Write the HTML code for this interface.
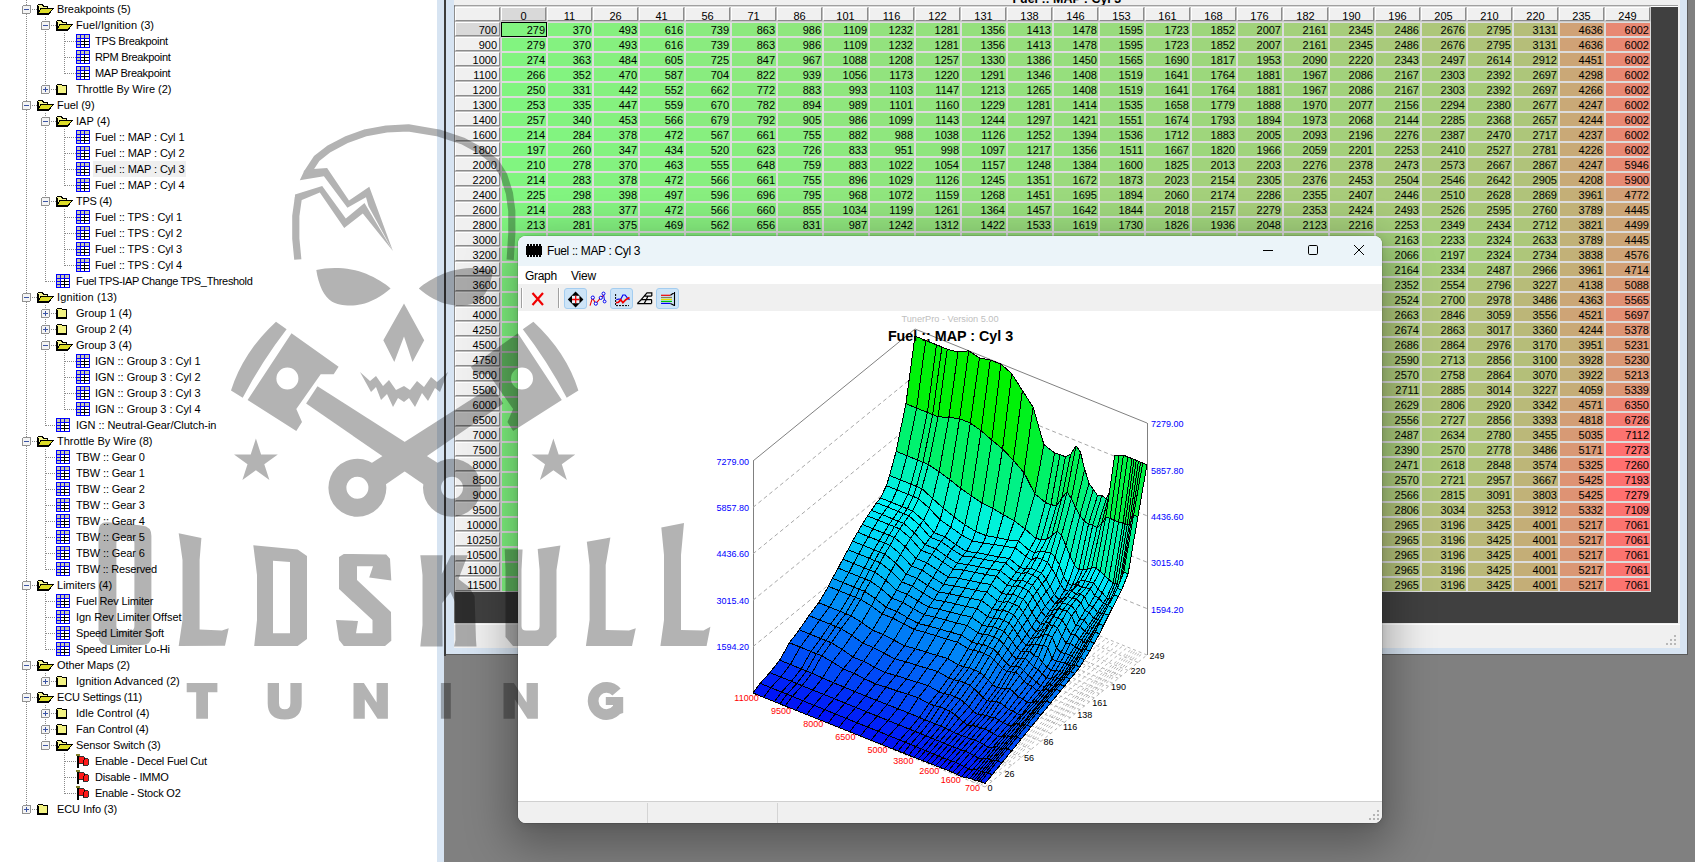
<!DOCTYPE html><html><head><meta charset="utf-8"><title>TunerPro</title><style>
*{box-sizing:border-box;margin:0;padding:0}
html,body{width:1695px;height:862px;overflow:hidden;background:#fff;font-family:"Liberation Sans",sans-serif;}
.abs{position:absolute}
#tree{position:absolute;left:0;top:0;width:437px;height:862px;background:#fff;font-size:11px;color:#000;overflow:hidden}
.ti{position:absolute;height:16px;line-height:16px;white-space:nowrap;letter-spacing:-0.1px}
.sel{background:#efefef}
#split{position:absolute;left:437px;top:0;width:9px;height:862px;background:linear-gradient(90deg,#d7e4f2 7px,#808080 7px)}
#mdi{position:absolute;left:446px;top:0;width:1249px;height:862px;background:#808080;overflow:hidden}
#tw{position:absolute;left:0;top:-30px;width:1242px;height:685px;background:#d7e4f2;border-right:1px solid #5a5a5a;border-bottom:1px solid #5a5a5a}
#twin{position:absolute;left:8px;top:30px;width:1226px;height:648px;background:#f0f0f0;overflow:hidden}
#gridbg{position:absolute;left:0;top:5px;width:1224px;height:618px;background:#404040;border-top:1px solid #a0a0a0;border-left:1px solid #696969;box-shadow:inset 0 1px 0 #fff}
#gridcells{position:absolute;left:1px;top:7px;width:1196px;height:585px;background:#dcdcdc}
.hc{position:absolute;height:14px;background:#f0f0f0;border:1px solid;border-color:#fff #8c8c8c #8c8c8c #fff;outline:0;font-size:11px;line-height:15px;overflow:hidden;box-shadow:0 0 0 0.5px #b4b4b4}
.hcs{background:#d9d9d9}
.dc{position:absolute;width:44px;height:13px;font-size:11px;line-height:14px;text-align:right;padding-right:1px;color:#000}
#status{position:absolute;left:0;top:624px;width:1226px;height:24px;background:#f0f0f0;border-top:1px solid #fff}

#gw{position:absolute;left:518px;top:236px;width:864px;height:587px;border-radius:8px;background:#fff;overflow:hidden;box-shadow:0 0 0 1px rgba(0,0,0,.10)}
#gsh{position:absolute;left:518px;top:236px;width:864px;height:587px;border-radius:8px;box-shadow:0 14px 44px 10px rgba(0,0,0,.30),0 2px 8px 0 rgba(0,0,0,.10)}
#gtitle{position:absolute;left:0;top:0;width:864px;height:30px;background:#ebf4f9}
#gmenu{position:absolute;left:0;top:30px;width:864px;height:18px;background:#fff;font-size:12px}
#gtool{position:absolute;left:0;top:48px;width:864px;height:27px;background:#f0f0f0}
#gstat{position:absolute;left:0;top:565px;width:864px;height:22px;background:#f0f0f0;border-top:1px solid #d0d0d0}
.tb{position:absolute;top:52px;width:23px;height:21px;border-radius:3px}
.tbs{background:#cde4f7;border:1px solid #a4cdf0}
</style></head><body><div id="tree"><svg class="abs" style="left:0;top:0" width="437" height="862" fill="none" stroke="#8a8a8a" stroke-width="1" stroke-dasharray="1 1" shape-rendering="crispEdges"><defs>
<g id="tbl" stroke-dasharray="none"><rect x="0.5" y="0.5" width="13" height="13" fill="#fff" stroke="#0000ff"/><rect x="1" y="1" width="12" height="3" fill="#c8c8b0" stroke="none"/><rect x="1" y="1" width="3" height="12" fill="#c8c8b0" stroke="none"/>
<path d="M4.5 0V14M0 4.5H14M0 7.5H4M0 10.5H4M8.5 0V4" stroke="#0000ff" stroke-width="1"/><path d="M8.5 5V13M5 7.5H13M5 10.5H13" stroke="#000" stroke-width="1"/></g>
<g id="flag" stroke-dasharray="none" stroke="none"><rect x="0" y="0" width="4" height="1.5" fill="#80802a"/><rect x="1" y="1.5" width="2" height="12.5" fill="#000"/><path d="M3 2.5H8V4.5H12V11H7V9H3Z" fill="#ff1a1a"/><path d="M3 2.5H8V4.5H12V11H7V9H3" fill="none" stroke="#000" stroke-width="0.8"/><path d="M8 4.5L7 9" stroke="#000" stroke-width="0.8"/></g>
</defs><line x1="31.5" y1="9.5" x2="37" y2="9.5"/><line x1="50.5" y1="25.5" x2="56" y2="25.5"/><line x1="64.5" y1="41.5" x2="76" y2="41.5"/><line x1="64.5" y1="57.5" x2="76" y2="57.5"/><line x1="64.5" y1="73.5" x2="76" y2="73.5"/><line x1="50.5" y1="89.5" x2="56" y2="89.5"/><line x1="31.5" y1="105.5" x2="37" y2="105.5"/><line x1="50.5" y1="121.5" x2="56" y2="121.5"/><line x1="64.5" y1="137.5" x2="76" y2="137.5"/><line x1="64.5" y1="153.5" x2="76" y2="153.5"/><line x1="64.5" y1="169.5" x2="76" y2="169.5"/><line x1="64.5" y1="185.5" x2="76" y2="185.5"/><line x1="50.5" y1="201.5" x2="56" y2="201.5"/><line x1="64.5" y1="217.5" x2="76" y2="217.5"/><line x1="64.5" y1="233.5" x2="76" y2="233.5"/><line x1="64.5" y1="249.5" x2="76" y2="249.5"/><line x1="64.5" y1="265.5" x2="76" y2="265.5"/><line x1="45.5" y1="281.5" x2="56" y2="281.5"/><line x1="31.5" y1="297.5" x2="37" y2="297.5"/><line x1="50.5" y1="313.5" x2="56" y2="313.5"/><line x1="50.5" y1="329.5" x2="56" y2="329.5"/><line x1="50.5" y1="345.5" x2="56" y2="345.5"/><line x1="64.5" y1="361.5" x2="76" y2="361.5"/><line x1="64.5" y1="377.5" x2="76" y2="377.5"/><line x1="64.5" y1="393.5" x2="76" y2="393.5"/><line x1="64.5" y1="409.5" x2="76" y2="409.5"/><line x1="45.5" y1="425.5" x2="56" y2="425.5"/><line x1="31.5" y1="441.5" x2="37" y2="441.5"/><line x1="45.5" y1="457.5" x2="56" y2="457.5"/><line x1="45.5" y1="473.5" x2="56" y2="473.5"/><line x1="45.5" y1="489.5" x2="56" y2="489.5"/><line x1="45.5" y1="505.5" x2="56" y2="505.5"/><line x1="45.5" y1="521.5" x2="56" y2="521.5"/><line x1="45.5" y1="537.5" x2="56" y2="537.5"/><line x1="45.5" y1="553.5" x2="56" y2="553.5"/><line x1="45.5" y1="569.5" x2="56" y2="569.5"/><line x1="31.5" y1="585.5" x2="37" y2="585.5"/><line x1="45.5" y1="601.5" x2="56" y2="601.5"/><line x1="45.5" y1="617.5" x2="56" y2="617.5"/><line x1="45.5" y1="633.5" x2="56" y2="633.5"/><line x1="45.5" y1="649.5" x2="56" y2="649.5"/><line x1="31.5" y1="665.5" x2="37" y2="665.5"/><line x1="50.5" y1="681.5" x2="56" y2="681.5"/><line x1="31.5" y1="697.5" x2="37" y2="697.5"/><line x1="50.5" y1="713.5" x2="56" y2="713.5"/><line x1="50.5" y1="729.5" x2="56" y2="729.5"/><line x1="50.5" y1="745.5" x2="56" y2="745.5"/><line x1="64.5" y1="761.5" x2="76" y2="761.5"/><line x1="64.5" y1="777.5" x2="76" y2="777.5"/><line x1="64.5" y1="793.5" x2="76" y2="793.5"/><line x1="31.5" y1="809.5" x2="37" y2="809.5"/><line x1="26.5" y1="0" x2="26.5" y2="809"/><line x1="45.5" y1="17" x2="45.5" y2="90"/><line x1="64.5" y1="33" x2="64.5" y2="74"/><line x1="45.5" y1="113" x2="45.5" y2="282"/><line x1="64.5" y1="129" x2="64.5" y2="186"/><line x1="64.5" y1="209" x2="64.5" y2="266"/><line x1="45.5" y1="305" x2="45.5" y2="426"/><line x1="64.5" y1="353" x2="64.5" y2="410"/><line x1="45.5" y1="449" x2="45.5" y2="570"/><line x1="45.5" y1="593" x2="45.5" y2="650"/><line x1="45.5" y1="673" x2="45.5" y2="682"/><line x1="45.5" y1="705" x2="45.5" y2="746"/><line x1="64.5" y1="753" x2="64.5" y2="794"/><g transform="translate(22,5)"><rect x="0.5" y="0.5" width="8" height="8" rx="1.5" fill="#f4f4f4" stroke="#919191" stroke-dasharray="none"/><path d="M2 4.5H7" stroke="#3c55a5" stroke-width="1" stroke-dasharray="none"/></g><g transform="translate(37,4)" stroke-dasharray="none" stroke="#000" stroke-width="1"><path d="M0.5 10.5V1.5L2 0.5H5L6.5 2H10.5V4.5" fill="#f6f690"/><path d="M0.5 10.5L4 4.5H16L11.5 10.5Z" fill="#dcdc28"/><path d="M1 2V10M0.5 10H11.5" stroke-width="1.6"/></g><g transform="translate(41,21)"><rect x="0.5" y="0.5" width="8" height="8" rx="1.5" fill="#f4f4f4" stroke="#919191" stroke-dasharray="none"/><path d="M2 4.5H7" stroke="#3c55a5" stroke-width="1" stroke-dasharray="none"/></g><g transform="translate(56,20)" stroke-dasharray="none" stroke="#000" stroke-width="1"><path d="M0.5 10.5V1.5L2 0.5H5L6.5 2H10.5V4.5" fill="#f6f690"/><path d="M0.5 10.5L4 4.5H16L11.5 10.5Z" fill="#dcdc28"/><path d="M1 2V10M0.5 10H11.5" stroke-width="1.6"/></g><use href="#tbl" x="76" y="34"/><use href="#tbl" x="76" y="50"/><use href="#tbl" x="76" y="66"/><g transform="translate(41,85)"><rect x="0.5" y="0.5" width="8" height="8" rx="1.5" fill="#f4f4f4" stroke="#919191" stroke-dasharray="none"/><path d="M2 4.5H7M4.5 2V7" stroke="#3c55a5" stroke-width="1" stroke-dasharray="none"/></g><g transform="translate(56,84)" stroke-dasharray="none" stroke="#000" stroke-width="1"><path d="M0.5 10.5V1.5L2 0.5H5L6.5 1.5H10.5V10.5Z" fill="#f4f484"/><path d="M1 2V10M0.5 10.2H10.5" stroke-width="1.6"/></g><g transform="translate(22,101)"><rect x="0.5" y="0.5" width="8" height="8" rx="1.5" fill="#f4f4f4" stroke="#919191" stroke-dasharray="none"/><path d="M2 4.5H7" stroke="#3c55a5" stroke-width="1" stroke-dasharray="none"/></g><g transform="translate(37,100)" stroke-dasharray="none" stroke="#000" stroke-width="1"><path d="M0.5 10.5V1.5L2 0.5H5L6.5 2H10.5V4.5" fill="#f6f690"/><path d="M0.5 10.5L4 4.5H16L11.5 10.5Z" fill="#dcdc28"/><path d="M1 2V10M0.5 10H11.5" stroke-width="1.6"/></g><g transform="translate(41,117)"><rect x="0.5" y="0.5" width="8" height="8" rx="1.5" fill="#f4f4f4" stroke="#919191" stroke-dasharray="none"/><path d="M2 4.5H7" stroke="#3c55a5" stroke-width="1" stroke-dasharray="none"/></g><g transform="translate(56,116)" stroke-dasharray="none" stroke="#000" stroke-width="1"><path d="M0.5 10.5V1.5L2 0.5H5L6.5 2H10.5V4.5" fill="#f6f690"/><path d="M0.5 10.5L4 4.5H16L11.5 10.5Z" fill="#dcdc28"/><path d="M1 2V10M0.5 10H11.5" stroke-width="1.6"/></g><use href="#tbl" x="76" y="130"/><use href="#tbl" x="76" y="146"/><use href="#tbl" x="76" y="162"/><use href="#tbl" x="76" y="178"/><g transform="translate(41,197)"><rect x="0.5" y="0.5" width="8" height="8" rx="1.5" fill="#f4f4f4" stroke="#919191" stroke-dasharray="none"/><path d="M2 4.5H7" stroke="#3c55a5" stroke-width="1" stroke-dasharray="none"/></g><g transform="translate(56,196)" stroke-dasharray="none" stroke="#000" stroke-width="1"><path d="M0.5 10.5V1.5L2 0.5H5L6.5 2H10.5V4.5" fill="#f6f690"/><path d="M0.5 10.5L4 4.5H16L11.5 10.5Z" fill="#dcdc28"/><path d="M1 2V10M0.5 10H11.5" stroke-width="1.6"/></g><use href="#tbl" x="76" y="210"/><use href="#tbl" x="76" y="226"/><use href="#tbl" x="76" y="242"/><use href="#tbl" x="76" y="258"/><use href="#tbl" x="56" y="274"/><g transform="translate(22,293)"><rect x="0.5" y="0.5" width="8" height="8" rx="1.5" fill="#f4f4f4" stroke="#919191" stroke-dasharray="none"/><path d="M2 4.5H7" stroke="#3c55a5" stroke-width="1" stroke-dasharray="none"/></g><g transform="translate(37,292)" stroke-dasharray="none" stroke="#000" stroke-width="1"><path d="M0.5 10.5V1.5L2 0.5H5L6.5 2H10.5V4.5" fill="#f6f690"/><path d="M0.5 10.5L4 4.5H16L11.5 10.5Z" fill="#dcdc28"/><path d="M1 2V10M0.5 10H11.5" stroke-width="1.6"/></g><g transform="translate(41,309)"><rect x="0.5" y="0.5" width="8" height="8" rx="1.5" fill="#f4f4f4" stroke="#919191" stroke-dasharray="none"/><path d="M2 4.5H7M4.5 2V7" stroke="#3c55a5" stroke-width="1" stroke-dasharray="none"/></g><g transform="translate(56,308)" stroke-dasharray="none" stroke="#000" stroke-width="1"><path d="M0.5 10.5V1.5L2 0.5H5L6.5 1.5H10.5V10.5Z" fill="#f4f484"/><path d="M1 2V10M0.5 10.2H10.5" stroke-width="1.6"/></g><g transform="translate(41,325)"><rect x="0.5" y="0.5" width="8" height="8" rx="1.5" fill="#f4f4f4" stroke="#919191" stroke-dasharray="none"/><path d="M2 4.5H7M4.5 2V7" stroke="#3c55a5" stroke-width="1" stroke-dasharray="none"/></g><g transform="translate(56,324)" stroke-dasharray="none" stroke="#000" stroke-width="1"><path d="M0.5 10.5V1.5L2 0.5H5L6.5 1.5H10.5V10.5Z" fill="#f4f484"/><path d="M1 2V10M0.5 10.2H10.5" stroke-width="1.6"/></g><g transform="translate(41,341)"><rect x="0.5" y="0.5" width="8" height="8" rx="1.5" fill="#f4f4f4" stroke="#919191" stroke-dasharray="none"/><path d="M2 4.5H7" stroke="#3c55a5" stroke-width="1" stroke-dasharray="none"/></g><g transform="translate(56,340)" stroke-dasharray="none" stroke="#000" stroke-width="1"><path d="M0.5 10.5V1.5L2 0.5H5L6.5 2H10.5V4.5" fill="#f6f690"/><path d="M0.5 10.5L4 4.5H16L11.5 10.5Z" fill="#dcdc28"/><path d="M1 2V10M0.5 10H11.5" stroke-width="1.6"/></g><use href="#tbl" x="76" y="354"/><use href="#tbl" x="76" y="370"/><use href="#tbl" x="76" y="386"/><use href="#tbl" x="76" y="402"/><use href="#tbl" x="56" y="418"/><g transform="translate(22,437)"><rect x="0.5" y="0.5" width="8" height="8" rx="1.5" fill="#f4f4f4" stroke="#919191" stroke-dasharray="none"/><path d="M2 4.5H7" stroke="#3c55a5" stroke-width="1" stroke-dasharray="none"/></g><g transform="translate(37,436)" stroke-dasharray="none" stroke="#000" stroke-width="1"><path d="M0.5 10.5V1.5L2 0.5H5L6.5 2H10.5V4.5" fill="#f6f690"/><path d="M0.5 10.5L4 4.5H16L11.5 10.5Z" fill="#dcdc28"/><path d="M1 2V10M0.5 10H11.5" stroke-width="1.6"/></g><use href="#tbl" x="56" y="450"/><use href="#tbl" x="56" y="466"/><use href="#tbl" x="56" y="482"/><use href="#tbl" x="56" y="498"/><use href="#tbl" x="56" y="514"/><use href="#tbl" x="56" y="530"/><use href="#tbl" x="56" y="546"/><use href="#tbl" x="56" y="562"/><g transform="translate(22,581)"><rect x="0.5" y="0.5" width="8" height="8" rx="1.5" fill="#f4f4f4" stroke="#919191" stroke-dasharray="none"/><path d="M2 4.5H7" stroke="#3c55a5" stroke-width="1" stroke-dasharray="none"/></g><g transform="translate(37,580)" stroke-dasharray="none" stroke="#000" stroke-width="1"><path d="M0.5 10.5V1.5L2 0.5H5L6.5 2H10.5V4.5" fill="#f6f690"/><path d="M0.5 10.5L4 4.5H16L11.5 10.5Z" fill="#dcdc28"/><path d="M1 2V10M0.5 10H11.5" stroke-width="1.6"/></g><use href="#tbl" x="56" y="594"/><use href="#tbl" x="56" y="610"/><use href="#tbl" x="56" y="626"/><use href="#tbl" x="56" y="642"/><g transform="translate(22,661)"><rect x="0.5" y="0.5" width="8" height="8" rx="1.5" fill="#f4f4f4" stroke="#919191" stroke-dasharray="none"/><path d="M2 4.5H7" stroke="#3c55a5" stroke-width="1" stroke-dasharray="none"/></g><g transform="translate(37,660)" stroke-dasharray="none" stroke="#000" stroke-width="1"><path d="M0.5 10.5V1.5L2 0.5H5L6.5 2H10.5V4.5" fill="#f6f690"/><path d="M0.5 10.5L4 4.5H16L11.5 10.5Z" fill="#dcdc28"/><path d="M1 2V10M0.5 10H11.5" stroke-width="1.6"/></g><g transform="translate(41,677)"><rect x="0.5" y="0.5" width="8" height="8" rx="1.5" fill="#f4f4f4" stroke="#919191" stroke-dasharray="none"/><path d="M2 4.5H7M4.5 2V7" stroke="#3c55a5" stroke-width="1" stroke-dasharray="none"/></g><g transform="translate(56,676)" stroke-dasharray="none" stroke="#000" stroke-width="1"><path d="M0.5 10.5V1.5L2 0.5H5L6.5 1.5H10.5V10.5Z" fill="#f4f484"/><path d="M1 2V10M0.5 10.2H10.5" stroke-width="1.6"/></g><g transform="translate(22,693)"><rect x="0.5" y="0.5" width="8" height="8" rx="1.5" fill="#f4f4f4" stroke="#919191" stroke-dasharray="none"/><path d="M2 4.5H7" stroke="#3c55a5" stroke-width="1" stroke-dasharray="none"/></g><g transform="translate(37,692)" stroke-dasharray="none" stroke="#000" stroke-width="1"><path d="M0.5 10.5V1.5L2 0.5H5L6.5 2H10.5V4.5" fill="#f6f690"/><path d="M0.5 10.5L4 4.5H16L11.5 10.5Z" fill="#dcdc28"/><path d="M1 2V10M0.5 10H11.5" stroke-width="1.6"/></g><g transform="translate(41,709)"><rect x="0.5" y="0.5" width="8" height="8" rx="1.5" fill="#f4f4f4" stroke="#919191" stroke-dasharray="none"/><path d="M2 4.5H7M4.5 2V7" stroke="#3c55a5" stroke-width="1" stroke-dasharray="none"/></g><g transform="translate(56,708)" stroke-dasharray="none" stroke="#000" stroke-width="1"><path d="M0.5 10.5V1.5L2 0.5H5L6.5 1.5H10.5V10.5Z" fill="#f4f484"/><path d="M1 2V10M0.5 10.2H10.5" stroke-width="1.6"/></g><g transform="translate(41,725)"><rect x="0.5" y="0.5" width="8" height="8" rx="1.5" fill="#f4f4f4" stroke="#919191" stroke-dasharray="none"/><path d="M2 4.5H7M4.5 2V7" stroke="#3c55a5" stroke-width="1" stroke-dasharray="none"/></g><g transform="translate(56,724)" stroke-dasharray="none" stroke="#000" stroke-width="1"><path d="M0.5 10.5V1.5L2 0.5H5L6.5 1.5H10.5V10.5Z" fill="#f4f484"/><path d="M1 2V10M0.5 10.2H10.5" stroke-width="1.6"/></g><g transform="translate(41,741)"><rect x="0.5" y="0.5" width="8" height="8" rx="1.5" fill="#f4f4f4" stroke="#919191" stroke-dasharray="none"/><path d="M2 4.5H7" stroke="#3c55a5" stroke-width="1" stroke-dasharray="none"/></g><g transform="translate(56,740)" stroke-dasharray="none" stroke="#000" stroke-width="1"><path d="M0.5 10.5V1.5L2 0.5H5L6.5 2H10.5V4.5" fill="#f6f690"/><path d="M0.5 10.5L4 4.5H16L11.5 10.5Z" fill="#dcdc28"/><path d="M1 2V10M0.5 10H11.5" stroke-width="1.6"/></g><use href="#flag" x="76" y="754"/><use href="#flag" x="76" y="770"/><use href="#flag" x="76" y="786"/><g transform="translate(22,805)"><rect x="0.5" y="0.5" width="8" height="8" rx="1.5" fill="#f4f4f4" stroke="#919191" stroke-dasharray="none"/><path d="M2 4.5H7M4.5 2V7" stroke="#3c55a5" stroke-width="1" stroke-dasharray="none"/></g><g transform="translate(37,804)" stroke-dasharray="none" stroke="#000" stroke-width="1"><path d="M0.5 10.5V1.5L2 0.5H5L6.5 1.5H10.5V10.5Z" fill="#f4f484"/><path d="M1 2V10M0.5 10.2H10.5" stroke-width="1.6"/></g></svg><div class="ti" style="left:55px;top:1px;padding:0 2px;letter-spacing:-0.07px">Breakpoints (5)</div><div class="ti" style="left:74px;top:17px;padding:0 2px;letter-spacing:0.10px">Fuel/Ignition (3)</div><div class="ti" style="left:93px;top:33px;padding:0 2px;letter-spacing:-0.30px">TPS Breakpoint</div><div class="ti" style="left:93px;top:49px;padding:0 2px;letter-spacing:-0.33px">RPM Breakpoint</div><div class="ti" style="left:93px;top:65px;padding:0 2px;letter-spacing:-0.29px">MAP Breakpoint</div><div class="ti" style="left:74px;top:81px;padding:0 2px;letter-spacing:0.01px">Throttle By Wire (2)</div><div class="ti" style="left:55px;top:97px;padding:0 2px;letter-spacing:-0.05px">Fuel (9)</div><div class="ti" style="left:74px;top:113px;padding:0 2px;letter-spacing:0.01px">IAP (4)</div><div class="ti" style="left:93px;top:129px;padding:0 2px;letter-spacing:-0.11px">Fuel :: MAP : Cyl 1</div><div class="ti" style="left:93px;top:145px;padding:0 2px;letter-spacing:-0.11px">Fuel :: MAP : Cyl 2</div><div class="ti sel" style="left:93px;top:161px;padding:0 2px;letter-spacing:-0.11px">Fuel :: MAP : Cyl 3</div><div class="ti" style="left:93px;top:177px;padding:0 2px;letter-spacing:-0.11px">Fuel :: MAP : Cyl 4</div><div class="ti" style="left:74px;top:193px;padding:0 2px;letter-spacing:-0.28px">TPS (4)</div><div class="ti" style="left:93px;top:209px;padding:0 2px;letter-spacing:-0.11px">Fuel :: TPS : Cyl 1</div><div class="ti" style="left:93px;top:225px;padding:0 2px;letter-spacing:-0.11px">Fuel :: TPS : Cyl 2</div><div class="ti" style="left:93px;top:241px;padding:0 2px;letter-spacing:-0.11px">Fuel :: TPS : Cyl 3</div><div class="ti" style="left:93px;top:257px;padding:0 2px;letter-spacing:-0.11px">Fuel :: TPS : Cyl 4</div><div class="ti" style="left:74px;top:273px;padding:0 2px;letter-spacing:-0.34px">Fuel TPS-IAP Change TPS_Threshold</div><div class="ti" style="left:55px;top:289px;padding:0 2px;letter-spacing:0.15px">Ignition (13)</div><div class="ti" style="left:74px;top:305px;padding:0 2px;letter-spacing:-0.03px">Group 1 (4)</div><div class="ti" style="left:74px;top:321px;padding:0 2px;letter-spacing:-0.03px">Group 2 (4)</div><div class="ti" style="left:74px;top:337px;padding:0 2px;letter-spacing:-0.03px">Group 3 (4)</div><div class="ti" style="left:93px;top:353px;padding:0 2px;letter-spacing:-0.01px">IGN :: Group 3 : Cyl 1</div><div class="ti" style="left:93px;top:369px;padding:0 2px;letter-spacing:-0.01px">IGN :: Group 3 : Cyl 2</div><div class="ti" style="left:93px;top:385px;padding:0 2px;letter-spacing:-0.01px">IGN :: Group 3 : Cyl 3</div><div class="ti" style="left:93px;top:401px;padding:0 2px;letter-spacing:-0.01px">IGN :: Group 3 : Cyl 4</div><div class="ti" style="left:74px;top:417px;padding:0 2px;letter-spacing:-0.05px">IGN :: Neutral-Gear/Clutch-in</div><div class="ti" style="left:55px;top:433px;padding:0 2px;letter-spacing:0.01px">Throttle By Wire (8)</div><div class="ti" style="left:74px;top:449px;padding:0 2px;letter-spacing:-0.12px">TBW :: Gear 0</div><div class="ti" style="left:74px;top:465px;padding:0 2px;letter-spacing:-0.12px">TBW :: Gear 1</div><div class="ti" style="left:74px;top:481px;padding:0 2px;letter-spacing:-0.12px">TBW :: Gear 2</div><div class="ti" style="left:74px;top:497px;padding:0 2px;letter-spacing:-0.12px">TBW :: Gear 3</div><div class="ti" style="left:74px;top:513px;padding:0 2px;letter-spacing:-0.12px">TBW :: Gear 4</div><div class="ti" style="left:74px;top:529px;padding:0 2px;letter-spacing:-0.12px">TBW :: Gear 5</div><div class="ti" style="left:74px;top:545px;padding:0 2px;letter-spacing:-0.12px">TBW :: Gear 6</div><div class="ti" style="left:74px;top:561px;padding:0 2px;letter-spacing:-0.19px">TBW :: Reserved</div><div class="ti" style="left:55px;top:577px;padding:0 2px;letter-spacing:0.01px">Limiters (4)</div><div class="ti" style="left:74px;top:593px;padding:0 2px;letter-spacing:-0.18px">Fuel Rev Limiter</div><div class="ti" style="left:74px;top:609px;padding:0 2px;letter-spacing:-0.03px">Ign Rev Limiter Offset</div><div class="ti" style="left:74px;top:625px;padding:0 2px;letter-spacing:-0.15px">Speed Limiter Soft</div><div class="ti" style="left:74px;top:641px;padding:0 2px;letter-spacing:-0.18px">Speed Limiter Lo-Hi</div><div class="ti" style="left:55px;top:657px;padding:0 2px;letter-spacing:-0.08px">Other Maps (2)</div><div class="ti" style="left:74px;top:673px;padding:0 2px;letter-spacing:0.02px">Ignition Advanced (2)</div><div class="ti" style="left:55px;top:689px;padding:0 2px;letter-spacing:-0.17px">ECU Settings (11)</div><div class="ti" style="left:74px;top:705px;padding:0 2px;letter-spacing:0.05px">Idle Control (4)</div><div class="ti" style="left:74px;top:721px;padding:0 2px;letter-spacing:-0.09px">Fan Control (4)</div><div class="ti" style="left:74px;top:737px;padding:0 2px;letter-spacing:-0.13px">Sensor Switch (3)</div><div class="ti" style="left:93px;top:753px;padding:0 2px;letter-spacing:-0.22px">Enable - Decel Fuel Cut</div><div class="ti" style="left:93px;top:769px;padding:0 2px;letter-spacing:-0.20px">Disable - IMMO</div><div class="ti" style="left:93px;top:785px;padding:0 2px;letter-spacing:-0.22px">Enable - Stock O2</div><div class="ti" style="left:55px;top:801px;padding:0 2px;letter-spacing:-0.09px">ECU Info (3)</div></div><div id="split"><div class="abs" style="left:7px;top:0;width:2px;height:656px;background:#3c3c3c"></div></div><div id="mdi"><div id="tw"><div id="twin"><div class="abs" style="left:558.5px;top:-7.5px;font-weight:bold;font-size:12.4px;white-space:nowrap;line-height:13px;letter-spacing:0">Fuel :: MAP : Cyl 3</div><div id="gridbg"></div><div id="gridcells"><div class="hc" style="left:0px;top:0px;width:45px;text-align:center;"></div><div class="hc hcs" style="line-height:17px;left:46px;top:0px;width:45px;text-align:center;">0</div><div class="hc" style="line-height:17px;left:92px;top:0px;width:45px;text-align:center;">11</div><div class="hc" style="line-height:17px;left:138px;top:0px;width:45px;text-align:center;">26</div><div class="hc" style="line-height:17px;left:184px;top:0px;width:45px;text-align:center;">41</div><div class="hc" style="line-height:17px;left:230px;top:0px;width:45px;text-align:center;">56</div><div class="hc" style="line-height:17px;left:276px;top:0px;width:45px;text-align:center;">71</div><div class="hc" style="line-height:17px;left:322px;top:0px;width:45px;text-align:center;">86</div><div class="hc" style="line-height:17px;left:368px;top:0px;width:45px;text-align:center;">101</div><div class="hc" style="line-height:17px;left:414px;top:0px;width:45px;text-align:center;">116</div><div class="hc" style="line-height:17px;left:460px;top:0px;width:45px;text-align:center;">122</div><div class="hc" style="line-height:17px;left:506px;top:0px;width:45px;text-align:center;">131</div><div class="hc" style="line-height:17px;left:552px;top:0px;width:45px;text-align:center;">138</div><div class="hc" style="line-height:17px;left:598px;top:0px;width:45px;text-align:center;">146</div><div class="hc" style="line-height:17px;left:644px;top:0px;width:45px;text-align:center;">153</div><div class="hc" style="line-height:17px;left:690px;top:0px;width:45px;text-align:center;">161</div><div class="hc" style="line-height:17px;left:736px;top:0px;width:45px;text-align:center;">168</div><div class="hc" style="line-height:17px;left:782px;top:0px;width:45px;text-align:center;">176</div><div class="hc" style="line-height:17px;left:828px;top:0px;width:45px;text-align:center;">182</div><div class="hc" style="line-height:17px;left:874px;top:0px;width:45px;text-align:center;">190</div><div class="hc" style="line-height:17px;left:920px;top:0px;width:45px;text-align:center;">196</div><div class="hc" style="line-height:17px;left:966px;top:0px;width:45px;text-align:center;">205</div><div class="hc" style="line-height:17px;left:1012px;top:0px;width:45px;text-align:center;">210</div><div class="hc" style="line-height:17px;left:1058px;top:0px;width:45px;text-align:center;">220</div><div class="hc" style="line-height:17px;left:1104px;top:0px;width:45px;text-align:center;">235</div><div class="hc" style="line-height:17px;left:1150px;top:0px;width:45px;text-align:center;">249</div><div class="hc hcs" style="left:0px;top:15px;width:45px;text-align:right;padding-right:2px;">700</div><div class="dc" style="left:47px;top:16px;background:#82f480;outline:1px solid #000;">279</div><div class="dc" style="left:93px;top:16px;background:#84f280;">370</div><div class="dc" style="left:139px;top:16px;background:#86f07f;">493</div><div class="dc" style="left:185px;top:16px;background:#88ee7f;">616</div><div class="dc" style="left:231px;top:16px;background:#8aeb7f;">739</div><div class="dc" style="left:277px;top:16px;background:#8ce97e;">863</div><div class="dc" style="left:323px;top:16px;background:#8fe77e;">986</div><div class="dc" style="left:369px;top:16px;background:#91e47e;">1109</div><div class="dc" style="left:415px;top:16px;background:#93e27e;">1232</div><div class="dc" style="left:461px;top:16px;background:#94e17e;">1281</div><div class="dc" style="left:507px;top:16px;background:#95e07d;">1356</div><div class="dc" style="left:553px;top:16px;background:#96df7d;">1413</div><div class="dc" style="left:599px;top:16px;background:#97dd7d;">1478</div><div class="dc" style="left:645px;top:16px;background:#99db7d;">1595</div><div class="dc" style="left:691px;top:16px;background:#9cd97d;">1723</div><div class="dc" style="left:737px;top:16px;background:#9ed67c;">1852</div><div class="dc" style="left:783px;top:16px;background:#a1d37c;">2007</div><div class="dc" style="left:829px;top:16px;background:#a4d17c;">2161</div><div class="dc" style="left:875px;top:16px;background:#a7cd7b;">2345</div><div class="dc" style="left:921px;top:16px;background:#a9ca7b;">2486</div><div class="dc" style="left:967px;top:16px;background:#adc77a;">2676</div><div class="dc" style="left:1013px;top:16px;background:#afc57a;">2795</div><div class="dc" style="left:1059px;top:16px;background:#b5be79;">3131</div><div class="dc" style="left:1105px;top:16px;background:#d0a276;">4636</div><div class="dc" style="left:1151px;top:16px;background:#e88873;">6002</div><div class="hc" style="left:0px;top:30px;width:45px;text-align:right;padding-right:2px;">900</div><div class="dc" style="left:47px;top:31px;background:#82f480;">279</div><div class="dc" style="left:93px;top:31px;background:#84f280;">370</div><div class="dc" style="left:139px;top:31px;background:#86f07f;">493</div><div class="dc" style="left:185px;top:31px;background:#88ee7f;">616</div><div class="dc" style="left:231px;top:31px;background:#8aeb7f;">739</div><div class="dc" style="left:277px;top:31px;background:#8ce97e;">863</div><div class="dc" style="left:323px;top:31px;background:#8fe77e;">986</div><div class="dc" style="left:369px;top:31px;background:#91e47e;">1109</div><div class="dc" style="left:415px;top:31px;background:#93e27e;">1232</div><div class="dc" style="left:461px;top:31px;background:#94e17e;">1281</div><div class="dc" style="left:507px;top:31px;background:#95e07d;">1356</div><div class="dc" style="left:553px;top:31px;background:#96df7d;">1413</div><div class="dc" style="left:599px;top:31px;background:#97dd7d;">1478</div><div class="dc" style="left:645px;top:31px;background:#99db7d;">1595</div><div class="dc" style="left:691px;top:31px;background:#9cd97d;">1723</div><div class="dc" style="left:737px;top:31px;background:#9ed67c;">1852</div><div class="dc" style="left:783px;top:31px;background:#a1d37c;">2007</div><div class="dc" style="left:829px;top:31px;background:#a4d17c;">2161</div><div class="dc" style="left:875px;top:31px;background:#a7cd7b;">2345</div><div class="dc" style="left:921px;top:31px;background:#a9ca7b;">2486</div><div class="dc" style="left:967px;top:31px;background:#adc77a;">2676</div><div class="dc" style="left:1013px;top:31px;background:#afc57a;">2795</div><div class="dc" style="left:1059px;top:31px;background:#b5be79;">3131</div><div class="dc" style="left:1105px;top:31px;background:#d0a276;">4636</div><div class="dc" style="left:1151px;top:31px;background:#e88873;">6002</div><div class="hc" style="left:0px;top:45px;width:45px;text-align:right;padding-right:2px;">1000</div><div class="dc" style="left:47px;top:46px;background:#82f480;">274</div><div class="dc" style="left:93px;top:46px;background:#83f280;">363</div><div class="dc" style="left:139px;top:46px;background:#86f07f;">484</div><div class="dc" style="left:185px;top:46px;background:#88ee7f;">605</div><div class="dc" style="left:231px;top:46px;background:#8aec7f;">725</div><div class="dc" style="left:277px;top:46px;background:#8ce97e;">847</div><div class="dc" style="left:323px;top:46px;background:#8ee77e;">967</div><div class="dc" style="left:369px;top:46px;background:#90e57e;">1088</div><div class="dc" style="left:415px;top:46px;background:#92e27e;">1208</div><div class="dc" style="left:461px;top:46px;background:#93e27e;">1257</div><div class="dc" style="left:507px;top:46px;background:#95e07d;">1330</div><div class="dc" style="left:553px;top:46px;background:#96df7d;">1386</div><div class="dc" style="left:599px;top:46px;background:#97de7d;">1450</div><div class="dc" style="left:645px;top:46px;background:#99dc7d;">1565</div><div class="dc" style="left:691px;top:46px;background:#9bd97d;">1690</div><div class="dc" style="left:737px;top:46px;background:#9dd77c;">1817</div><div class="dc" style="left:783px;top:46px;background:#a0d47c;">1953</div><div class="dc" style="left:829px;top:46px;background:#a2d27c;">2090</div><div class="dc" style="left:875px;top:46px;background:#a5cf7b;">2220</div><div class="dc" style="left:921px;top:46px;background:#a7cd7b;">2343</div><div class="dc" style="left:967px;top:46px;background:#aaca7b;">2497</div><div class="dc" style="left:1013px;top:46px;background:#acc87b;">2614</div><div class="dc" style="left:1059px;top:46px;background:#b1c27a;">2912</div><div class="dc" style="left:1105px;top:46px;background:#cca576;">4451</div><div class="dc" style="left:1151px;top:46px;background:#e88873;">6002</div><div class="hc" style="left:0px;top:60px;width:45px;text-align:right;padding-right:2px;">1100</div><div class="dc" style="left:47px;top:61px;background:#82f480;">266</div><div class="dc" style="left:93px;top:61px;background:#83f380;">352</div><div class="dc" style="left:139px;top:61px;background:#85f07f;">470</div><div class="dc" style="left:185px;top:61px;background:#87ee7f;">587</div><div class="dc" style="left:231px;top:61px;background:#89ec7f;">704</div><div class="dc" style="left:277px;top:61px;background:#8cea7f;">822</div><div class="dc" style="left:323px;top:61px;background:#8ee87e;">939</div><div class="dc" style="left:369px;top:61px;background:#90e57e;">1056</div><div class="dc" style="left:415px;top:61px;background:#92e37e;">1173</div><div class="dc" style="left:461px;top:61px;background:#93e27e;">1220</div><div class="dc" style="left:507px;top:61px;background:#94e17d;">1291</div><div class="dc" style="left:553px;top:61px;background:#95e07d;">1346</div><div class="dc" style="left:599px;top:61px;background:#96df7d;">1408</div><div class="dc" style="left:645px;top:61px;background:#98dd7d;">1519</div><div class="dc" style="left:691px;top:61px;background:#9ada7d;">1641</div><div class="dc" style="left:737px;top:61px;background:#9cd87c;">1764</div><div class="dc" style="left:783px;top:61px;background:#9fd67c;">1881</div><div class="dc" style="left:829px;top:61px;background:#a0d47c;">1967</div><div class="dc" style="left:875px;top:61px;background:#a2d27c;">2086</div><div class="dc" style="left:921px;top:61px;background:#a4d07c;">2167</div><div class="dc" style="left:967px;top:61px;background:#a6ce7b;">2303</div><div class="dc" style="left:1013px;top:61px;background:#a8cc7b;">2392</div><div class="dc" style="left:1059px;top:61px;background:#adc67a;">2697</div><div class="dc" style="left:1105px;top:61px;background:#caa877;">4298</div><div class="dc" style="left:1151px;top:61px;background:#e88873;">6002</div><div class="hc" style="left:0px;top:75px;width:45px;text-align:right;padding-right:2px;">1200</div><div class="dc" style="left:47px;top:76px;background:#81f580;">250</div><div class="dc" style="left:93px;top:76px;background:#83f380;">331</div><div class="dc" style="left:139px;top:76px;background:#85f17f;">442</div><div class="dc" style="left:185px;top:76px;background:#87ef7f;">552</div><div class="dc" style="left:231px;top:76px;background:#89ed7f;">662</div><div class="dc" style="left:277px;top:76px;background:#8beb7f;">772</div><div class="dc" style="left:323px;top:76px;background:#8de97e;">883</div><div class="dc" style="left:369px;top:76px;background:#8fe77e;">993</div><div class="dc" style="left:415px;top:76px;background:#91e47e;">1103</div><div class="dc" style="left:461px;top:76px;background:#91e47e;">1147</div><div class="dc" style="left:507px;top:76px;background:#93e27e;">1213</div><div class="dc" style="left:553px;top:76px;background:#94e17e;">1265</div><div class="dc" style="left:599px;top:76px;background:#96df7d;">1408</div><div class="dc" style="left:645px;top:76px;background:#98dd7d;">1519</div><div class="dc" style="left:691px;top:76px;background:#9ada7d;">1641</div><div class="dc" style="left:737px;top:76px;background:#9cd87c;">1764</div><div class="dc" style="left:783px;top:76px;background:#9fd67c;">1881</div><div class="dc" style="left:829px;top:76px;background:#a0d47c;">1967</div><div class="dc" style="left:875px;top:76px;background:#a2d27c;">2086</div><div class="dc" style="left:921px;top:76px;background:#a4d07c;">2167</div><div class="dc" style="left:967px;top:76px;background:#a6ce7b;">2303</div><div class="dc" style="left:1013px;top:76px;background:#a8cc7b;">2392</div><div class="dc" style="left:1059px;top:76px;background:#adc67a;">2697</div><div class="dc" style="left:1105px;top:76px;background:#c9a977;">4266</div><div class="dc" style="left:1151px;top:76px;background:#e88873;">6002</div><div class="hc" style="left:0px;top:90px;width:45px;text-align:right;padding-right:2px;">1300</div><div class="dc" style="left:47px;top:91px;background:#81f480;">253</div><div class="dc" style="left:93px;top:91px;background:#83f380;">335</div><div class="dc" style="left:139px;top:91px;background:#85f17f;">447</div><div class="dc" style="left:185px;top:91px;background:#87ef7f;">559</div><div class="dc" style="left:231px;top:91px;background:#89ed7f;">670</div><div class="dc" style="left:277px;top:91px;background:#8beb7f;">782</div><div class="dc" style="left:323px;top:91px;background:#8de87e;">894</div><div class="dc" style="left:369px;top:91px;background:#8fe77e;">989</div><div class="dc" style="left:415px;top:91px;background:#91e57e;">1101</div><div class="dc" style="left:461px;top:91px;background:#92e37e;">1160</div><div class="dc" style="left:507px;top:91px;background:#93e27e;">1229</div><div class="dc" style="left:553px;top:91px;background:#94e17e;">1281</div><div class="dc" style="left:599px;top:91px;background:#96df7d;">1414</div><div class="dc" style="left:645px;top:91px;background:#98dc7d;">1535</div><div class="dc" style="left:691px;top:91px;background:#9bda7d;">1658</div><div class="dc" style="left:737px;top:91px;background:#9dd87c;">1779</div><div class="dc" style="left:783px;top:91px;background:#9fd67c;">1888</div><div class="dc" style="left:829px;top:91px;background:#a0d47c;">1970</div><div class="dc" style="left:875px;top:91px;background:#a2d27c;">2077</div><div class="dc" style="left:921px;top:91px;background:#a3d17c;">2156</div><div class="dc" style="left:967px;top:91px;background:#a6ce7b;">2294</div><div class="dc" style="left:1013px;top:91px;background:#a7cc7b;">2380</div><div class="dc" style="left:1059px;top:91px;background:#adc77a;">2677</div><div class="dc" style="left:1105px;top:91px;background:#c9a977;">4247</div><div class="dc" style="left:1151px;top:91px;background:#e88873;">6002</div><div class="hc" style="left:0px;top:105px;width:45px;text-align:right;padding-right:2px;">1400</div><div class="dc" style="left:47px;top:106px;background:#82f480;">257</div><div class="dc" style="left:93px;top:106px;background:#83f380;">340</div><div class="dc" style="left:139px;top:106px;background:#85f17f;">453</div><div class="dc" style="left:185px;top:106px;background:#87ef7f;">566</div><div class="dc" style="left:231px;top:106px;background:#89ec7f;">679</div><div class="dc" style="left:277px;top:106px;background:#8bea7f;">792</div><div class="dc" style="left:323px;top:106px;background:#8de87e;">905</div><div class="dc" style="left:369px;top:106px;background:#8fe77e;">986</div><div class="dc" style="left:415px;top:106px;background:#91e57e;">1099</div><div class="dc" style="left:461px;top:106px;background:#91e47e;">1143</div><div class="dc" style="left:507px;top:106px;background:#93e27e;">1244</div><div class="dc" style="left:553px;top:106px;background:#94e17d;">1297</div><div class="dc" style="left:599px;top:106px;background:#96de7d;">1421</div><div class="dc" style="left:645px;top:106px;background:#99dc7d;">1551</div><div class="dc" style="left:691px;top:106px;background:#9bda7d;">1674</div><div class="dc" style="left:737px;top:106px;background:#9dd77c;">1793</div><div class="dc" style="left:783px;top:106px;background:#9fd67c;">1894</div><div class="dc" style="left:829px;top:106px;background:#a0d47c;">1973</div><div class="dc" style="left:875px;top:106px;background:#a2d27c;">2068</div><div class="dc" style="left:921px;top:106px;background:#a3d17c;">2144</div><div class="dc" style="left:967px;top:106px;background:#a6ce7b;">2285</div><div class="dc" style="left:1013px;top:106px;background:#a7cd7b;">2368</div><div class="dc" style="left:1059px;top:106px;background:#acc77a;">2657</div><div class="dc" style="left:1105px;top:106px;background:#c9a977;">4244</div><div class="dc" style="left:1151px;top:106px;background:#e88873;">6002</div><div class="hc" style="left:0px;top:120px;width:45px;text-align:right;padding-right:2px;">1600</div><div class="dc" style="left:47px;top:121px;background:#81f580;">214</div><div class="dc" style="left:93px;top:121px;background:#82f480;">284</div><div class="dc" style="left:139px;top:121px;background:#84f280;">378</div><div class="dc" style="left:185px;top:121px;background:#85f07f;">472</div><div class="dc" style="left:231px;top:121px;background:#87ef7f;">567</div><div class="dc" style="left:277px;top:121px;background:#89ed7f;">661</div><div class="dc" style="left:323px;top:121px;background:#8aeb7f;">755</div><div class="dc" style="left:369px;top:121px;background:#8de97e;">882</div><div class="dc" style="left:415px;top:121px;background:#8fe77e;">988</div><div class="dc" style="left:461px;top:121px;background:#8fe67e;">1038</div><div class="dc" style="left:507px;top:121px;background:#91e47e;">1126</div><div class="dc" style="left:553px;top:121px;background:#93e27e;">1252</div><div class="dc" style="left:599px;top:121px;background:#96df7d;">1394</div><div class="dc" style="left:645px;top:121px;background:#98dc7d;">1536</div><div class="dc" style="left:691px;top:121px;background:#9cd97d;">1712</div><div class="dc" style="left:737px;top:121px;background:#9fd67c;">1883</div><div class="dc" style="left:783px;top:121px;background:#a1d37c;">2005</div><div class="dc" style="left:829px;top:121px;background:#a2d27c;">2093</div><div class="dc" style="left:875px;top:121px;background:#a4d07b;">2196</div><div class="dc" style="left:921px;top:121px;background:#a6ce7b;">2276</div><div class="dc" style="left:967px;top:121px;background:#a8cc7b;">2387</div><div class="dc" style="left:1013px;top:121px;background:#a9cb7b;">2470</div><div class="dc" style="left:1059px;top:121px;background:#adc67a;">2717</div><div class="dc" style="left:1105px;top:121px;background:#c9a977;">4237</div><div class="dc" style="left:1151px;top:121px;background:#e88873;">6002</div><div class="hc" style="left:0px;top:135px;width:45px;text-align:right;padding-right:2px;">1800</div><div class="dc" style="left:47px;top:136px;background:#80f680;">197</div><div class="dc" style="left:93px;top:136px;background:#82f480;">260</div><div class="dc" style="left:139px;top:136px;background:#83f380;">347</div><div class="dc" style="left:185px;top:136px;background:#85f17f;">434</div><div class="dc" style="left:231px;top:136px;background:#86ef7f;">520</div><div class="dc" style="left:277px;top:136px;background:#88ee7f;">623</div><div class="dc" style="left:323px;top:136px;background:#8aec7f;">726</div><div class="dc" style="left:369px;top:136px;background:#8cea7f;">833</div><div class="dc" style="left:415px;top:136px;background:#8ee77e;">951</div><div class="dc" style="left:461px;top:136px;background:#8fe67e;">998</div><div class="dc" style="left:507px;top:136px;background:#91e57e;">1097</div><div class="dc" style="left:553px;top:136px;background:#93e27e;">1217</div><div class="dc" style="left:599px;top:136px;background:#95e07d;">1356</div><div class="dc" style="left:645px;top:136px;background:#98dd7d;">1511</div><div class="dc" style="left:691px;top:136px;background:#9bda7d;">1667</div><div class="dc" style="left:737px;top:136px;background:#9dd77c;">1820</div><div class="dc" style="left:783px;top:136px;background:#a0d47c;">1966</div><div class="dc" style="left:829px;top:136px;background:#a2d27c;">2059</div><div class="dc" style="left:875px;top:136px;background:#a4d07b;">2201</div><div class="dc" style="left:921px;top:136px;background:#a5cf7b;">2253</div><div class="dc" style="left:967px;top:136px;background:#a8cc7b;">2410</div><div class="dc" style="left:1013px;top:136px;background:#aaca7b;">2527</div><div class="dc" style="left:1059px;top:136px;background:#afc57a;">2781</div><div class="dc" style="left:1105px;top:136px;background:#c8aa77;">4226</div><div class="dc" style="left:1151px;top:136px;background:#e88873;">6002</div><div class="hc" style="left:0px;top:150px;width:45px;text-align:right;padding-right:2px;">2000</div><div class="dc" style="left:47px;top:151px;background:#81f580;">210</div><div class="dc" style="left:93px;top:151px;background:#82f480;">278</div><div class="dc" style="left:139px;top:151px;background:#84f280;">370</div><div class="dc" style="left:185px;top:151px;background:#85f17f;">463</div><div class="dc" style="left:231px;top:151px;background:#87ef7f;">555</div><div class="dc" style="left:277px;top:151px;background:#88ed7f;">648</div><div class="dc" style="left:323px;top:151px;background:#8aeb7f;">759</div><div class="dc" style="left:369px;top:151px;background:#8de97e;">883</div><div class="dc" style="left:415px;top:151px;background:#8fe67e;">1022</div><div class="dc" style="left:461px;top:151px;background:#90e57e;">1054</div><div class="dc" style="left:507px;top:151px;background:#92e37e;">1157</div><div class="dc" style="left:553px;top:151px;background:#93e27e;">1248</div><div class="dc" style="left:599px;top:151px;background:#96df7d;">1384</div><div class="dc" style="left:645px;top:151px;background:#9adb7d;">1600</div><div class="dc" style="left:691px;top:151px;background:#9ed77c;">1825</div><div class="dc" style="left:737px;top:151px;background:#a1d37c;">2013</div><div class="dc" style="left:783px;top:151px;background:#a4d07b;">2203</div><div class="dc" style="left:829px;top:151px;background:#a6ce7b;">2276</div><div class="dc" style="left:875px;top:151px;background:#a7cc7b;">2378</div><div class="dc" style="left:921px;top:151px;background:#a9cb7b;">2473</div><div class="dc" style="left:967px;top:151px;background:#abc97b;">2573</div><div class="dc" style="left:1013px;top:151px;background:#adc77a;">2667</div><div class="dc" style="left:1059px;top:151px;background:#b0c37a;">2867</div><div class="dc" style="left:1105px;top:151px;background:#c9a977;">4247</div><div class="dc" style="left:1151px;top:151px;background:#e78973;">5946</div><div class="hc" style="left:0px;top:165px;width:45px;text-align:right;padding-right:2px;">2200</div><div class="dc" style="left:47px;top:166px;background:#81f580;">214</div><div class="dc" style="left:93px;top:166px;background:#82f480;">283</div><div class="dc" style="left:139px;top:166px;background:#84f280;">378</div><div class="dc" style="left:185px;top:166px;background:#85f07f;">472</div><div class="dc" style="left:231px;top:166px;background:#87ef7f;">566</div><div class="dc" style="left:277px;top:166px;background:#89ed7f;">661</div><div class="dc" style="left:323px;top:166px;background:#8aeb7f;">755</div><div class="dc" style="left:369px;top:166px;background:#8de87e;">896</div><div class="dc" style="left:415px;top:166px;background:#8fe67e;">1029</div><div class="dc" style="left:461px;top:166px;background:#91e47e;">1126</div><div class="dc" style="left:507px;top:166px;background:#93e27e;">1245</div><div class="dc" style="left:553px;top:166px;background:#95e07d;">1351</div><div class="dc" style="left:599px;top:166px;background:#9bda7d;">1672</div><div class="dc" style="left:645px;top:166px;background:#9ed67c;">1873</div><div class="dc" style="left:691px;top:166px;background:#a1d37c;">2023</div><div class="dc" style="left:737px;top:166px;background:#a3d17c;">2154</div><div class="dc" style="left:783px;top:166px;background:#a6ce7b;">2305</div><div class="dc" style="left:829px;top:166px;background:#a7cc7b;">2376</div><div class="dc" style="left:875px;top:166px;background:#a9cb7b;">2453</div><div class="dc" style="left:921px;top:166px;background:#aaca7b;">2504</div><div class="dc" style="left:967px;top:166px;background:#aac97b;">2546</div><div class="dc" style="left:1013px;top:166px;background:#acc77a;">2642</div><div class="dc" style="left:1059px;top:166px;background:#b1c27a;">2905</div><div class="dc" style="left:1105px;top:166px;background:#c8aa77;">4208</div><div class="dc" style="left:1151px;top:166px;background:#e68a73;">5900</div><div class="hc" style="left:0px;top:180px;width:45px;text-align:right;padding-right:2px;">2400</div><div class="dc" style="left:47px;top:181px;background:#81f580;">225</div><div class="dc" style="left:93px;top:181px;background:#82f480;">298</div><div class="dc" style="left:139px;top:181px;background:#84f27f;">398</div><div class="dc" style="left:185px;top:181px;background:#86f07f;">497</div><div class="dc" style="left:231px;top:181px;background:#88ee7f;">596</div><div class="dc" style="left:277px;top:181px;background:#89ec7f;">696</div><div class="dc" style="left:323px;top:181px;background:#8bea7f;">795</div><div class="dc" style="left:369px;top:181px;background:#8ee77e;">968</div><div class="dc" style="left:415px;top:181px;background:#90e57e;">1072</div><div class="dc" style="left:461px;top:181px;background:#92e37e;">1159</div><div class="dc" style="left:507px;top:181px;background:#94e17e;">1268</div><div class="dc" style="left:553px;top:181px;background:#97de7d;">1451</div><div class="dc" style="left:599px;top:181px;background:#9bd97d;">1695</div><div class="dc" style="left:645px;top:181px;background:#9fd67c;">1894</div><div class="dc" style="left:691px;top:181px;background:#a2d27c;">2060</div><div class="dc" style="left:737px;top:181px;background:#a4d07b;">2174</div><div class="dc" style="left:783px;top:181px;background:#a6ce7b;">2286</div><div class="dc" style="left:829px;top:181px;background:#a7cd7b;">2355</div><div class="dc" style="left:875px;top:181px;background:#a8cc7b;">2407</div><div class="dc" style="left:921px;top:181px;background:#a9cb7b;">2446</div><div class="dc" style="left:967px;top:181px;background:#aaca7b;">2510</div><div class="dc" style="left:1013px;top:181px;background:#acc87a;">2628</div><div class="dc" style="left:1059px;top:181px;background:#b0c37a;">2869</div><div class="dc" style="left:1105px;top:181px;background:#c4af77;">3961</div><div class="dc" style="left:1151px;top:181px;background:#d29f76;">4772</div><div class="hc" style="left:0px;top:195px;width:45px;text-align:right;padding-right:2px;">2600</div><div class="dc" style="left:47px;top:196px;background:#81f580;">214</div><div class="dc" style="left:93px;top:196px;background:#82f480;">283</div><div class="dc" style="left:139px;top:196px;background:#84f280;">377</div><div class="dc" style="left:185px;top:196px;background:#85f07f;">472</div><div class="dc" style="left:231px;top:196px;background:#87ef7f;">566</div><div class="dc" style="left:277px;top:196px;background:#89ed7f;">660</div><div class="dc" style="left:323px;top:196px;background:#8ce97e;">855</div><div class="dc" style="left:369px;top:196px;background:#8fe67e;">1034</div><div class="dc" style="left:415px;top:196px;background:#92e37e;">1199</div><div class="dc" style="left:461px;top:196px;background:#93e17e;">1261</div><div class="dc" style="left:507px;top:196px;background:#95e07d;">1364</div><div class="dc" style="left:553px;top:196px;background:#97de7d;">1457</div><div class="dc" style="left:599px;top:196px;background:#9ada7d;">1642</div><div class="dc" style="left:645px;top:196px;background:#9ed67c;">1844</div><div class="dc" style="left:691px;top:196px;background:#a1d37c;">2018</div><div class="dc" style="left:737px;top:196px;background:#a3d17c;">2157</div><div class="dc" style="left:783px;top:196px;background:#a6ce7b;">2279</div><div class="dc" style="left:829px;top:196px;background:#a7cd7b;">2353</div><div class="dc" style="left:875px;top:196px;background:#a8cc7b;">2424</div><div class="dc" style="left:921px;top:196px;background:#a9ca7b;">2493</div><div class="dc" style="left:967px;top:196px;background:#aaca7b;">2526</div><div class="dc" style="left:1013px;top:196px;background:#abc87b;">2595</div><div class="dc" style="left:1059px;top:196px;background:#aec57a;">2760</div><div class="dc" style="left:1105px;top:196px;background:#c1b278;">3789</div><div class="dc" style="left:1151px;top:196px;background:#cca576;">4445</div><div class="hc" style="left:0px;top:210px;width:45px;text-align:right;padding-right:2px;">2800</div><div class="dc" style="left:47px;top:211px;background:#81f580;">213</div><div class="dc" style="left:93px;top:211px;background:#82f480;">281</div><div class="dc" style="left:139px;top:211px;background:#84f280;">375</div><div class="dc" style="left:185px;top:211px;background:#85f07f;">469</div><div class="dc" style="left:231px;top:211px;background:#87ef7f;">562</div><div class="dc" style="left:277px;top:211px;background:#89ed7f;">656</div><div class="dc" style="left:323px;top:211px;background:#8cea7f;">831</div><div class="dc" style="left:369px;top:211px;background:#8fe77e;">987</div><div class="dc" style="left:415px;top:211px;background:#93e27e;">1242</div><div class="dc" style="left:461px;top:211px;background:#94e17d;">1312</div><div class="dc" style="left:507px;top:211px;background:#96de7d;">1422</div><div class="dc" style="left:553px;top:211px;background:#98dc7d;">1533</div><div class="dc" style="left:599px;top:211px;background:#9adb7d;">1619</div><div class="dc" style="left:645px;top:211px;background:#9cd97c;">1730</div><div class="dc" style="left:691px;top:211px;background:#9ed77c;">1826</div><div class="dc" style="left:737px;top:211px;background:#a0d57c;">1936</div><div class="dc" style="left:783px;top:211px;background:#a2d37c;">2048</div><div class="dc" style="left:829px;top:211px;background:#a3d17c;">2123</div><div class="dc" style="left:875px;top:211px;background:#a5cf7b;">2216</div><div class="dc" style="left:921px;top:211px;background:#a5cf7b;">2253</div><div class="dc" style="left:967px;top:211px;background:#a7cd7b;">2349</div><div class="dc" style="left:1013px;top:211px;background:#a8cb7b;">2434</div><div class="dc" style="left:1059px;top:211px;background:#adc67a;">2712</div><div class="dc" style="left:1105px;top:211px;background:#c1b178;">3821</div><div class="dc" style="left:1151px;top:211px;background:#cda476;">4499</div><div class="hc" style="left:0px;top:225px;width:45px;text-align:right;padding-right:2px;">3000</div><div class="dc" style="left:47px;top:226px;background:#81f580;">211</div><div class="dc" style="left:93px;top:226px;background:#82f480;">280</div><div class="dc" style="left:139px;top:226px;background:#84f280;">375</div><div class="dc" style="left:185px;top:226px;background:#85f17f;">463</div><div class="dc" style="left:231px;top:226px;background:#86ef7f;">532</div><div class="dc" style="left:277px;top:226px;background:#88ee7f;">618</div><div class="dc" style="left:323px;top:226px;background:#8bea7f;">791</div><div class="dc" style="left:369px;top:226px;background:#8ee77e;">948</div><div class="dc" style="left:415px;top:226px;background:#92e37e;">1202</div><div class="dc" style="left:461px;top:226px;background:#93e17e;">1262</div><div class="dc" style="left:507px;top:226px;background:#95e07d;">1365</div><div class="dc" style="left:553px;top:226px;background:#97de7d;">1470</div><div class="dc" style="left:599px;top:226px;background:#99dc7d;">1547</div><div class="dc" style="left:645px;top:226px;background:#9ada7d;">1653</div><div class="dc" style="left:691px;top:226px;background:#9cd87c;">1743</div><div class="dc" style="left:737px;top:226px;background:#9ed67c;">1851</div><div class="dc" style="left:783px;top:226px;background:#a0d47c;">1960</div><div class="dc" style="left:829px;top:226px;background:#a1d37c;">2036</div><div class="dc" style="left:875px;top:226px;background:#a3d17c;">2127</div><div class="dc" style="left:921px;top:226px;background:#a4d07c;">2163</div><div class="dc" style="left:967px;top:226px;background:#a5cf7b;">2233</div><div class="dc" style="left:1013px;top:226px;background:#a6cd7b;">2324</div><div class="dc" style="left:1059px;top:226px;background:#acc87a;">2633</div><div class="dc" style="left:1105px;top:226px;background:#c1b278;">3789</div><div class="dc" style="left:1151px;top:226px;background:#cca576;">4445</div><div class="hc" style="left:0px;top:240px;width:45px;text-align:right;padding-right:2px;">3200</div><div class="dc" style="left:47px;top:241px;background:#81f580;">209</div><div class="dc" style="left:93px;top:241px;background:#82f480;">279</div><div class="dc" style="left:139px;top:241px;background:#84f280;">375</div><div class="dc" style="left:185px;top:241px;background:#85f17f;">457</div><div class="dc" style="left:231px;top:241px;background:#86f07f;">499</div><div class="dc" style="left:277px;top:241px;background:#87ee7f;">577</div><div class="dc" style="left:323px;top:241px;background:#8aeb7f;">748</div><div class="dc" style="left:369px;top:241px;background:#8de87e;">905</div><div class="dc" style="left:415px;top:241px;background:#92e37e;">1160</div><div class="dc" style="left:461px;top:241px;background:#93e27e;">1209</div><div class="dc" style="left:507px;top:241px;background:#94e17d;">1304</div><div class="dc" style="left:553px;top:241px;background:#96df7d;">1402</div><div class="dc" style="left:599px;top:241px;background:#97de7d;">1468</div><div class="dc" style="left:645px;top:241px;background:#99dc7d;">1569</div><div class="dc" style="left:691px;top:241px;background:#9ada7d;">1653</div><div class="dc" style="left:737px;top:241px;background:#9cd87c;">1759</div><div class="dc" style="left:783px;top:241px;background:#9ed67c;">1866</div><div class="dc" style="left:829px;top:241px;background:#a0d57c;">1942</div><div class="dc" style="left:875px;top:241px;background:#a1d37c;">2032</div><div class="dc" style="left:921px;top:241px;background:#a2d27c;">2066</div><div class="dc" style="left:967px;top:241px;background:#a4d07b;">2197</div><div class="dc" style="left:1013px;top:241px;background:#a6cd7b;">2324</div><div class="dc" style="left:1059px;top:241px;background:#aec67a;">2734</div><div class="dc" style="left:1105px;top:241px;background:#c2b178;">3838</div><div class="dc" style="left:1151px;top:241px;background:#cfa376;">4576</div><div class="hc" style="left:0px;top:255px;width:45px;text-align:right;padding-right:2px;">3400</div><div class="dc" style="left:47px;top:256px;background:#81f580;">207</div><div class="dc" style="left:93px;top:256px;background:#82f480;">280</div><div class="dc" style="left:139px;top:256px;background:#84f280;">375</div><div class="dc" style="left:185px;top:256px;background:#85f17f;">463</div><div class="dc" style="left:231px;top:256px;background:#86ef7f;">532</div><div class="dc" style="left:277px;top:256px;background:#88ee7f;">618</div><div class="dc" style="left:323px;top:256px;background:#8bea7f;">792</div><div class="dc" style="left:369px;top:256px;background:#8ee77e;">948</div><div class="dc" style="left:415px;top:256px;background:#92e37e;">1203</div><div class="dc" style="left:461px;top:256px;background:#93e17e;">1263</div><div class="dc" style="left:507px;top:256px;background:#95e07d;">1366</div><div class="dc" style="left:553px;top:256px;background:#97de7d;">1471</div><div class="dc" style="left:599px;top:256px;background:#99dc7d;">1547</div><div class="dc" style="left:645px;top:256px;background:#9ada7d;">1653</div><div class="dc" style="left:691px;top:256px;background:#9cd87c;">1744</div><div class="dc" style="left:737px;top:256px;background:#9ed67c;">1852</div><div class="dc" style="left:783px;top:256px;background:#a0d47c;">1961</div><div class="dc" style="left:829px;top:256px;background:#a1d37c;">2037</div><div class="dc" style="left:875px;top:256px;background:#a3d17c;">2128</div><div class="dc" style="left:921px;top:256px;background:#a4d07c;">2164</div><div class="dc" style="left:967px;top:256px;background:#a7cd7b;">2334</div><div class="dc" style="left:1013px;top:256px;background:#a9ca7b;">2487</div><div class="dc" style="left:1059px;top:256px;background:#b2c17a;">2966</div><div class="dc" style="left:1105px;top:256px;background:#c4af77;">3961</div><div class="dc" style="left:1151px;top:256px;background:#d1a076;">4714</div><div class="hc" style="left:0px;top:270px;width:45px;text-align:right;padding-right:2px;">3600</div><div class="dc" style="left:47px;top:271px;background:#81f580;">205</div><div class="dc" style="left:93px;top:271px;background:#82f480;">282</div><div class="dc" style="left:139px;top:271px;background:#84f280;">375</div><div class="dc" style="left:185px;top:271px;background:#85f07f;">475</div><div class="dc" style="left:231px;top:271px;background:#88ee7f;">595</div><div class="dc" style="left:277px;top:271px;background:#89ec7f;">698</div><div class="dc" style="left:323px;top:271px;background:#8de97e;">875</div><div class="dc" style="left:369px;top:271px;background:#8fe67e;">1030</div><div class="dc" style="left:415px;top:271px;background:#94e17d;">1286</div><div class="dc" style="left:461px;top:271px;background:#95df7d;">1367</div><div class="dc" style="left:507px;top:271px;background:#97dd7d;">1484</div><div class="dc" style="left:553px;top:271px;background:#9adb7d;">1602</div><div class="dc" style="left:599px;top:271px;background:#9bd97d;">1699</div><div class="dc" style="left:645px;top:271px;background:#9dd77c;">1815</div><div class="dc" style="left:691px;top:271px;background:#9fd57c;">1917</div><div class="dc" style="left:737px;top:271px;background:#a1d37c;">2030</div><div class="dc" style="left:783px;top:271px;background:#a3d17c;">2144</div><div class="dc" style="left:829px;top:271px;background:#a5cf7b;">2219</div><div class="dc" style="left:875px;top:271px;background:#a6ce7b;">2313</div><div class="dc" style="left:921px;top:271px;background:#a7cd7b;">2352</div><div class="dc" style="left:967px;top:271px;background:#abc97b;">2554</div><div class="dc" style="left:1013px;top:271px;background:#afc57a;">2796</div><div class="dc" style="left:1059px;top:271px;background:#b7bc79;">3227</div><div class="dc" style="left:1105px;top:271px;background:#c7ab77;">4138</div><div class="dc" style="left:1151px;top:271px;background:#d89975;">5088</div><div class="hc" style="left:0px;top:285px;width:45px;text-align:right;padding-right:2px;">3800</div><div class="dc" style="left:47px;top:286px;background:#81f580;">203</div><div class="dc" style="left:93px;top:286px;background:#82f480;">284</div><div class="dc" style="left:139px;top:286px;background:#84f280;">375</div><div class="dc" style="left:185px;top:286px;background:#86f07f;">486</div><div class="dc" style="left:231px;top:286px;background:#89ed7f;">653</div><div class="dc" style="left:277px;top:286px;background:#8beb7f;">770</div><div class="dc" style="left:323px;top:286px;background:#8ee77e;">951</div><div class="dc" style="left:369px;top:286px;background:#91e47e;">1106</div><div class="dc" style="left:415px;top:286px;background:#95e07d;">1362</div><div class="dc" style="left:461px;top:286px;background:#97de7d;">1462</div><div class="dc" style="left:507px;top:286px;background:#99db7d;">1593</div><div class="dc" style="left:553px;top:286px;background:#9cd97d;">1723</div><div class="dc" style="left:599px;top:286px;background:#9ed77c;">1837</div><div class="dc" style="left:645px;top:286px;background:#a0d47c;">1963</div><div class="dc" style="left:691px;top:286px;background:#a2d27c;">2076</div><div class="dc" style="left:737px;top:286px;background:#a4d07b;">2192</div><div class="dc" style="left:783px;top:286px;background:#a6ce7b;">2312</div><div class="dc" style="left:829px;top:286px;background:#a8cc7b;">2386</div><div class="dc" style="left:875px;top:286px;background:#a9ca7b;">2483</div><div class="dc" style="left:921px;top:286px;background:#aaca7b;">2524</div><div class="dc" style="left:967px;top:286px;background:#adc67a;">2700</div><div class="dc" style="left:1013px;top:286px;background:#b2c17a;">2978</div><div class="dc" style="left:1059px;top:286px;background:#bbb879;">3486</div><div class="dc" style="left:1105px;top:286px;background:#cba777;">4363</div><div class="dc" style="left:1151px;top:286px;background:#e09074;">5565</div><div class="hc" style="left:0px;top:300px;width:45px;text-align:right;padding-right:2px;">4000</div><div class="dc" style="left:47px;top:301px;background:#81f580;">201</div><div class="dc" style="left:93px;top:301px;background:#82f480;">286</div><div class="dc" style="left:139px;top:301px;background:#84f280;">375</div><div class="dc" style="left:185px;top:301px;background:#86f07f;">495</div><div class="dc" style="left:231px;top:301px;background:#89ec7f;">700</div><div class="dc" style="left:277px;top:301px;background:#8cea7f;">829</div><div class="dc" style="left:323px;top:301px;background:#8fe67e;">1012</div><div class="dc" style="left:369px;top:301px;background:#92e37e;">1167</div><div class="dc" style="left:415px;top:301px;background:#96de7d;">1423</div><div class="dc" style="left:461px;top:301px;background:#98dc7d;">1539</div><div class="dc" style="left:507px;top:301px;background:#9bda7d;">1681</div><div class="dc" style="left:553px;top:301px;background:#9dd77c;">1820</div><div class="dc" style="left:599px;top:301px;background:#a0d57c;">1949</div><div class="dc" style="left:645px;top:301px;background:#a2d27c;">2083</div><div class="dc" style="left:691px;top:301px;background:#a4d07b;">2205</div><div class="dc" style="left:737px;top:301px;background:#a6cd7b;">2324</div><div class="dc" style="left:783px;top:301px;background:#a9cb7b;">2447</div><div class="dc" style="left:829px;top:301px;background:#aaca7b;">2521</div><div class="dc" style="left:875px;top:301px;background:#acc87a;">2619</div><div class="dc" style="left:921px;top:301px;background:#adc77a;">2663</div><div class="dc" style="left:967px;top:301px;background:#b0c47a;">2846</div><div class="dc" style="left:1013px;top:301px;background:#b4c07a;">3059</div><div class="dc" style="left:1059px;top:301px;background:#bcb678;">3556</div><div class="dc" style="left:1105px;top:301px;background:#cea476;">4521</div><div class="dc" style="left:1151px;top:301px;background:#e38e74;">5697</div><div class="hc" style="left:0px;top:315px;width:45px;text-align:right;padding-right:2px;">4250</div><div class="dc" style="left:47px;top:316px;background:#80f680;">199</div><div class="dc" style="left:93px;top:316px;background:#82f480;">286</div><div class="dc" style="left:139px;top:316px;background:#84f280;">375</div><div class="dc" style="left:185px;top:316px;background:#86f07f;">495</div><div class="dc" style="left:231px;top:316px;background:#89ec7f;">704</div><div class="dc" style="left:277px;top:316px;background:#8cea7f;">834</div><div class="dc" style="left:323px;top:316px;background:#8fe67e;">1017</div><div class="dc" style="left:369px;top:316px;background:#92e37e;">1171</div><div class="dc" style="left:415px;top:316px;background:#96de7d;">1428</div><div class="dc" style="left:461px;top:316px;background:#99dc7d;">1545</div><div class="dc" style="left:507px;top:316px;background:#9bd97d;">1688</div><div class="dc" style="left:553px;top:316px;background:#9ed77c;">1828</div><div class="dc" style="left:599px;top:316px;background:#a0d47c;">1958</div><div class="dc" style="left:645px;top:316px;background:#a2d27c;">2092</div><div class="dc" style="left:691px;top:316px;background:#a4cf7b;">2215</div><div class="dc" style="left:737px;top:316px;background:#a7cd7b;">2334</div><div class="dc" style="left:783px;top:316px;background:#a9cb7b;">2457</div><div class="dc" style="left:829px;top:316px;background:#aaca7b;">2532</div><div class="dc" style="left:875px;top:316px;background:#acc87a;">2630</div><div class="dc" style="left:921px;top:316px;background:#adc77a;">2674</div><div class="dc" style="left:967px;top:316px;background:#b0c37a;">2863</div><div class="dc" style="left:1013px;top:316px;background:#b3c07a;">3017</div><div class="dc" style="left:1059px;top:316px;background:#b9ba79;">3360</div><div class="dc" style="left:1105px;top:316px;background:#c9a977;">4244</div><div class="dc" style="left:1151px;top:316px;background:#dd9474;">5378</div><div class="hc" style="left:0px;top:330px;width:45px;text-align:right;padding-right:2px;">4500</div><div class="dc" style="left:47px;top:331px;background:#80f680;">197</div><div class="dc" style="left:93px;top:331px;background:#82f480;">286</div><div class="dc" style="left:139px;top:331px;background:#84f280;">375</div><div class="dc" style="left:185px;top:331px;background:#86f07f;">496</div><div class="dc" style="left:231px;top:331px;background:#8aec7f;">708</div><div class="dc" style="left:277px;top:331px;background:#8ce97f;">839</div><div class="dc" style="left:323px;top:331px;background:#8fe67e;">1023</div><div class="dc" style="left:369px;top:331px;background:#92e37e;">1177</div><div class="dc" style="left:415px;top:331px;background:#97de7d;">1433</div><div class="dc" style="left:461px;top:331px;background:#99dc7d;">1552</div><div class="dc" style="left:507px;top:331px;background:#9bd97d;">1695</div><div class="dc" style="left:553px;top:331px;background:#9ed77c;">1836</div><div class="dc" style="left:599px;top:331px;background:#a0d47c;">1967</div><div class="dc" style="left:645px;top:331px;background:#a2d27c;">2102</div><div class="dc" style="left:691px;top:331px;background:#a5cf7b;">2226</div><div class="dc" style="left:737px;top:331px;background:#a7cd7b;">2345</div><div class="dc" style="left:783px;top:331px;background:#a9cb7b;">2469</div><div class="dc" style="left:829px;top:331px;background:#aac97b;">2543</div><div class="dc" style="left:875px;top:331px;background:#acc77a;">2642</div><div class="dc" style="left:921px;top:331px;background:#adc77a;">2686</div><div class="dc" style="left:967px;top:331px;background:#b0c37a;">2864</div><div class="dc" style="left:1013px;top:331px;background:#b2c17a;">2976</div><div class="dc" style="left:1059px;top:331px;background:#b6bd79;">3170</div><div class="dc" style="left:1105px;top:331px;background:#c4af77;">3951</div><div class="dc" style="left:1151px;top:331px;background:#da9775;">5231</div><div class="hc" style="left:0px;top:345px;width:45px;text-align:right;padding-right:2px;">4750</div><div class="dc" style="left:47px;top:346px;background:#80f680;">195</div><div class="dc" style="left:93px;top:346px;background:#82f480;">285</div><div class="dc" style="left:139px;top:346px;background:#84f280;">375</div><div class="dc" style="left:185px;top:346px;background:#86f07f;">490</div><div class="dc" style="left:231px;top:346px;background:#89ed7f;">675</div><div class="dc" style="left:277px;top:346px;background:#8bea7f;">798</div><div class="dc" style="left:323px;top:346px;background:#8ee77e;">980</div><div class="dc" style="left:369px;top:346px;background:#91e47e;">1135</div><div class="dc" style="left:415px;top:346px;background:#96df7d;">1391</div><div class="dc" style="left:461px;top:346px;background:#98dd7d;">1498</div><div class="dc" style="left:507px;top:346px;background:#9ada7d;">1635</div><div class="dc" style="left:553px;top:346px;background:#9dd87c;">1769</div><div class="dc" style="left:599px;top:346px;background:#9fd67c;">1890</div><div class="dc" style="left:645px;top:346px;background:#a1d37c;">2020</div><div class="dc" style="left:691px;top:346px;background:#a3d17c;">2137</div><div class="dc" style="left:737px;top:346px;background:#a5cf7b;">2255</div><div class="dc" style="left:783px;top:346px;background:#a7cc7b;">2376</div><div class="dc" style="left:829px;top:346px;background:#a9cb7b;">2450</div><div class="dc" style="left:875px;top:346px;background:#aac97b;">2547</div><div class="dc" style="left:921px;top:346px;background:#abc87b;">2590</div><div class="dc" style="left:967px;top:346px;background:#adc67a;">2713</div><div class="dc" style="left:1013px;top:346px;background:#b0c37a;">2856</div><div class="dc" style="left:1059px;top:346px;background:#b4bf79;">3100</div><div class="dc" style="left:1105px;top:346px;background:#c3af78;">3928</div><div class="dc" style="left:1151px;top:346px;background:#da9775;">5230</div><div class="hc" style="left:0px;top:360px;width:45px;text-align:right;padding-right:2px;">5000</div><div class="dc" style="left:47px;top:361px;background:#80f680;">193</div><div class="dc" style="left:93px;top:361px;background:#82f480;">285</div><div class="dc" style="left:139px;top:361px;background:#84f280;">375</div><div class="dc" style="left:185px;top:361px;background:#86f07f;">489</div><div class="dc" style="left:231px;top:361px;background:#89ed7f;">669</div><div class="dc" style="left:277px;top:361px;background:#8bea7f;">790</div><div class="dc" style="left:323px;top:361px;background:#8ee77e;">971</div><div class="dc" style="left:369px;top:361px;background:#91e47e;">1126</div><div class="dc" style="left:415px;top:361px;background:#96df7d;">1382</div><div class="dc" style="left:461px;top:361px;background:#97dd7d;">1487</div><div class="dc" style="left:507px;top:361px;background:#9adb7d;">1622</div><div class="dc" style="left:553px;top:361px;background:#9cd87c;">1755</div><div class="dc" style="left:599px;top:361px;background:#9ed67c;">1874</div><div class="dc" style="left:645px;top:361px;background:#a1d37c;">2003</div><div class="dc" style="left:691px;top:361px;background:#a3d17c;">2119</div><div class="dc" style="left:737px;top:361px;background:#a5cf7b;">2236</div><div class="dc" style="left:783px;top:361px;background:#a7cd7b;">2356</div><div class="dc" style="left:829px;top:361px;background:#a8cb7b;">2431</div><div class="dc" style="left:875px;top:361px;background:#aaca7b;">2528</div><div class="dc" style="left:921px;top:361px;background:#abc97b;">2570</div><div class="dc" style="left:967px;top:361px;background:#aec57a;">2758</div><div class="dc" style="left:1013px;top:361px;background:#b0c37a;">2864</div><div class="dc" style="left:1059px;top:361px;background:#b4bf79;">3070</div><div class="dc" style="left:1105px;top:361px;background:#c3af78;">3922</div><div class="dc" style="left:1151px;top:361px;background:#da9775;">5213</div><div class="hc" style="left:0px;top:375px;width:45px;text-align:right;padding-right:2px;">5500</div><div class="dc" style="left:47px;top:376px;background:#80f680;">191</div><div class="dc" style="left:93px;top:376px;background:#82f480;">287</div><div class="dc" style="left:139px;top:376px;background:#84f280;">375</div><div class="dc" style="left:185px;top:376px;background:#86f07f;">498</div><div class="dc" style="left:231px;top:376px;background:#8aec7f;">716</div><div class="dc" style="left:277px;top:376px;background:#8ce97e;">849</div><div class="dc" style="left:323px;top:376px;background:#8fe67e;">1034</div><div class="dc" style="left:369px;top:376px;background:#92e37e;">1188</div><div class="dc" style="left:415px;top:376px;background:#97de7d;">1444</div><div class="dc" style="left:461px;top:376px;background:#99dc7d;">1565</div><div class="dc" style="left:507px;top:376px;background:#9bd97d;">1711</div><div class="dc" style="left:553px;top:376px;background:#9ed67c;">1854</div><div class="dc" style="left:599px;top:376px;background:#a0d47c;">1988</div><div class="dc" style="left:645px;top:376px;background:#a3d17c;">2124</div><div class="dc" style="left:691px;top:376px;background:#a5cf7b;">2249</div><div class="dc" style="left:737px;top:376px;background:#a7cd7b;">2369</div><div class="dc" style="left:783px;top:376px;background:#a9ca7b;">2493</div><div class="dc" style="left:829px;top:376px;background:#abc97b;">2568</div><div class="dc" style="left:875px;top:376px;background:#adc77a;">2666</div><div class="dc" style="left:921px;top:376px;background:#adc67a;">2711</div><div class="dc" style="left:967px;top:376px;background:#b0c37a;">2885</div><div class="dc" style="left:1013px;top:376px;background:#b3c07a;">3014</div><div class="dc" style="left:1059px;top:376px;background:#b7bc79;">3227</div><div class="dc" style="left:1105px;top:376px;background:#c5ad77;">4059</div><div class="dc" style="left:1151px;top:376px;background:#dc9574;">5339</div><div class="hc" style="left:0px;top:390px;width:45px;text-align:right;padding-right:2px;">6000</div><div class="dc" style="left:47px;top:391px;background:#80f680;">189</div><div class="dc" style="left:93px;top:391px;background:#82f480;">286</div><div class="dc" style="left:139px;top:391px;background:#84f280;">375</div><div class="dc" style="left:185px;top:391px;background:#86f07f;">492</div><div class="dc" style="left:231px;top:391px;background:#89ec7f;">689</div><div class="dc" style="left:277px;top:391px;background:#8bea7f;">815</div><div class="dc" style="left:323px;top:391px;background:#8fe67e;">997</div><div class="dc" style="left:369px;top:391px;background:#91e47e;">1152</div><div class="dc" style="left:415px;top:391px;background:#96df7d;">1408</div><div class="dc" style="left:461px;top:391px;background:#98dd7d;">1520</div><div class="dc" style="left:507px;top:391px;background:#9bda7d;">1659</div><div class="dc" style="left:553px;top:391px;background:#9dd77c;">1797</div><div class="dc" style="left:599px;top:391px;background:#9fd57c;">1922</div><div class="dc" style="left:645px;top:391px;background:#a2d37c;">2053</div><div class="dc" style="left:691px;top:391px;background:#a4d07b;">2173</div><div class="dc" style="left:737px;top:391px;background:#a6ce7b;">2291</div><div class="dc" style="left:783px;top:391px;background:#a8cc7b;">2414</div><div class="dc" style="left:829px;top:391px;background:#a9ca7b;">2488</div><div class="dc" style="left:875px;top:391px;background:#abc87b;">2586</div><div class="dc" style="left:921px;top:391px;background:#acc87a;">2629</div><div class="dc" style="left:967px;top:391px;background:#afc47a;">2806</div><div class="dc" style="left:1013px;top:391px;background:#b1c27a;">2920</div><div class="dc" style="left:1059px;top:391px;background:#b9ba79;">3342</div><div class="dc" style="left:1105px;top:391px;background:#cfa376;">4571</div><div class="dc" style="left:1151px;top:391px;background:#ee8272;">6350</div><div class="hc" style="left:0px;top:405px;width:45px;text-align:right;padding-right:2px;">6500</div><div class="dc" style="left:47px;top:406px;background:#80f680;">187</div><div class="dc" style="left:93px;top:406px;background:#82f480;">285</div><div class="dc" style="left:139px;top:406px;background:#84f280;">375</div><div class="dc" style="left:185px;top:406px;background:#86f07f;">488</div><div class="dc" style="left:231px;top:406px;background:#89ed7f;">664</div><div class="dc" style="left:277px;top:406px;background:#8bea7f;">784</div><div class="dc" style="left:323px;top:406px;background:#8ee77e;">965</div><div class="dc" style="left:369px;top:406px;background:#91e47e;">1120</div><div class="dc" style="left:415px;top:406px;background:#96df7d;">1376</div><div class="dc" style="left:461px;top:406px;background:#97dd7d;">1480</div><div class="dc" style="left:507px;top:406px;background:#9adb7d;">1613</div><div class="dc" style="left:553px;top:406px;background:#9cd87c;">1745</div><div class="dc" style="left:599px;top:406px;background:#9ed67c;">1863</div><div class="dc" style="left:645px;top:406px;background:#a0d47c;">1991</div><div class="dc" style="left:691px;top:406px;background:#a3d27c;">2106</div><div class="dc" style="left:737px;top:406px;background:#a5cf7b;">2222</div><div class="dc" style="left:783px;top:406px;background:#a7cd7b;">2343</div><div class="dc" style="left:829px;top:406px;background:#a8cc7b;">2417</div><div class="dc" style="left:875px;top:406px;background:#aaca7b;">2514</div><div class="dc" style="left:921px;top:406px;background:#abc97b;">2556</div><div class="dc" style="left:967px;top:406px;background:#aec67a;">2727</div><div class="dc" style="left:1013px;top:406px;background:#b0c37a;">2856</div><div class="dc" style="left:1059px;top:406px;background:#bab979;">3393</div><div class="dc" style="left:1105px;top:406px;background:#d39e76;">4818</div><div class="dc" style="left:1151px;top:406px;background:#f57a71;">6726</div><div class="hc" style="left:0px;top:420px;width:45px;text-align:right;padding-right:2px;">7000</div><div class="dc" style="left:47px;top:421px;background:#80f680;">185</div><div class="dc" style="left:93px;top:421px;background:#82f480;">284</div><div class="dc" style="left:139px;top:421px;background:#84f280;">375</div><div class="dc" style="left:185px;top:421px;background:#86f07f;">484</div><div class="dc" style="left:231px;top:421px;background:#88ed7f;">641</div><div class="dc" style="left:277px;top:421px;background:#8aeb7f;">755</div><div class="dc" style="left:323px;top:421px;background:#8ee87e;">935</div><div class="dc" style="left:369px;top:421px;background:#90e57e;">1090</div><div class="dc" style="left:415px;top:421px;background:#95e07d;">1345</div><div class="dc" style="left:461px;top:421px;background:#97de7d;">1441</div><div class="dc" style="left:507px;top:421px;background:#99dc7d;">1570</div><div class="dc" style="left:553px;top:421px;background:#9bd97d;">1697</div><div class="dc" style="left:599px;top:421px;background:#9dd77c;">1807</div><div class="dc" style="left:645px;top:421px;background:#9fd57c;">1931</div><div class="dc" style="left:691px;top:421px;background:#a1d37c;">2042</div><div class="dc" style="left:737px;top:421px;background:#a3d17c;">2157</div><div class="dc" style="left:783px;top:421px;background:#a6ce7b;">2276</div><div class="dc" style="left:829px;top:421px;background:#a7cd7b;">2350</div><div class="dc" style="left:875px;top:421px;background:#a9cb7b;">2446</div><div class="dc" style="left:921px;top:421px;background:#a9ca7b;">2487</div><div class="dc" style="left:967px;top:421px;background:#acc87a;">2634</div><div class="dc" style="left:1013px;top:421px;background:#afc57a;">2780</div><div class="dc" style="left:1059px;top:421px;background:#bbb879;">3455</div><div class="dc" style="left:1105px;top:421px;background:#d79a75;">5035</div><div class="dc" style="left:1151px;top:421px;background:#fc7370;">7112</div><div class="hc" style="left:0px;top:435px;width:45px;text-align:right;padding-right:2px;">7500</div><div class="dc" style="left:47px;top:436px;background:#80f680;">183</div><div class="dc" style="left:93px;top:436px;background:#82f480;">283</div><div class="dc" style="left:139px;top:436px;background:#84f280;">375</div><div class="dc" style="left:185px;top:436px;background:#85f07f;">478</div><div class="dc" style="left:231px;top:436px;background:#88ee7f;">608</div><div class="dc" style="left:277px;top:436px;background:#8aec7f;">714</div><div class="dc" style="left:323px;top:436px;background:#8de87e;">892</div><div class="dc" style="left:369px;top:436px;background:#90e67e;">1047</div><div class="dc" style="left:415px;top:436px;background:#94e17d;">1302</div><div class="dc" style="left:461px;top:436px;background:#96df7d;">1388</div><div class="dc" style="left:507px;top:436px;background:#98dd7d;">1508</div><div class="dc" style="left:553px;top:436px;background:#9adb7d;">1629</div><div class="dc" style="left:599px;top:436px;background:#9cd97c;">1729</div><div class="dc" style="left:645px;top:436px;background:#9ed67c;">1848</div><div class="dc" style="left:691px;top:436px;background:#a0d47c;">1953</div><div class="dc" style="left:737px;top:436px;background:#a2d27c;">2065</div><div class="dc" style="left:783px;top:436px;background:#a4d07b;">2181</div><div class="dc" style="left:829px;top:436px;background:#a5cf7b;">2256</div><div class="dc" style="left:875px;top:436px;background:#a7cd7b;">2351</div><div class="dc" style="left:921px;top:436px;background:#a8cc7b;">2390</div><div class="dc" style="left:967px;top:436px;background:#abc97b;">2570</div><div class="dc" style="left:1013px;top:436px;background:#afc57a;">2778</div><div class="dc" style="left:1059px;top:436px;background:#bbb879;">3486</div><div class="dc" style="left:1105px;top:436px;background:#d99875;">5171</div><div class="dc" style="left:1151px;top:436px;background:#ff7070;">7273</div><div class="hc" style="left:0px;top:450px;width:45px;text-align:right;padding-right:2px;">8000</div><div class="dc" style="left:47px;top:451px;background:#80f680;">181</div><div class="dc" style="left:93px;top:451px;background:#82f480;">284</div><div class="dc" style="left:139px;top:451px;background:#84f280;">375</div><div class="dc" style="left:185px;top:451px;background:#86f07f;">483</div><div class="dc" style="left:231px;top:451px;background:#88ed7f;">635</div><div class="dc" style="left:277px;top:451px;background:#8aeb7f;">748</div><div class="dc" style="left:323px;top:451px;background:#8de87e;">927</div><div class="dc" style="left:369px;top:451px;background:#90e57e;">1083</div><div class="dc" style="left:415px;top:451px;background:#95e07d;">1338</div><div class="dc" style="left:461px;top:451px;background:#97de7d;">1433</div><div class="dc" style="left:507px;top:451px;background:#99dc7d;">1560</div><div class="dc" style="left:553px;top:451px;background:#9bd97d;">1686</div><div class="dc" style="left:599px;top:451px;background:#9dd77c;">1794</div><div class="dc" style="left:645px;top:451px;background:#9fd57c;">1917</div><div class="dc" style="left:691px;top:451px;background:#a1d37c;">2027</div><div class="dc" style="left:737px;top:451px;background:#a3d17c;">2142</div><div class="dc" style="left:783px;top:451px;background:#a5cf7b;">2260</div><div class="dc" style="left:829px;top:451px;background:#a7cd7b;">2335</div><div class="dc" style="left:875px;top:451px;background:#a8cb7b;">2430</div><div class="dc" style="left:921px;top:451px;background:#a9cb7b;">2471</div><div class="dc" style="left:967px;top:451px;background:#acc87a;">2618</div><div class="dc" style="left:1013px;top:451px;background:#b0c47a;">2848</div><div class="dc" style="left:1059px;top:451px;background:#bdb678;">3574</div><div class="dc" style="left:1105px;top:451px;background:#dc9574;">5325</div><div class="dc" style="left:1151px;top:451px;background:#ff7070;">7260</div><div class="hc" style="left:0px;top:465px;width:45px;text-align:right;padding-right:2px;">8500</div><div class="dc" style="left:47px;top:466px;background:#80f680;">179</div><div class="dc" style="left:93px;top:466px;background:#82f480;">285</div><div class="dc" style="left:139px;top:466px;background:#84f280;">375</div><div class="dc" style="left:185px;top:466px;background:#86f07f;">489</div><div class="dc" style="left:231px;top:466px;background:#89ed7f;">669</div><div class="dc" style="left:277px;top:466px;background:#8bea7f;">790</div><div class="dc" style="left:323px;top:466px;background:#8ee77e;">971</div><div class="dc" style="left:369px;top:466px;background:#91e47e;">1126</div><div class="dc" style="left:415px;top:466px;background:#96df7d;">1382</div><div class="dc" style="left:461px;top:466px;background:#97dd7d;">1487</div><div class="dc" style="left:507px;top:466px;background:#9adb7d;">1622</div><div class="dc" style="left:553px;top:466px;background:#9cd87c;">1755</div><div class="dc" style="left:599px;top:466px;background:#9ed67c;">1874</div><div class="dc" style="left:645px;top:466px;background:#a1d37c;">2003</div><div class="dc" style="left:691px;top:466px;background:#a3d17c;">2119</div><div class="dc" style="left:737px;top:466px;background:#a5cf7b;">2236</div><div class="dc" style="left:783px;top:466px;background:#a7cd7b;">2356</div><div class="dc" style="left:829px;top:466px;background:#a8cb7b;">2431</div><div class="dc" style="left:875px;top:466px;background:#aaca7b;">2528</div><div class="dc" style="left:921px;top:466px;background:#abc97b;">2570</div><div class="dc" style="left:967px;top:466px;background:#aec67a;">2721</div><div class="dc" style="left:1013px;top:466px;background:#b2c27a;">2957</div><div class="dc" style="left:1059px;top:466px;background:#beb478;">3667</div><div class="dc" style="left:1105px;top:466px;background:#de9374;">5425</div><div class="dc" style="left:1151px;top:466px;background:#fd7270;">7193</div><div class="hc" style="left:0px;top:480px;width:45px;text-align:right;padding-right:2px;">9000</div><div class="dc" style="left:47px;top:481px;background:#80f680;">177</div><div class="dc" style="left:93px;top:481px;background:#82f480;">285</div><div class="dc" style="left:139px;top:481px;background:#84f280;">375</div><div class="dc" style="left:185px;top:481px;background:#86f07f;">489</div><div class="dc" style="left:231px;top:481px;background:#89ed7f;">667</div><div class="dc" style="left:277px;top:481px;background:#8bea7f;">788</div><div class="dc" style="left:323px;top:481px;background:#8ee77e;">970</div><div class="dc" style="left:369px;top:481px;background:#91e47e;">1124</div><div class="dc" style="left:415px;top:481px;background:#96df7d;">1380</div><div class="dc" style="left:461px;top:481px;background:#97dd7d;">1485</div><div class="dc" style="left:507px;top:481px;background:#9adb7d;">1620</div><div class="dc" style="left:553px;top:481px;background:#9cd87c;">1752</div><div class="dc" style="left:599px;top:481px;background:#9ed67c;">1871</div><div class="dc" style="left:645px;top:481px;background:#a1d47c;">1999</div><div class="dc" style="left:691px;top:481px;background:#a3d17c;">2115</div><div class="dc" style="left:737px;top:481px;background:#a5cf7b;">2232</div><div class="dc" style="left:783px;top:481px;background:#a7cd7b;">2352</div><div class="dc" style="left:829px;top:481px;background:#a8cb7b;">2427</div><div class="dc" style="left:875px;top:481px;background:#aaca7b;">2524</div><div class="dc" style="left:921px;top:481px;background:#abc97b;">2566</div><div class="dc" style="left:967px;top:481px;background:#afc47a;">2815</div><div class="dc" style="left:1013px;top:481px;background:#b4bf79;">3091</div><div class="dc" style="left:1059px;top:481px;background:#c1b278;">3803</div><div class="dc" style="left:1105px;top:481px;background:#de9374;">5425</div><div class="dc" style="left:1151px;top:481px;background:#ff7070;">7279</div><div class="hc" style="left:0px;top:495px;width:45px;text-align:right;padding-right:2px;">9500</div><div class="dc" style="left:47px;top:496px;background:#80f680;">175</div><div class="dc" style="left:93px;top:496px;background:#82f480;">288</div><div class="dc" style="left:139px;top:496px;background:#84f280;">375</div><div class="dc" style="left:185px;top:496px;background:#86f07f;">504</div><div class="dc" style="left:231px;top:496px;background:#8aeb7f;">748</div><div class="dc" style="left:277px;top:496px;background:#8de87e;">889</div><div class="dc" style="left:323px;top:496px;background:#90e57e;">1076</div><div class="dc" style="left:369px;top:496px;background:#93e27e;">1229</div><div class="dc" style="left:415px;top:496px;background:#97dd7d;">1486</div><div class="dc" style="left:461px;top:496px;background:#9adb7d;">1618</div><div class="dc" style="left:507px;top:496px;background:#9dd87c;">1771</div><div class="dc" style="left:553px;top:496px;background:#9fd57c;">1921</div><div class="dc" style="left:599px;top:496px;background:#a2d27c;">2064</div><div class="dc" style="left:645px;top:496px;background:#a4d07b;">2206</div><div class="dc" style="left:691px;top:496px;background:#a7cd7b;">2337</div><div class="dc" style="left:737px;top:496px;background:#a9cb7b;">2459</div><div class="dc" style="left:783px;top:496px;background:#abc87b;">2586</div><div class="dc" style="left:829px;top:496px;background:#acc77a;">2660</div><div class="dc" style="left:875px;top:496px;background:#aec57a;">2760</div><div class="dc" style="left:921px;top:496px;background:#afc47a;">2806</div><div class="dc" style="left:967px;top:496px;background:#b3c07a;">3034</div><div class="dc" style="left:1013px;top:496px;background:#b7bc79;">3253</div><div class="dc" style="left:1059px;top:496px;background:#c3af78;">3912</div><div class="dc" style="left:1105px;top:496px;background:#dc9574;">5332</div><div class="dc" style="left:1151px;top:496px;background:#fc7370;">7109</div><div class="hc" style="left:0px;top:510px;width:45px;text-align:right;padding-right:2px;">10000</div><div class="dc" style="left:47px;top:511px;background:#80f680;">173</div><div class="dc" style="left:93px;top:511px;background:#82f480;">290</div><div class="dc" style="left:139px;top:511px;background:#84f280;">375</div><div class="dc" style="left:185px;top:511px;background:#86f07f;">513</div><div class="dc" style="left:231px;top:511px;background:#8bea7f;">802</div><div class="dc" style="left:277px;top:511px;background:#8ee77e;">957</div><div class="dc" style="left:323px;top:511px;background:#91e47e;">1146</div><div class="dc" style="left:369px;top:511px;background:#94e17d;">1299</div><div class="dc" style="left:415px;top:511px;background:#99dc7d;">1556</div><div class="dc" style="left:461px;top:511px;background:#9bd97d;">1706</div><div class="dc" style="left:507px;top:511px;background:#9ed67c;">1871</div><div class="dc" style="left:553px;top:511px;background:#a1d37c;">2032</div><div class="dc" style="left:599px;top:511px;background:#a4d07b;">2192</div><div class="dc" style="left:645px;top:511px;background:#a7cd7b;">2342</div><div class="dc" style="left:691px;top:511px;background:#a9ca7b;">2484</div><div class="dc" style="left:737px;top:511px;background:#acc87b;">2609</div><div class="dc" style="left:783px;top:511px;background:#aec67a;">2741</div><div class="dc" style="left:829px;top:511px;background:#afc47a;">2814</div><div class="dc" style="left:875px;top:511px;background:#b1c27a;">2916</div><div class="dc" style="left:921px;top:511px;background:#b2c17a;">2965</div><div class="dc" style="left:967px;top:511px;background:#b6bd79;">3196</div><div class="dc" style="left:1013px;top:511px;background:#bab979;">3425</div><div class="dc" style="left:1059px;top:511px;background:#c4ae77;">4001</div><div class="dc" style="left:1105px;top:511px;background:#da9775;">5217</div><div class="dc" style="left:1151px;top:511px;background:#fb7470;">7061</div><div class="hc" style="left:0px;top:525px;width:45px;text-align:right;padding-right:2px;">10250</div><div class="dc" style="left:47px;top:526px;background:#80f680;">173</div><div class="dc" style="left:93px;top:526px;background:#82f480;">290</div><div class="dc" style="left:139px;top:526px;background:#84f280;">375</div><div class="dc" style="left:185px;top:526px;background:#86f07f;">513</div><div class="dc" style="left:231px;top:526px;background:#8bea7f;">802</div><div class="dc" style="left:277px;top:526px;background:#8ee77e;">957</div><div class="dc" style="left:323px;top:526px;background:#91e47e;">1146</div><div class="dc" style="left:369px;top:526px;background:#94e17d;">1299</div><div class="dc" style="left:415px;top:526px;background:#99dc7d;">1556</div><div class="dc" style="left:461px;top:526px;background:#9bd97d;">1706</div><div class="dc" style="left:507px;top:526px;background:#9ed67c;">1871</div><div class="dc" style="left:553px;top:526px;background:#a1d37c;">2032</div><div class="dc" style="left:599px;top:526px;background:#a4d07b;">2192</div><div class="dc" style="left:645px;top:526px;background:#a7cd7b;">2342</div><div class="dc" style="left:691px;top:526px;background:#a9ca7b;">2484</div><div class="dc" style="left:737px;top:526px;background:#acc87b;">2609</div><div class="dc" style="left:783px;top:526px;background:#aec67a;">2741</div><div class="dc" style="left:829px;top:526px;background:#afc47a;">2814</div><div class="dc" style="left:875px;top:526px;background:#b1c27a;">2916</div><div class="dc" style="left:921px;top:526px;background:#b2c17a;">2965</div><div class="dc" style="left:967px;top:526px;background:#b6bd79;">3196</div><div class="dc" style="left:1013px;top:526px;background:#bab979;">3425</div><div class="dc" style="left:1059px;top:526px;background:#c4ae77;">4001</div><div class="dc" style="left:1105px;top:526px;background:#da9775;">5217</div><div class="dc" style="left:1151px;top:526px;background:#fb7470;">7061</div><div class="hc" style="left:0px;top:540px;width:45px;text-align:right;padding-right:2px;">10500</div><div class="dc" style="left:47px;top:541px;background:#80f680;">173</div><div class="dc" style="left:93px;top:541px;background:#82f480;">290</div><div class="dc" style="left:139px;top:541px;background:#84f280;">375</div><div class="dc" style="left:185px;top:541px;background:#86f07f;">513</div><div class="dc" style="left:231px;top:541px;background:#8bea7f;">802</div><div class="dc" style="left:277px;top:541px;background:#8ee77e;">957</div><div class="dc" style="left:323px;top:541px;background:#91e47e;">1146</div><div class="dc" style="left:369px;top:541px;background:#94e17d;">1299</div><div class="dc" style="left:415px;top:541px;background:#99dc7d;">1556</div><div class="dc" style="left:461px;top:541px;background:#9bd97d;">1706</div><div class="dc" style="left:507px;top:541px;background:#9ed67c;">1871</div><div class="dc" style="left:553px;top:541px;background:#a1d37c;">2032</div><div class="dc" style="left:599px;top:541px;background:#a4d07b;">2192</div><div class="dc" style="left:645px;top:541px;background:#a7cd7b;">2342</div><div class="dc" style="left:691px;top:541px;background:#a9ca7b;">2484</div><div class="dc" style="left:737px;top:541px;background:#acc87b;">2609</div><div class="dc" style="left:783px;top:541px;background:#aec67a;">2741</div><div class="dc" style="left:829px;top:541px;background:#afc47a;">2814</div><div class="dc" style="left:875px;top:541px;background:#b1c27a;">2916</div><div class="dc" style="left:921px;top:541px;background:#b2c17a;">2965</div><div class="dc" style="left:967px;top:541px;background:#b6bd79;">3196</div><div class="dc" style="left:1013px;top:541px;background:#bab979;">3425</div><div class="dc" style="left:1059px;top:541px;background:#c4ae77;">4001</div><div class="dc" style="left:1105px;top:541px;background:#da9775;">5217</div><div class="dc" style="left:1151px;top:541px;background:#fb7470;">7061</div><div class="hc" style="left:0px;top:555px;width:45px;text-align:right;padding-right:2px;">11000</div><div class="dc" style="left:47px;top:556px;background:#80f680;">173</div><div class="dc" style="left:93px;top:556px;background:#82f480;">290</div><div class="dc" style="left:139px;top:556px;background:#84f280;">375</div><div class="dc" style="left:185px;top:556px;background:#86f07f;">513</div><div class="dc" style="left:231px;top:556px;background:#8bea7f;">802</div><div class="dc" style="left:277px;top:556px;background:#8ee77e;">957</div><div class="dc" style="left:323px;top:556px;background:#91e47e;">1146</div><div class="dc" style="left:369px;top:556px;background:#94e17d;">1299</div><div class="dc" style="left:415px;top:556px;background:#99dc7d;">1556</div><div class="dc" style="left:461px;top:556px;background:#9bd97d;">1706</div><div class="dc" style="left:507px;top:556px;background:#9ed67c;">1871</div><div class="dc" style="left:553px;top:556px;background:#a1d37c;">2032</div><div class="dc" style="left:599px;top:556px;background:#a4d07b;">2192</div><div class="dc" style="left:645px;top:556px;background:#a7cd7b;">2342</div><div class="dc" style="left:691px;top:556px;background:#a9ca7b;">2484</div><div class="dc" style="left:737px;top:556px;background:#acc87b;">2609</div><div class="dc" style="left:783px;top:556px;background:#aec67a;">2741</div><div class="dc" style="left:829px;top:556px;background:#afc47a;">2814</div><div class="dc" style="left:875px;top:556px;background:#b1c27a;">2916</div><div class="dc" style="left:921px;top:556px;background:#b2c17a;">2965</div><div class="dc" style="left:967px;top:556px;background:#b6bd79;">3196</div><div class="dc" style="left:1013px;top:556px;background:#bab979;">3425</div><div class="dc" style="left:1059px;top:556px;background:#c4ae77;">4001</div><div class="dc" style="left:1105px;top:556px;background:#da9775;">5217</div><div class="dc" style="left:1151px;top:556px;background:#fb7470;">7061</div><div class="hc" style="left:0px;top:570px;width:45px;text-align:right;padding-right:2px;">11500</div><div class="dc" style="left:47px;top:571px;background:#80f680;">173</div><div class="dc" style="left:93px;top:571px;background:#82f480;">290</div><div class="dc" style="left:139px;top:571px;background:#84f280;">375</div><div class="dc" style="left:185px;top:571px;background:#86f07f;">513</div><div class="dc" style="left:231px;top:571px;background:#8bea7f;">802</div><div class="dc" style="left:277px;top:571px;background:#8ee77e;">957</div><div class="dc" style="left:323px;top:571px;background:#91e47e;">1146</div><div class="dc" style="left:369px;top:571px;background:#94e17d;">1299</div><div class="dc" style="left:415px;top:571px;background:#99dc7d;">1556</div><div class="dc" style="left:461px;top:571px;background:#9bd97d;">1706</div><div class="dc" style="left:507px;top:571px;background:#9ed67c;">1871</div><div class="dc" style="left:553px;top:571px;background:#a1d37c;">2032</div><div class="dc" style="left:599px;top:571px;background:#a4d07b;">2192</div><div class="dc" style="left:645px;top:571px;background:#a7cd7b;">2342</div><div class="dc" style="left:691px;top:571px;background:#a9ca7b;">2484</div><div class="dc" style="left:737px;top:571px;background:#acc87b;">2609</div><div class="dc" style="left:783px;top:571px;background:#aec67a;">2741</div><div class="dc" style="left:829px;top:571px;background:#afc47a;">2814</div><div class="dc" style="left:875px;top:571px;background:#b1c27a;">2916</div><div class="dc" style="left:921px;top:571px;background:#b2c17a;">2965</div><div class="dc" style="left:967px;top:571px;background:#b6bd79;">3196</div><div class="dc" style="left:1013px;top:571px;background:#bab979;">3425</div><div class="dc" style="left:1059px;top:571px;background:#c4ae77;">4001</div><div class="dc" style="left:1105px;top:571px;background:#da9775;">5217</div><div class="dc" style="left:1151px;top:571px;background:#fb7470;">7061</div></div><div id="status"><svg class="abs" style="right:3px;bottom:2px" width="12" height="12"><g fill="#b8b8b8"><rect x="9" y="1" width="2" height="2"/><rect x="5" y="5" width="2" height="2"/><rect x="9" y="5" width="2" height="2"/><rect x="1" y="9" width="2" height="2"/><rect x="5" y="9" width="2" height="2"/><rect x="9" y="9" width="2" height="2"/></g></svg></div></div></div></div><div id="gsh"></div><div id="gw"><svg class="abs" style="left:0;top:0" width="864" height="587" font-family="Liberation Sans"><g stroke="#808080" stroke-width="1" fill="none"><path shape-rendering="crispEdges" d="M235.0,225.0 L235.0,457.0 M629.0,187.0 L629.0,419.0"/><path d="M235.0,225.0 L397.0,93.0 L629.0,187.0"/></g><g stroke="#a8a8a8" stroke-width="1" fill="none" stroke-dasharray="4 3"><path d="M235.0,410.6 L397.0,278.6 L629.0,372.6"/><path d="M235.0,364.2 L397.0,232.2 L629.0,326.2"/><path d="M235.0,317.8 L397.0,185.8 L629.0,279.8"/><path d="M235.0,271.4 L397.0,139.4 L629.0,233.4"/></g><g stroke="#b4b4b4" stroke-width="1" fill="none" stroke-dasharray="3 3"><path d="M467.0,551.0 L235.0,457.0"/><path d="M474.2,545.2 L242.2,451.2"/><path d="M483.9,537.2 L251.9,443.2"/><path d="M493.7,529.3 L261.7,435.3"/><path d="M503.4,521.3 L271.4,427.3"/><path d="M513.2,513.4 L281.2,419.4"/><path d="M523.0,505.4 L291.0,411.4"/><path d="M532.7,497.5 L300.7,403.5"/><path d="M542.5,489.5 L310.5,395.5"/><path d="M546.4,486.3 L314.4,392.3"/><path d="M552.2,481.6 L320.2,387.6"/><path d="M556.8,477.8 L324.8,383.8"/><path d="M562.0,473.6 L330.0,379.6"/><path d="M566.5,469.9 L334.5,375.9"/><path d="M571.7,465.7 L339.7,371.7"/><path d="M576.3,461.9 L344.3,367.9"/><path d="M581.5,457.7 L349.5,363.7"/><path d="M585.4,454.5 L353.4,360.5"/><path d="M590.6,450.3 L358.6,356.3"/><path d="M594.5,447.1 L362.5,353.1"/><path d="M600.4,442.3 L368.4,348.3"/><path d="M603.6,439.7 L371.6,345.7"/><path d="M610.1,434.4 L378.1,340.4"/><path d="M619.9,426.4 L387.9,332.4"/><path d="M629.0,419.0 L397.0,325.0"/><path d="M467.0,551.0 L629.0,419.0"/><path d="M462.7,549.3 L624.7,417.3"/><path d="M460.6,548.4 L622.6,416.4"/><path d="M458.4,547.5 L620.4,415.5"/><path d="M456.3,546.6 L618.3,414.6"/><path d="M454.1,545.8 L616.1,413.8"/><path d="M452.0,544.9 L614.0,412.9"/><path d="M447.7,543.2 L609.7,411.2"/><path d="M443.4,541.4 L605.4,409.4"/><path d="M439.1,539.7 L601.1,407.7"/><path d="M434.8,537.9 L596.8,405.9"/><path d="M430.5,536.2 L592.5,404.2"/><path d="M426.2,534.5 L588.2,402.5"/><path d="M421.9,532.7 L583.9,400.7"/><path d="M417.6,531.0 L579.6,399.0"/><path d="M413.3,529.2 L575.3,397.2"/><path d="M409.0,527.5 L571.0,395.5"/><path d="M404.7,525.8 L566.7,393.8"/><path d="M400.4,524.0 L562.4,392.0"/><path d="M396.1,522.3 L558.1,390.3"/><path d="M390.7,520.1 L552.7,388.1"/><path d="M385.4,517.9 L547.4,385.9"/><path d="M380.0,515.8 L542.0,383.8"/><path d="M374.6,513.6 L536.6,381.6"/><path d="M363.9,509.2 L525.9,377.2"/><path d="M353.1,504.9 L515.1,372.9"/><path d="M342.4,500.5 L504.4,368.5"/><path d="M331.7,496.2 L493.7,364.2"/><path d="M320.9,491.8 L482.9,359.8"/><path d="M310.2,487.5 L472.2,355.5"/><path d="M299.4,483.1 L461.4,351.1"/><path d="M288.7,478.8 L450.7,346.8"/><path d="M278.0,474.4 L440.0,342.4"/><path d="M267.2,470.1 L429.2,338.1"/><path d="M261.9,467.9 L423.9,335.9"/><path d="M256.5,465.7 L418.5,333.7"/><path d="M245.7,461.4 L407.7,329.4"/><path d="M235.0,457.0 L397.0,325.0"/></g><g stroke="#000" stroke-width="1" stroke-linejoin="round" shape-rendering="crispEdges"><polygon points="398.6,172.1 387.9,167.7 397.0,100.1 407.7,104.5" fill="#00f20a"/><polygon points="388.9,219.7 378.1,215.4 387.9,167.7 398.6,172.1" fill="#00f26f"/><polygon points="382.4,243.9 371.6,239.5 378.1,215.4 388.9,219.7" fill="#00f2b7"/><polygon points="379.1,254.0 368.4,249.6 371.6,239.5 382.4,243.9" fill="#00f2db"/><polygon points="373.3,266.3 362.5,261.9 368.4,249.6 379.1,254.0" fill="#00f2e9"/><polygon points="369.4,271.1 358.6,266.7 362.5,261.9 373.3,266.3" fill="#00f0f7"/><polygon points="364.2,278.6 353.4,274.3 358.6,266.7 369.4,271.1" fill="#00ecf7"/><polygon points="360.2,284.2 349.5,279.9 353.4,274.3 364.2,278.6" fill="#00e5f7"/><polygon points="355.0,292.8 344.3,288.4 349.5,279.9 360.2,284.2" fill="#00e1f7"/><polygon points="350.5,300.6 339.7,296.2 344.3,288.4 355.0,292.8" fill="#00d8f7"/><polygon points="345.3,309.4 334.5,305.1 339.7,296.2 350.5,300.6" fill="#00d0f7"/><polygon points="340.7,318.0 330.0,313.7 334.5,305.1 345.3,309.4" fill="#00c6f7"/><polygon points="335.5,327.5 324.8,323.1 330.0,313.7 340.7,318.0" fill="#00bcf7"/><polygon points="331.0,336.5 320.2,332.1 324.8,323.1 335.5,327.5" fill="#00b0f7"/><polygon points="325.1,346.6 314.4,342.3 320.2,332.1 331.0,336.5" fill="#00a5f7"/><polygon points="321.2,354.7 310.5,350.4 314.4,342.3 325.1,346.6" fill="#0098f7"/><polygon points="311.5,371.0 300.7,366.7 310.5,350.4 321.2,354.7" fill="#008df7"/><polygon points="301.7,384.0 291.0,379.6 300.7,366.7 311.5,371.0" fill="#0079f7"/><polygon points="291.9,398.1 281.2,393.8 291.0,379.6 301.7,384.0" fill="#006cf7"/><polygon points="282.2,411.1 271.4,406.8 281.2,393.8 291.9,398.1" fill="#005cf7"/><polygon points="272.4,428.5 261.7,424.2 271.4,406.8 282.2,411.1" fill="#004df7"/><polygon points="262.7,441.0 251.9,436.6 261.7,424.2 272.4,428.5" fill="#0031f7"/><polygon points="252.9,451.7 242.2,447.3 251.9,436.6 262.7,441.0" fill="#0021f7"/><polygon points="245.7,461.4 235.0,457.0 242.2,447.3 252.9,451.7" fill="#0015f7"/><polygon points="409.4,176.4 398.6,172.1 407.7,104.5 418.5,108.8" fill="#00f20a"/><polygon points="399.6,224.1 388.9,219.7 398.6,172.1 409.4,176.4" fill="#00f26f"/><polygon points="393.1,248.2 382.4,243.9 388.9,219.7 399.6,224.1" fill="#00f2b7"/><polygon points="389.9,258.3 379.1,254.0 382.4,243.9 393.1,248.2" fill="#00f2db"/><polygon points="384.0,270.6 373.3,266.3 379.1,254.0 389.9,258.3" fill="#00f2e9"/><polygon points="380.1,275.4 369.4,271.1 373.3,266.3 384.0,270.6" fill="#00f0f7"/><polygon points="374.9,283.0 364.2,278.6 369.4,271.1 380.1,275.4" fill="#00ecf7"/><polygon points="371.0,288.6 360.2,284.2 364.2,278.6 374.9,283.0" fill="#00e5f7"/><polygon points="365.8,297.1 355.0,292.8 360.2,284.2 371.0,288.6" fill="#00e1f7"/><polygon points="361.2,304.9 350.5,300.6 355.0,292.8 365.8,297.1" fill="#00d8f7"/><polygon points="356.0,313.8 345.3,309.4 350.5,300.6 361.2,304.9" fill="#00d0f7"/><polygon points="351.5,322.4 340.7,318.0 345.3,309.4 356.0,313.8" fill="#00c6f7"/><polygon points="346.3,331.9 335.5,327.5 340.7,318.0 351.5,322.4" fill="#00bcf7"/><polygon points="341.7,340.8 331.0,336.5 335.5,327.5 346.3,331.9" fill="#00b0f7"/><polygon points="335.9,351.0 325.1,346.6 331.0,336.5 341.7,340.8" fill="#00a5f7"/><polygon points="332.0,359.1 321.2,354.7 325.1,346.6 335.9,351.0" fill="#0098f7"/><polygon points="322.2,375.4 311.5,371.0 321.2,354.7 332.0,359.1" fill="#008df7"/><polygon points="312.4,388.3 301.7,384.0 311.5,371.0 322.2,375.4" fill="#0079f7"/><polygon points="302.7,402.5 291.9,398.1 301.7,384.0 312.4,388.3" fill="#006cf7"/><polygon points="292.9,415.5 282.2,411.1 291.9,398.1 302.7,402.5" fill="#005cf7"/><polygon points="283.2,432.9 272.4,428.5 282.2,411.1 292.9,415.5" fill="#004df7"/><polygon points="273.4,445.3 262.7,441.0 272.4,428.5 283.2,432.9" fill="#0031f7"/><polygon points="263.6,456.1 252.9,451.7 262.7,441.0 273.4,445.3" fill="#0021f7"/><polygon points="256.5,465.7 245.7,461.4 252.9,451.7 263.6,456.1" fill="#0015f7"/><polygon points="414.7,178.6 409.4,176.4 418.5,108.8 423.9,111.0" fill="#00f20a"/><polygon points="405.0,226.3 399.6,224.1 409.4,176.4 414.7,178.6" fill="#00f26f"/><polygon points="398.5,250.4 393.1,248.2 399.6,224.1 405.0,226.3" fill="#00f2b7"/><polygon points="395.2,260.5 389.9,258.3 393.1,248.2 398.5,250.4" fill="#00f2db"/><polygon points="389.4,272.8 384.0,270.6 389.9,258.3 395.2,260.5" fill="#00f2e9"/><polygon points="385.5,277.6 380.1,275.4 384.0,270.6 389.4,272.8" fill="#00f0f7"/><polygon points="380.3,285.2 374.9,283.0 380.1,275.4 385.5,277.6" fill="#00ecf7"/><polygon points="376.4,290.7 371.0,288.6 374.9,283.0 380.3,285.2" fill="#00e5f7"/><polygon points="371.2,299.3 365.8,297.1 371.0,288.6 376.4,290.7" fill="#00e1f7"/><polygon points="366.6,307.1 361.2,304.9 365.8,297.1 371.2,299.3" fill="#00d8f7"/><polygon points="361.4,316.0 356.0,313.8 361.2,304.9 366.6,307.1" fill="#00d0f7"/><polygon points="356.8,324.6 351.5,322.4 356.0,313.8 361.4,316.0" fill="#00c6f7"/><polygon points="351.6,334.0 346.3,331.9 351.5,322.4 356.8,324.6" fill="#00bcf7"/><polygon points="347.1,343.0 341.7,340.8 346.3,331.9 351.6,334.0" fill="#00b0f7"/><polygon points="341.2,353.2 335.9,351.0 341.7,340.8 347.1,343.0" fill="#00a5f7"/><polygon points="337.3,361.2 332.0,359.1 335.9,351.0 341.2,353.2" fill="#0098f7"/><polygon points="327.6,377.6 322.2,375.4 332.0,359.1 337.3,361.2" fill="#008df7"/><polygon points="317.8,390.5 312.4,388.3 322.2,375.4 327.6,377.6" fill="#0079f7"/><polygon points="308.0,404.6 302.7,402.5 312.4,388.3 317.8,390.5" fill="#006cf7"/><polygon points="298.3,417.7 292.9,415.5 302.7,402.5 308.0,404.6" fill="#005cf7"/><polygon points="288.5,435.0 283.2,432.9 292.9,415.5 298.3,417.7" fill="#004df7"/><polygon points="278.8,447.5 273.4,445.3 283.2,432.9 288.5,435.0" fill="#0031f7"/><polygon points="269.0,458.2 263.6,456.1 273.4,445.3 278.8,447.5" fill="#0021f7"/><polygon points="261.9,467.9 256.5,465.7 263.6,456.1 269.0,458.2" fill="#0015f7"/><polygon points="420.1,180.8 414.7,178.6 423.9,111.0 429.2,113.2" fill="#00f20a"/><polygon points="410.4,228.5 405.0,226.3 414.7,178.6 420.1,180.8" fill="#00f26f"/><polygon points="403.8,252.6 398.5,250.4 405.0,226.3 410.4,228.5" fill="#00f2b7"/><polygon points="400.6,262.7 395.2,260.5 398.5,250.4 403.8,252.6" fill="#00f2db"/><polygon points="394.7,275.0 389.4,272.8 395.2,260.5 400.6,262.7" fill="#00f2e9"/><polygon points="390.8,279.8 385.5,277.6 389.4,272.8 394.7,275.0" fill="#00f0f7"/><polygon points="385.6,287.3 380.3,285.2 385.5,277.6 390.8,279.8" fill="#00ecf7"/><polygon points="381.7,292.9 376.4,290.7 380.3,285.2 385.6,287.3" fill="#00e5f7"/><polygon points="376.5,301.5 371.2,299.3 376.4,290.7 381.7,292.9" fill="#00e1f7"/><polygon points="372.0,309.3 366.6,307.1 371.2,299.3 376.5,301.5" fill="#00d8f7"/><polygon points="366.8,318.1 361.4,316.0 366.6,307.1 372.0,309.3" fill="#00d0f7"/><polygon points="362.2,326.7 356.8,324.6 361.4,316.0 366.8,318.1" fill="#00c6f7"/><polygon points="357.0,336.2 351.6,334.0 356.8,324.6 362.2,326.7" fill="#00bcf7"/><polygon points="352.5,345.2 347.1,343.0 351.6,334.0 357.0,336.2" fill="#00b0f7"/><polygon points="346.6,355.3 341.2,353.2 347.1,343.0 352.5,345.2" fill="#00a5f7"/><polygon points="342.7,363.4 337.3,361.2 341.2,353.2 346.6,355.3" fill="#0098f7"/><polygon points="332.9,379.8 327.6,377.6 337.3,361.2 342.7,363.4" fill="#008df7"/><polygon points="323.2,392.7 317.8,390.5 327.6,377.6 332.9,379.8" fill="#0079f7"/><polygon points="313.4,406.8 308.0,404.6 317.8,390.5 323.2,392.7" fill="#006cf7"/><polygon points="303.7,419.8 298.3,417.7 308.0,404.6 313.4,406.8" fill="#005cf7"/><polygon points="293.9,437.2 288.5,435.0 298.3,417.7 303.7,419.8" fill="#004df7"/><polygon points="284.1,449.7 278.8,447.5 288.5,435.0 293.9,437.2" fill="#0031f7"/><polygon points="274.4,460.4 269.0,458.2 278.8,447.5 284.1,449.7" fill="#0021f7"/><polygon points="267.2,470.1 261.9,467.9 269.0,458.2 274.4,460.4" fill="#0015f7"/><polygon points="430.9,181.4 420.1,180.8 429.2,113.2 440.0,116.0" fill="#00f208"/><polygon points="421.1,235.7 410.4,228.5 420.1,180.8 430.9,181.4" fill="#00f268"/><polygon points="414.6,262.5 403.8,252.6 410.4,228.5 421.1,235.7" fill="#00f2b7"/><polygon points="411.3,272.3 400.6,262.7 403.8,252.6 414.6,262.5" fill="#00f2db"/><polygon points="405.5,284.5 394.7,275.0 400.6,262.7 411.3,272.3" fill="#00f2e9"/><polygon points="401.6,289.2 390.8,279.8 394.7,275.0 405.5,284.5" fill="#00f0f7"/><polygon points="396.4,296.7 385.6,287.3 390.8,279.8 401.6,289.2" fill="#00ecf7"/><polygon points="392.5,302.3 381.7,292.9 385.6,287.3 396.4,296.7" fill="#00e5f7"/><polygon points="387.3,310.7 376.5,301.5 381.7,292.9 392.5,302.3" fill="#00e1f7"/><polygon points="382.7,318.4 372.0,309.3 376.5,301.5 387.3,310.7" fill="#00d8f7"/><polygon points="377.5,326.9 366.8,318.1 372.0,309.3 382.7,318.4" fill="#00d0f7"/><polygon points="373.0,335.3 362.2,326.7 366.8,318.1 377.5,326.9" fill="#00c6f7"/><polygon points="367.7,344.2 357.0,336.2 362.2,326.7 373.0,335.3" fill="#00bcf7"/><polygon points="363.2,352.8 352.5,345.2 357.0,336.2 367.7,344.2" fill="#00b0f7"/><polygon points="357.3,362.6 346.6,355.3 352.5,345.2 363.2,352.8" fill="#00a5f7"/><polygon points="353.4,370.0 342.7,363.4 346.6,355.3 357.3,362.6" fill="#0098f7"/><polygon points="343.7,386.4 332.9,379.8 342.7,363.4 353.4,370.0" fill="#008df7"/><polygon points="333.9,399.3 323.2,392.7 332.9,379.8 343.7,386.4" fill="#0079f7"/><polygon points="324.2,413.4 313.4,406.8 323.2,392.7 333.9,399.3" fill="#006cf7"/><polygon points="314.4,425.9 303.7,419.8 313.4,406.8 324.2,413.4" fill="#005cf7"/><polygon points="304.6,441.9 293.9,437.2 303.7,419.8 314.4,425.9" fill="#004df7"/><polygon points="294.9,454.0 284.1,449.7 293.9,437.2 304.6,441.9" fill="#0031f7"/><polygon points="285.1,464.8 274.4,460.4 284.1,449.7 294.9,454.0" fill="#0021f7"/><polygon points="278.0,474.3 267.2,470.1 274.4,460.4 285.1,464.8" fill="#0015f7"/><polygon points="441.6,182.7 430.9,181.4 440.0,116.0 450.7,114.8" fill="#00f200"/><polygon points="431.8,243.6 421.1,235.7 430.9,181.4 441.6,182.7" fill="#00f263"/><polygon points="425.3,272.2 414.6,262.5 421.1,235.7 431.8,243.6" fill="#00f2bc"/><polygon points="422.1,283.8 411.3,272.3 414.6,262.5 425.3,272.2" fill="#00f2e5"/><polygon points="416.2,296.7 405.5,284.5 411.3,272.3 422.1,283.8" fill="#00f2f4"/><polygon points="412.3,301.3 401.6,289.2 405.5,284.5 416.2,296.7" fill="#00e5f7"/><polygon points="407.1,308.7 396.4,296.7 401.6,289.2 412.3,301.3" fill="#00e3f7"/><polygon points="403.2,314.3 392.5,302.3 396.4,296.7 407.1,308.7" fill="#00dcf7"/><polygon points="398.0,322.5 387.3,310.7 392.5,302.3 403.2,314.3" fill="#00d6f7"/><polygon points="393.5,330.0 382.7,318.4 387.3,310.7 398.0,322.5" fill="#00cef7"/><polygon points="388.2,338.0 377.5,326.9 382.7,318.4 393.5,330.0" fill="#00c6f7"/><polygon points="383.7,345.9 373.0,335.3 377.5,326.9 388.2,338.0" fill="#00bdf7"/><polygon points="378.5,354.1 367.7,344.2 373.0,335.3 383.7,345.9" fill="#00b2f7"/><polygon points="373.9,362.1 363.2,352.8 367.7,344.2 378.5,354.1" fill="#00a9f7"/><polygon points="368.1,371.2 357.3,362.6 363.2,352.8 373.9,362.1" fill="#009df7"/><polygon points="364.2,377.9 353.4,370.0 357.3,362.6 368.1,371.2" fill="#0092f7"/><polygon points="354.4,394.2 343.7,386.4 353.4,370.0 364.2,377.9" fill="#0087f7"/><polygon points="344.7,407.1 333.9,399.3 343.7,386.4 354.4,394.2" fill="#0073f7"/><polygon points="334.9,421.0 324.2,413.4 333.9,399.3 344.7,407.1" fill="#0066f7"/><polygon points="325.1,432.9 314.4,425.9 324.2,413.4 334.9,421.0" fill="#0056f7"/><polygon points="315.4,446.7 304.6,441.9 314.4,425.9 325.1,432.9" fill="#0049f7"/><polygon points="305.6,458.4 294.9,454.0 304.6,441.9 315.4,446.7" fill="#0030f7"/><polygon points="295.9,469.3 285.1,464.8 294.9,454.0 305.6,458.4" fill="#0021f7"/><polygon points="288.7,478.6 278.0,474.3 285.1,464.8 295.9,469.3" fill="#0015f7"/><polygon points="452.3,187.1 441.6,182.7 450.7,114.8 461.4,121.9" fill="#00f200"/><polygon points="442.6,252.4 431.8,243.6 441.6,182.7 452.3,187.1" fill="#00f263"/><polygon points="436.1,280.9 425.3,272.2 431.8,243.6 442.6,252.4" fill="#00f2c2"/><polygon points="432.8,291.2 422.1,283.8 425.3,272.2 436.1,280.9" fill="#00f2f0"/><polygon points="427.0,300.9 416.2,296.7 422.1,283.8 432.8,291.2" fill="#00e5f7"/><polygon points="423.1,305.5 412.3,301.3 416.2,296.7 427.0,300.9" fill="#00d5f7"/><polygon points="417.9,312.9 407.1,308.7 412.3,301.3 423.1,305.5" fill="#00d2f7"/><polygon points="414.0,318.5 403.2,314.3 407.1,308.7 417.9,312.9" fill="#00ccf7"/><polygon points="408.7,326.7 398.0,322.5 403.2,314.3 414.0,318.5" fill="#00c7f7"/><polygon points="404.2,334.2 393.5,330.0 398.0,322.5 408.7,326.7" fill="#00bef7"/><polygon points="399.0,342.3 388.2,338.0 393.5,330.0 404.2,334.2" fill="#00b7f7"/><polygon points="394.4,350.2 383.7,345.9 388.2,338.0 399.0,342.3" fill="#00aef7"/><polygon points="389.2,358.3 378.5,354.1 383.7,345.9 394.4,350.2" fill="#00a5f7"/><polygon points="384.7,366.4 373.9,362.1 378.5,354.1 389.2,358.3" fill="#009cf7"/><polygon points="378.8,375.5 368.1,371.2 373.9,362.1 384.7,366.4" fill="#0092f7"/><polygon points="374.9,382.1 364.2,377.9 368.1,371.2 378.8,375.5" fill="#0087f7"/><polygon points="365.2,398.5 354.4,394.2 364.2,377.9 374.9,382.1" fill="#0080f7"/><polygon points="355.4,411.5 344.7,407.1 354.4,394.2 365.2,398.5" fill="#006bf7"/><polygon points="345.6,425.3 334.9,421.0 344.7,407.1 355.4,411.5" fill="#005df7"/><polygon points="335.9,437.2 325.1,432.9 334.9,421.0 345.6,425.3" fill="#004cf7"/><polygon points="326.1,451.1 315.4,446.7 325.1,432.9 335.9,437.2" fill="#0041f7"/><polygon points="316.4,462.7 305.6,458.4 315.4,446.7 326.1,451.1" fill="#002ef7"/><polygon points="306.6,473.6 295.9,469.3 305.6,458.4 316.4,462.7" fill="#0021f7"/><polygon points="299.4,482.9 288.7,478.6 295.9,469.3 306.6,473.6" fill="#0014f7"/><polygon points="463.1,194.7 452.3,187.1 461.4,121.9 472.2,124.1" fill="#00f200"/><polygon points="453.3,259.8 442.6,252.4 452.3,187.1 463.1,194.7" fill="#00f263"/><polygon points="446.8,288.8 436.1,280.9 442.6,252.4 453.3,259.8" fill="#00f2cb"/><polygon points="443.6,299.0 432.8,291.2 436.1,280.9 446.8,288.8" fill="#00eff7"/><polygon points="437.7,308.5 427.0,300.9 432.8,291.2 443.6,299.0" fill="#00e0f7"/><polygon points="433.8,313.1 423.1,305.5 427.0,300.9 437.7,308.5" fill="#00d5f7"/><polygon points="428.6,320.4 417.9,312.9 423.1,305.5 433.8,313.1" fill="#00d2f7"/><polygon points="424.7,326.0 414.0,318.5 417.9,312.9 428.6,320.4" fill="#00ccf7"/><polygon points="419.5,334.1 408.7,326.7 414.0,318.5 424.7,326.0" fill="#00c7f7"/><polygon points="414.9,341.6 404.2,334.2 408.7,326.7 419.5,334.1" fill="#00bef7"/><polygon points="409.7,349.4 399.0,342.3 404.2,334.2 414.9,341.6" fill="#00b7f7"/><polygon points="405.2,357.1 394.4,350.2 399.0,342.3 409.7,349.4" fill="#00aef7"/><polygon points="400.0,364.9 389.2,358.3 394.4,350.2 405.2,357.1" fill="#00a5f7"/><polygon points="395.4,372.7 384.7,366.4 389.2,358.3 400.0,364.9" fill="#009cf7"/><polygon points="389.6,381.7 378.8,375.5 384.7,366.4 395.4,372.7" fill="#0092f7"/><polygon points="385.7,387.9 374.9,382.1 378.8,375.5 389.6,381.7" fill="#0087f7"/><polygon points="375.9,404.2 365.2,398.5 374.9,382.1 385.7,387.9" fill="#0080f7"/><polygon points="366.1,417.3 355.4,411.5 365.2,398.5 375.9,404.2" fill="#006bf7"/><polygon points="356.4,431.1 345.6,425.3 355.4,411.5 366.1,417.3" fill="#005df7"/><polygon points="346.6,442.7 335.9,437.2 345.6,425.3 356.4,431.1" fill="#004cf7"/><polygon points="336.9,455.6 326.1,451.1 335.9,437.2 346.6,442.7" fill="#0041f7"/><polygon points="327.1,467.1 316.4,462.7 326.1,451.1 336.9,455.6" fill="#002ef7"/><polygon points="317.3,478.0 306.6,473.6 316.4,462.7 327.1,467.1" fill="#0021f7"/><polygon points="310.2,487.2 299.4,482.9 306.6,473.6 317.3,478.0" fill="#0014f7"/><polygon points="473.8,204.1 463.1,194.7 472.2,124.1 482.9,128.0" fill="#00f200"/><polygon points="464.1,267.0 453.3,259.8 463.1,194.7 473.8,204.1" fill="#00f269"/><polygon points="457.6,295.4 446.8,288.8 453.3,259.8 464.1,267.0" fill="#00f2d1"/><polygon points="454.3,304.9 443.6,299.0 446.8,288.8 457.6,295.4" fill="#00e8f7"/><polygon points="448.4,315.5 437.7,308.5 443.6,299.0 454.3,304.9" fill="#00d9f7"/><polygon points="444.5,320.0 433.8,313.1 437.7,308.5 448.4,315.5" fill="#00cff7"/><polygon points="439.3,327.3 428.6,320.4 433.8,313.1 444.5,320.0" fill="#00ccf7"/><polygon points="435.4,333.0 424.7,326.0 428.6,320.4 439.3,327.3" fill="#00c5f7"/><polygon points="430.2,341.0 419.5,334.1 424.7,326.0 435.4,333.0" fill="#00c0f7"/><polygon points="425.7,348.4 414.9,341.6 419.5,334.1 430.2,341.0" fill="#00b8f7"/><polygon points="420.5,356.0 409.7,349.4 414.9,341.6 425.7,348.4" fill="#00b0f7"/><polygon points="415.9,363.6 405.2,357.1 409.7,349.4 420.5,356.0" fill="#00a8f7"/><polygon points="410.7,371.1 400.0,364.9 405.2,357.1 415.9,363.6" fill="#009ff7"/><polygon points="406.2,378.8 395.4,372.7 400.0,364.9 410.7,371.1" fill="#0097f7"/><polygon points="400.3,387.5 389.6,381.7 395.4,372.7 406.2,378.8" fill="#008df7"/><polygon points="396.4,393.5 385.7,387.9 389.6,381.7 400.3,387.5" fill="#0084f7"/><polygon points="386.6,409.7 375.9,404.2 385.7,387.9 396.4,393.5" fill="#007cf7"/><polygon points="376.9,422.8 366.1,417.3 375.9,404.2 386.6,409.7" fill="#0067f7"/><polygon points="367.1,436.5 356.4,431.1 366.1,417.3 376.9,422.8" fill="#0059f7"/><polygon points="357.4,447.9 346.6,442.7 356.4,431.1 367.1,436.5" fill="#0049f7"/><polygon points="347.6,460.1 336.9,455.6 346.6,442.7 357.4,447.9" fill="#003df7"/><polygon points="337.8,471.4 327.1,467.1 336.9,455.6 347.6,460.1" fill="#002df7"/><polygon points="328.1,482.4 317.3,478.0 327.1,467.1 337.8,471.4" fill="#0021f7"/><polygon points="320.9,491.5 310.2,487.2 317.3,478.0 328.1,482.4" fill="#0014f7"/><polygon points="484.6,212.9 473.8,204.1 482.9,128.0 493.7,137.6" fill="#00f200"/><polygon points="474.8,272.4 464.1,267.0 473.8,204.1 484.6,212.9" fill="#00f272"/><polygon points="468.3,299.7 457.6,295.4 464.1,267.0 474.8,272.4" fill="#00f2d7"/><polygon points="465.0,307.1 454.3,304.9 457.6,295.4 468.3,299.7" fill="#00e4f7"/><polygon points="459.2,316.7 448.4,315.5 454.3,304.9 465.0,307.1" fill="#00daf7"/><polygon points="455.3,321.2 444.5,320.0 448.4,315.5 459.2,316.7" fill="#00d0f7"/><polygon points="450.1,328.6 439.3,327.3 444.5,320.0 455.3,321.2" fill="#00cdf7"/><polygon points="446.2,334.2 435.4,333.0 439.3,327.3 450.1,328.6" fill="#00c7f7"/><polygon points="441.0,342.3 430.2,341.0 435.4,333.0 446.2,334.2" fill="#00c1f7"/><polygon points="436.4,349.8 425.7,348.4 430.2,341.0 441.0,342.3" fill="#00b9f7"/><polygon points="431.2,357.7 420.5,356.0 425.7,348.4 436.4,349.8" fill="#00b1f7"/><polygon points="426.7,365.4 415.9,363.6 420.5,356.0 431.2,357.7" fill="#00a9f7"/><polygon points="421.4,373.3 410.7,371.1 415.9,363.6 426.7,365.4" fill="#00a0f7"/><polygon points="416.9,381.1 406.2,378.8 410.7,371.1 421.4,373.3" fill="#0098f7"/><polygon points="411.0,390.1 400.3,387.5 406.2,378.8 416.9,381.1" fill="#008ef7"/><polygon points="407.1,396.4 396.4,393.5 400.3,387.5 411.0,390.1" fill="#0085f7"/><polygon points="397.4,412.7 386.6,409.7 396.4,393.5 407.1,396.4" fill="#007cf7"/><polygon points="387.6,425.7 376.9,422.8 386.6,409.7 397.4,412.7" fill="#0067f7"/><polygon points="377.9,439.5 367.1,436.5 376.9,422.8 387.6,425.7" fill="#005af7"/><polygon points="368.1,451.2 357.4,447.9 367.1,436.5 377.9,439.5" fill="#004af7"/><polygon points="358.3,464.3 347.6,460.1 357.4,447.9 368.1,451.2" fill="#003ef7"/><polygon points="348.6,475.8 337.8,471.4 347.6,460.1 358.3,464.3" fill="#002df7"/><polygon points="338.8,486.7 328.1,482.4 337.8,471.4 348.6,475.8" fill="#0021f7"/><polygon points="331.7,495.8 320.9,491.5 328.1,482.4 338.8,486.7" fill="#0014f7"/><polygon points="495.3,224.3 484.6,212.9 493.7,137.6 504.4,154.6" fill="#00f208"/><polygon points="485.5,278.8 474.8,272.4 484.6,212.9 495.3,224.3" fill="#00f27a"/><polygon points="479.0,301.6 468.3,299.7 474.8,272.4 485.5,278.8" fill="#00f2d9"/><polygon points="475.8,308.5 465.0,307.1 468.3,299.7 479.0,301.6" fill="#00e8f7"/><polygon points="469.9,318.8 459.2,316.7 465.0,307.1 475.8,308.5" fill="#00e0f7"/><polygon points="466.0,323.4 455.3,321.2 459.2,316.7 469.9,318.8" fill="#00d4f7"/><polygon points="460.8,330.8 450.1,328.6 455.3,321.2 466.0,323.4" fill="#00d1f7"/><polygon points="456.9,336.4 446.2,334.2 450.1,328.6 460.8,330.8" fill="#00cbf7"/><polygon points="451.7,344.6 441.0,342.3 446.2,334.2 456.9,336.4" fill="#00c6f7"/><polygon points="447.2,352.1 436.4,349.8 441.0,342.3 451.7,344.6" fill="#00bef7"/><polygon points="441.9,360.1 431.2,357.7 436.4,349.8 447.2,352.1" fill="#00b6f7"/><polygon points="437.4,367.9 426.7,365.4 431.2,357.7 441.9,360.1" fill="#00adf7"/><polygon points="432.2,376.0 421.4,373.3 426.7,365.4 437.4,367.9" fill="#00a4f7"/><polygon points="427.6,384.1 416.9,381.1 421.4,373.3 432.2,376.0" fill="#009bf7"/><polygon points="421.8,393.2 411.0,390.1 416.9,381.1 427.6,384.1" fill="#0092f7"/><polygon points="417.9,399.7 407.1,396.4 411.0,390.1 421.8,393.2" fill="#0087f7"/><polygon points="408.1,416.1 397.4,412.7 407.1,396.4 417.9,399.7" fill="#007ff7"/><polygon points="398.4,429.1 387.6,425.7 397.4,412.7 408.1,416.1" fill="#006af7"/><polygon points="388.6,442.9 377.9,439.5 387.6,425.7 398.4,429.1" fill="#005df7"/><polygon points="378.8,454.8 368.1,451.2 377.9,439.5 388.6,442.9" fill="#004cf7"/><polygon points="369.1,468.5 358.3,464.3 368.1,451.2 378.8,454.8" fill="#0040f7"/><polygon points="359.3,480.1 348.6,475.8 358.3,464.3 369.1,468.5" fill="#002ef7"/><polygon points="349.6,491.0 338.8,486.7 348.6,475.8 359.3,480.1" fill="#0021f7"/><polygon points="342.4,500.1 331.7,495.8 338.8,486.7 349.6,491.0" fill="#0014f7"/><polygon points="506.0,236.7 495.3,224.3 504.4,154.6 515.1,171.2" fill="#00f21d"/><polygon points="496.3,284.8 485.5,278.8 495.3,224.3 506.0,236.7" fill="#00f286"/><polygon points="489.8,303.9 479.0,301.6 485.5,278.8 496.3,284.8" fill="#00f2dd"/><polygon points="486.5,310.2 475.8,308.5 479.0,301.6 489.8,303.9" fill="#00edf7"/><polygon points="480.7,320.8 469.9,318.8 475.8,308.5 486.5,310.2" fill="#00e5f7"/><polygon points="476.8,325.4 466.0,323.4 469.9,318.8 480.7,320.8" fill="#00d9f7"/><polygon points="471.6,332.8 460.8,330.8 466.0,323.4 476.8,325.4" fill="#00d6f7"/><polygon points="467.7,338.4 456.9,336.4 460.8,330.8 471.6,332.8" fill="#00d0f7"/><polygon points="462.4,346.7 451.7,344.6 456.9,336.4 467.7,338.4" fill="#00cbf7"/><polygon points="457.9,354.2 447.2,352.1 451.7,344.6 462.4,346.7" fill="#00c2f7"/><polygon points="452.7,362.4 441.9,360.1 447.2,352.1 457.9,354.2" fill="#00bbf7"/><polygon points="448.1,370.4 437.4,367.9 441.9,360.1 452.7,362.4" fill="#00b2f7"/><polygon points="442.9,378.7 432.2,376.0 437.4,367.9 448.1,370.4" fill="#00a9f7"/><polygon points="438.4,386.9 427.6,384.1 432.2,376.0 442.9,378.7" fill="#009ff7"/><polygon points="432.5,396.2 421.8,393.2 427.6,384.1 438.4,386.9" fill="#0095f7"/><polygon points="428.6,403.1 417.9,399.7 421.8,393.2 432.5,396.2" fill="#008af7"/><polygon points="418.9,419.4 408.1,416.1 417.9,399.7 428.6,403.1" fill="#0082f7"/><polygon points="409.1,432.4 398.4,429.1 408.1,416.1 418.9,419.4" fill="#006df7"/><polygon points="399.3,446.3 388.6,442.9 398.4,429.1 409.1,432.4" fill="#005ff7"/><polygon points="389.6,458.3 378.8,454.8 388.6,442.9 399.3,446.3" fill="#004ff7"/><polygon points="379.8,472.7 369.1,468.5 378.8,454.8 389.6,458.3" fill="#0043f7"/><polygon points="370.1,484.5 359.3,480.1 369.1,468.5 379.8,472.7" fill="#002ef7"/><polygon points="360.3,495.3 349.6,491.0 359.3,480.1 370.1,484.5" fill="#0021f7"/><polygon points="353.1,504.3 342.4,500.1 349.6,491.0 360.3,495.3" fill="#0014f7"/><polygon points="516.8,257.8 506.0,236.7 515.1,171.2 525.9,208.6" fill="#00f230"/><polygon points="507.0,292.9 496.3,284.8 506.0,236.7 516.8,257.8" fill="#00f295"/><polygon points="500.5,305.1 489.8,303.9 496.3,284.8 507.0,292.9" fill="#00f2e0"/><polygon points="497.3,312.0 486.5,310.2 489.8,303.9 500.5,305.1" fill="#00f2f5"/><polygon points="491.4,322.5 480.7,320.8 486.5,310.2 497.3,312.0" fill="#00eaf7"/><polygon points="487.5,327.1 476.8,325.4 480.7,320.8 491.4,322.5" fill="#00dff7"/><polygon points="482.3,334.5 471.6,332.8 476.8,325.4 487.5,327.1" fill="#00dcf7"/><polygon points="478.4,340.2 467.7,338.4 471.6,332.8 482.3,334.5" fill="#00d5f7"/><polygon points="473.2,348.5 462.4,346.7 467.7,338.4 478.4,340.2" fill="#00d1f7"/><polygon points="468.6,356.1 457.9,354.2 462.4,346.7 473.2,348.5" fill="#00c8f7"/><polygon points="463.4,364.4 452.7,362.4 457.9,354.2 468.6,356.1" fill="#00bff7"/><polygon points="458.9,372.6 448.1,370.4 452.7,362.4 463.4,364.4" fill="#00b7f7"/><polygon points="453.7,381.2 442.9,378.7 448.1,370.4 458.9,372.6" fill="#00adf7"/><polygon points="449.1,389.6 438.4,386.9 442.9,378.7 453.7,381.2" fill="#00a3f7"/><polygon points="443.3,399.1 432.5,396.2 438.4,386.9 449.1,389.6" fill="#0098f7"/><polygon points="439.4,406.2 428.6,403.1 432.5,396.2 443.3,399.1" fill="#008ef7"/><polygon points="429.6,422.5 418.9,419.4 428.6,403.1 439.4,406.2" fill="#0085f7"/><polygon points="419.8,435.5 409.1,432.4 418.9,419.4 429.6,422.5" fill="#0070f7"/><polygon points="410.1,449.5 399.3,446.3 409.1,432.4 419.8,435.5" fill="#0062f7"/><polygon points="400.3,461.8 389.6,458.3 399.3,446.3 410.1,449.5" fill="#0052f7"/><polygon points="390.6,476.9 379.8,472.7 389.6,458.3 400.3,461.8" fill="#0046f7"/><polygon points="380.8,488.8 370.1,484.5 379.8,472.7 390.6,476.9" fill="#002ff7"/><polygon points="371.0,499.7 360.3,495.3 370.1,484.5 380.8,488.8" fill="#0021f7"/><polygon points="363.9,508.6 353.1,504.3 360.3,495.3 371.0,499.7" fill="#0014f7"/><polygon points="527.5,266.6 516.8,257.8 525.9,208.6 536.6,217.0" fill="#00f268"/><polygon points="517.8,302.4 507.0,292.9 516.8,257.8 527.5,266.6" fill="#00f2b3"/><polygon points="511.3,314.4 500.5,305.1 507.0,292.9 517.8,302.4" fill="#00f2e7"/><polygon points="508.0,320.5 497.3,312.0 500.5,305.1 511.3,314.4" fill="#00f2f5"/><polygon points="502.1,331.4 491.4,322.5 497.3,312.0 508.0,320.5" fill="#00eaf7"/><polygon points="498.2,336.0 487.5,327.1 491.4,322.5 502.1,331.4" fill="#00dff7"/><polygon points="493.0,343.4 482.3,334.5 487.5,327.1 498.2,336.0" fill="#00dcf7"/><polygon points="489.1,349.0 478.4,340.2 482.3,334.5 493.0,343.4" fill="#00d5f7"/><polygon points="483.9,357.2 473.2,348.5 478.4,340.2 489.1,349.0" fill="#00d1f7"/><polygon points="479.4,364.7 468.6,356.1 473.2,348.5 483.9,357.2" fill="#00c8f7"/><polygon points="474.2,372.7 463.4,364.4 468.6,356.1 479.4,364.7" fill="#00bff7"/><polygon points="469.6,380.6 458.9,372.6 463.4,364.4 474.2,372.7" fill="#00b7f7"/><polygon points="464.4,388.8 453.7,381.2 458.9,372.6 469.6,380.6" fill="#00adf7"/><polygon points="459.9,396.8 449.1,389.6 453.7,381.2 464.4,388.8" fill="#00a3f7"/><polygon points="454.0,406.0 443.3,399.1 449.1,389.6 459.9,396.8" fill="#0098f7"/><polygon points="450.1,412.6 439.4,406.2 443.3,399.1 454.0,406.0" fill="#008ef7"/><polygon points="440.3,428.9 429.6,422.5 439.4,406.2 450.1,412.6" fill="#0085f7"/><polygon points="430.6,441.9 419.8,435.5 429.6,422.5 440.3,428.9" fill="#0070f7"/><polygon points="420.8,455.8 410.1,449.5 419.8,435.5 430.6,441.9" fill="#0062f7"/><polygon points="411.1,467.7 400.3,461.8 410.1,449.5 420.8,455.8" fill="#0052f7"/><polygon points="401.3,481.5 390.6,476.9 400.3,461.8 411.1,467.7" fill="#0046f7"/><polygon points="391.5,493.2 380.8,488.8 390.6,476.9 401.3,481.5" fill="#002ff7"/><polygon points="381.8,504.1 371.0,499.7 380.8,488.8 391.5,493.2" fill="#0021f7"/><polygon points="374.6,512.9 363.9,508.6 371.0,499.7 381.8,504.1" fill="#0014f7"/><polygon points="532.9,268.6 527.5,266.6 536.6,217.0 542.0,218.6" fill="#00f26e"/><polygon points="523.1,303.6 517.8,302.4 527.5,266.6 532.9,268.6" fill="#00f2bb"/><polygon points="516.6,316.8 511.3,314.4 517.8,302.4 523.1,303.6" fill="#00f2ef"/><polygon points="513.4,324.1 508.0,320.5 511.3,314.4 516.6,316.8" fill="#00e9f7"/><polygon points="507.5,332.9 502.1,331.4 508.0,320.5 513.4,324.1" fill="#00e2f7"/><polygon points="503.6,337.5 498.2,336.0 502.1,331.4 507.5,332.9" fill="#00d7f7"/><polygon points="498.4,344.9 493.0,343.4 498.2,336.0 503.6,337.5" fill="#00d4f7"/><polygon points="494.5,350.5 489.1,349.0 493.0,343.4 498.4,344.9" fill="#00cef7"/><polygon points="489.3,358.7 483.9,357.2 489.1,349.0 494.5,350.5" fill="#00c8f7"/><polygon points="484.7,366.3 479.4,364.7 483.9,357.2 489.3,358.7" fill="#00c0f7"/><polygon points="479.5,374.3 474.2,372.7 479.4,364.7 484.7,366.3" fill="#00b8f7"/><polygon points="475.0,382.3 469.6,380.6 474.2,372.7 479.5,374.3" fill="#00aff7"/><polygon points="469.8,390.5 464.4,388.8 469.6,380.6 475.0,382.3" fill="#00a6f7"/><polygon points="465.2,398.6 459.9,396.8 464.4,388.8 469.8,390.5" fill="#009df7"/><polygon points="459.4,407.8 454.0,406.0 459.9,396.8 465.2,398.6" fill="#0093f7"/><polygon points="455.5,414.5 450.1,412.6 454.0,406.0 459.4,407.8" fill="#0088f7"/><polygon points="445.7,430.8 440.3,428.9 450.1,412.6 455.5,414.5" fill="#0080f7"/><polygon points="436.0,443.8 430.6,441.9 440.3,428.9 445.7,430.8" fill="#006bf7"/><polygon points="426.2,457.7 420.8,455.8 430.6,441.9 436.0,443.8" fill="#005ef7"/><polygon points="416.4,469.7 411.1,467.7 420.8,455.8 426.2,457.7" fill="#004df7"/><polygon points="406.7,483.7 401.3,481.5 411.1,467.7 416.4,469.7" fill="#0041f7"/><polygon points="396.9,495.4 391.5,493.2 401.3,481.5 406.7,483.7" fill="#002ef7"/><polygon points="387.2,506.3 381.8,504.1 391.5,493.2 396.9,495.4" fill="#0021f7"/><polygon points="380.0,515.0 374.6,512.9 381.8,504.1 387.2,506.3" fill="#0014f7"/><polygon points="538.3,270.0 532.9,268.6 542.0,218.6 547.4,220.8" fill="#00f26e"/><polygon points="528.5,303.5 523.1,303.6 532.9,268.6 538.3,270.0" fill="#00f2ba"/><polygon points="522.0,315.1 516.6,316.8 523.1,303.6 528.5,303.5" fill="#00f2eb"/><polygon points="518.7,321.4 513.4,324.1 516.6,316.8 522.0,315.1" fill="#00f0f7"/><polygon points="512.9,332.0 507.5,332.9 513.4,324.1 518.7,321.4" fill="#00e9f7"/><polygon points="509.0,336.6 503.6,337.5 507.5,332.9 512.9,332.0" fill="#00ddf7"/><polygon points="503.8,344.1 498.4,344.9 503.6,337.5 509.0,336.6" fill="#00daf7"/><polygon points="499.9,349.7 494.5,350.5 498.4,344.9 503.8,344.1" fill="#00d3f7"/><polygon points="494.7,358.0 489.3,358.7 494.5,350.5 499.9,349.7" fill="#00cff7"/><polygon points="490.1,365.5 484.7,366.3 489.3,358.7 494.7,358.0" fill="#00c6f7"/><polygon points="484.9,373.8 479.5,374.3 484.7,366.3 490.1,365.5" fill="#00bef7"/><polygon points="480.4,382.0 475.0,382.3 479.5,374.3 484.9,373.8" fill="#00b5f7"/><polygon points="475.2,390.5 469.8,390.5 475.0,382.3 480.4,382.0" fill="#00abf7"/><polygon points="470.6,398.8 465.2,398.6 469.8,390.5 475.2,390.5" fill="#00a2f7"/><polygon points="464.7,408.2 459.4,407.8 465.2,398.6 470.6,398.8" fill="#0098f7"/><polygon points="460.8,415.3 455.5,414.5 459.4,407.8 464.7,408.2" fill="#008df7"/><polygon points="451.1,431.6 445.7,430.8 455.5,414.5 460.8,415.3" fill="#0084f7"/><polygon points="441.3,444.6 436.0,443.8 445.7,430.8 451.1,431.6" fill="#006ff7"/><polygon points="431.6,458.5 426.2,457.7 436.0,443.8 441.3,444.6" fill="#0061f7"/><polygon points="421.8,470.8 416.4,469.7 426.2,457.7 431.6,458.5" fill="#0051f7"/><polygon points="412.0,485.6 406.7,483.7 416.4,469.7 421.8,470.8" fill="#0045f7"/><polygon points="402.3,497.5 396.9,495.4 406.7,483.7 412.0,485.6" fill="#002ff7"/><polygon points="392.5,508.4 387.2,506.3 396.9,495.4 402.3,497.5" fill="#0021f7"/><polygon points="385.4,517.1 380.0,515.0 387.2,506.3 392.5,508.4" fill="#0014f7"/><polygon points="543.6,262.6 538.3,270.0 547.4,220.8 552.7,218.2" fill="#00f266"/><polygon points="533.9,299.4 528.5,303.5 538.3,270.0 543.6,262.6" fill="#00f2a8"/><polygon points="527.4,315.9 522.0,315.1 528.5,303.5 533.9,299.4" fill="#00f2df"/><polygon points="524.1,323.6 518.7,321.4 522.0,315.1 527.4,315.9" fill="#00f2f5"/><polygon points="518.3,334.5 512.9,332.0 518.7,321.4 524.1,323.6" fill="#00e9f7"/><polygon points="514.4,339.2 509.0,336.6 512.9,332.0 518.3,334.5" fill="#00ddf7"/><polygon points="509.2,346.6 503.8,344.1 509.0,336.6 514.4,339.2" fill="#00daf7"/><polygon points="505.2,352.2 499.9,349.7 503.8,344.1 509.2,346.6" fill="#00d3f7"/><polygon points="500.0,360.5 494.7,358.0 499.9,349.7 505.2,352.2" fill="#00cff7"/><polygon points="495.5,368.1 490.1,365.5 494.7,358.0 500.0,360.5" fill="#00c6f7"/><polygon points="490.3,376.3 484.9,373.8 490.1,365.5 495.5,368.1" fill="#00bef7"/><polygon points="485.7,384.4 480.4,382.0 484.9,373.8 490.3,376.3" fill="#00b5f7"/><polygon points="480.5,392.9 475.2,390.5 480.4,382.0 485.7,384.4" fill="#00abf7"/><polygon points="476.0,401.2 470.6,398.8 475.2,390.5 480.5,392.9" fill="#00a2f7"/><polygon points="470.1,410.6 464.7,408.2 470.6,398.8 476.0,401.2" fill="#0098f7"/><polygon points="466.2,417.6 460.8,415.3 464.7,408.2 470.1,410.6" fill="#008df7"/><polygon points="456.5,434.0 451.1,431.6 460.8,415.3 466.2,417.6" fill="#0084f7"/><polygon points="446.7,447.0 441.3,444.6 451.1,431.6 456.5,434.0" fill="#006ff7"/><polygon points="436.9,460.9 431.6,458.5 441.3,444.6 446.7,447.0" fill="#0061f7"/><polygon points="427.2,473.1 421.8,470.8 431.6,458.5 436.9,460.9" fill="#0051f7"/><polygon points="417.4,487.9 412.0,485.6 421.8,470.8 427.2,473.1" fill="#0045f7"/><polygon points="407.7,499.7 402.3,497.5 412.0,485.6 417.4,487.9" fill="#002ff7"/><polygon points="397.9,510.6 392.5,508.4 402.3,497.5 407.7,499.7" fill="#0021f7"/><polygon points="390.7,519.3 385.4,517.1 392.5,508.4 397.9,510.6" fill="#0014f7"/><polygon points="549.0,255.7 543.6,262.6 552.7,218.2 558.1,209.9" fill="#00f254"/><polygon points="539.2,295.2 533.9,299.4 543.6,262.6 549.0,255.7" fill="#00f298"/><polygon points="532.7,316.7 527.4,315.9 533.9,299.4 539.2,295.2" fill="#00f2d2"/><polygon points="529.5,326.3 524.1,323.6 527.4,315.9 532.7,316.7" fill="#00f2f2"/><polygon points="523.6,337.1 518.3,334.5 524.1,323.6 529.5,326.3" fill="#00e9f7"/><polygon points="519.7,341.7 514.4,339.2 518.3,334.5 523.6,337.1" fill="#00ddf7"/><polygon points="514.5,349.1 509.2,346.6 514.4,339.2 519.7,341.7" fill="#00d9f7"/><polygon points="510.6,354.7 505.2,352.2 509.2,346.6 514.5,349.1" fill="#00d3f7"/><polygon points="505.4,363.0 500.0,360.5 505.2,352.2 510.6,354.7" fill="#00cef7"/><polygon points="500.9,370.6 495.5,368.1 500.0,360.5 505.4,363.0" fill="#00c5f7"/><polygon points="495.7,378.8 490.3,376.3 495.5,368.1 500.9,370.6" fill="#00bef7"/><polygon points="491.1,386.9 485.7,384.4 490.3,376.3 495.7,378.8" fill="#00b5f7"/><polygon points="485.9,395.3 480.5,392.9 485.7,384.4 491.1,386.9" fill="#00abf7"/><polygon points="481.3,403.6 476.0,401.2 480.5,392.9 485.9,395.3" fill="#00a1f7"/><polygon points="475.5,413.0 470.1,410.6 476.0,401.2 481.3,403.6" fill="#0098f7"/><polygon points="471.6,420.0 466.2,417.6 470.1,410.6 475.5,413.0" fill="#008cf7"/><polygon points="461.8,436.3 456.5,434.0 466.2,417.6 471.6,420.0" fill="#0083f7"/><polygon points="452.1,449.3 446.7,447.0 456.5,434.0 461.8,436.3" fill="#006ff7"/><polygon points="442.3,463.2 436.9,460.9 446.7,447.0 452.1,449.3" fill="#0061f7"/><polygon points="432.5,475.4 427.2,473.1 436.9,460.9 442.3,463.2" fill="#0050f7"/><polygon points="422.8,490.0 417.4,487.9 427.2,473.1 432.5,475.4" fill="#0044f7"/><polygon points="413.0,501.9 407.7,499.7 417.4,487.9 422.8,490.0" fill="#002ff7"/><polygon points="403.3,512.8 397.9,510.6 407.7,499.7 413.0,501.9" fill="#0021f7"/><polygon points="396.1,521.4 390.7,519.3 397.9,510.6 403.3,512.8" fill="#0014f7"/><polygon points="553.3,262.6 549.0,255.7 558.1,209.9 562.4,216.0" fill="#00f254"/><polygon points="543.5,299.2 539.2,295.2 549.0,255.7 553.3,262.6" fill="#00f298"/><polygon points="537.0,321.1 532.7,316.7 539.2,295.2 543.5,299.2" fill="#00f2d2"/><polygon points="533.8,332.8 529.5,326.3 532.7,316.7 537.0,321.1" fill="#00f2f2"/><polygon points="527.9,343.4 523.6,337.1 529.5,326.3 533.8,332.8" fill="#00e7f7"/><polygon points="524.0,347.9 519.7,341.7 523.6,337.1 527.9,343.4" fill="#00dcf7"/><polygon points="518.8,355.3 514.5,349.1 519.7,341.7 524.0,347.9" fill="#00d9f7"/><polygon points="514.9,360.9 510.6,354.7 514.5,349.1 518.8,355.3" fill="#00d2f7"/><polygon points="509.7,369.0 505.4,363.0 510.6,354.7 514.9,360.9" fill="#00cdf7"/><polygon points="505.2,376.5 500.9,370.6 505.4,363.0 509.7,369.0" fill="#00c5f7"/><polygon points="499.9,384.5 495.7,378.8 500.9,370.6 505.2,376.5" fill="#00bdf7"/><polygon points="495.4,392.3 491.1,386.9 495.7,378.8 499.9,384.5" fill="#00b4f7"/><polygon points="490.2,400.3 485.9,395.3 491.1,386.9 495.4,392.3" fill="#00abf7"/><polygon points="485.6,408.2 481.3,403.6 485.9,395.3 490.2,400.3" fill="#00a1f7"/><polygon points="479.8,417.3 475.5,413.0 481.3,403.6 485.6,408.2" fill="#0097f7"/><polygon points="475.9,423.7 471.6,420.0 475.5,413.0 479.8,417.3" fill="#008cf7"/><polygon points="466.1,440.0 461.8,436.3 471.6,420.0 475.9,423.7" fill="#0083f7"/><polygon points="456.4,453.0 452.1,449.3 461.8,436.3 466.1,440.0" fill="#006ef7"/><polygon points="446.6,466.9 442.3,463.2 452.1,449.3 456.4,453.0" fill="#0060f7"/><polygon points="436.8,478.7 432.5,475.4 442.3,463.2 446.6,466.9" fill="#0050f7"/><polygon points="427.1,492.1 422.8,490.0 432.5,475.4 436.8,478.7" fill="#0044f7"/><polygon points="417.3,503.6 413.0,501.9 422.8,490.0 427.1,492.1" fill="#002ff7"/><polygon points="407.6,514.6 403.3,512.8 413.0,501.9 417.3,503.6" fill="#0021f7"/><polygon points="400.4,523.0 396.1,521.4 403.3,512.8 407.6,514.6" fill="#0014f7"/><polygon points="557.6,271.7 553.3,262.6 562.4,216.0 566.7,233.3" fill="#00f25c"/><polygon points="547.8,309.4 543.5,299.2 553.3,262.6 557.6,271.7" fill="#00f2a1"/><polygon points="541.3,328.8 537.0,321.1 543.5,299.2 547.8,309.4" fill="#00f2d7"/><polygon points="538.1,339.3 533.8,332.8 537.0,321.1 541.3,328.8" fill="#00f0f7"/><polygon points="532.2,350.7 527.9,343.4 533.8,332.8 538.1,339.3" fill="#00def7"/><polygon points="528.3,355.2 524.0,347.9 527.9,343.4 532.2,350.7" fill="#00d2f7"/><polygon points="523.1,362.5 518.8,355.3 524.0,347.9 528.3,355.2" fill="#00d0f7"/><polygon points="519.2,368.1 514.9,360.9 518.8,355.3 523.1,362.5" fill="#00c9f7"/><polygon points="514.0,376.1 509.7,369.0 514.9,360.9 519.2,368.1" fill="#00c4f7"/><polygon points="509.5,383.5 505.2,376.5 509.7,369.0 514.0,376.1" fill="#00bcf7"/><polygon points="504.2,391.0 499.9,384.5 505.2,376.5 509.5,383.5" fill="#00b3f7"/><polygon points="499.7,398.5 495.4,392.3 499.9,384.5 504.2,391.0" fill="#00abf7"/><polygon points="494.5,405.9 490.2,400.3 495.4,392.3 499.7,398.5" fill="#00a2f7"/><polygon points="489.9,413.5 485.6,408.2 490.2,400.3 494.5,405.9" fill="#0099f7"/><polygon points="484.1,422.1 479.8,417.3 485.6,408.2 489.9,413.5" fill="#0090f7"/><polygon points="480.2,427.9 475.9,423.7 479.8,417.3 484.1,422.1" fill="#0085f7"/><polygon points="470.4,444.2 466.1,440.0 475.9,423.7 480.2,427.9" fill="#007ef7"/><polygon points="460.7,457.2 456.4,453.0 466.1,440.0 470.4,444.2" fill="#0069f7"/><polygon points="450.9,471.0 446.6,466.9 456.4,453.0 460.7,457.2" fill="#005cf7"/><polygon points="441.1,482.3 436.8,478.7 446.6,466.9 450.9,471.0" fill="#004bf7"/><polygon points="431.4,494.2 427.1,492.1 436.8,478.7 441.1,482.3" fill="#003ff7"/><polygon points="421.6,505.4 417.3,503.6 427.1,492.1 431.4,494.2" fill="#002ef7"/><polygon points="411.9,516.4 407.6,514.6 417.3,503.6 421.6,505.4" fill="#0021f7"/><polygon points="404.7,524.7 400.4,523.0 407.6,514.6 411.9,516.4" fill="#0014f7"/><polygon points="561.9,279.2 557.6,271.7 566.7,233.3 571.0,247.2" fill="#00f277"/><polygon points="552.1,319.7 547.8,309.4 557.6,271.7 561.9,279.2" fill="#00f2ae"/><polygon points="545.6,340.6 541.3,328.8 547.8,309.4 552.1,319.7" fill="#00f2e7"/><polygon points="542.4,348.3 538.1,339.3 541.3,328.8 545.6,340.6" fill="#00e4f7"/><polygon points="536.5,358.6 532.2,350.7 538.1,339.3 542.4,348.3" fill="#00d4f7"/><polygon points="532.6,362.9 528.3,355.2 532.2,350.7 536.5,358.6" fill="#00c7f7"/><polygon points="527.4,370.2 523.1,362.5 528.3,355.2 532.6,362.9" fill="#00c4f7"/><polygon points="523.5,375.8 519.2,368.1 523.1,362.5 527.4,370.2" fill="#00bef7"/><polygon points="518.3,383.6 514.0,376.1 519.2,368.1 523.5,375.8" fill="#00b8f7"/><polygon points="513.7,390.9 509.5,383.5 514.0,376.1 518.3,383.6" fill="#00b0f7"/><polygon points="508.5,398.1 504.2,391.0 509.5,383.5 513.7,390.9" fill="#00a8f7"/><polygon points="504.0,405.2 499.7,398.5 504.2,391.0 508.5,398.1" fill="#00a0f7"/><polygon points="498.8,412.0 494.5,405.9 499.7,398.5 504.0,405.2" fill="#0098f7"/><polygon points="494.2,419.1 489.9,413.5 494.5,405.9 498.8,412.0" fill="#0091f7"/><polygon points="488.4,427.2 484.1,422.1 489.9,413.5 494.2,419.1" fill="#0087f7"/><polygon points="484.5,432.4 480.2,427.9 484.1,422.1 488.4,427.2" fill="#007ef7"/><polygon points="474.7,448.7 470.4,444.2 480.2,427.9 484.5,432.4" fill="#0077f7"/><polygon points="465.0,461.7 460.7,457.2 470.4,444.2 474.7,448.7" fill="#0062f7"/><polygon points="455.2,475.3 450.9,471.0 460.7,457.2 465.0,461.7" fill="#0054f7"/><polygon points="445.4,486.1 441.1,482.3 450.9,471.0 455.2,475.3" fill="#0044f7"/><polygon points="435.7,496.3 431.4,494.2 441.1,482.3 445.4,486.1" fill="#0039f7"/><polygon points="425.9,507.1 421.6,505.4 431.4,494.2 435.7,496.3" fill="#002cf7"/><polygon points="416.2,518.2 411.9,516.4 421.6,505.4 425.9,507.1" fill="#0021f7"/><polygon points="409.0,526.4 404.7,524.7 411.9,516.4 416.2,518.2" fill="#0014f7"/><polygon points="566.2,285.0 561.9,279.2 571.0,247.2 575.3,253.5" fill="#00f28c"/><polygon points="556.4,329.0 552.1,319.7 561.9,279.2 566.2,285.0" fill="#00f2b9"/><polygon points="549.9,347.7 545.6,340.6 552.1,319.7 556.4,329.0" fill="#00f0f7"/><polygon points="546.7,354.5 542.4,348.3 545.6,340.6 549.9,347.7" fill="#00d0f7"/><polygon points="540.8,363.5 536.5,358.6 542.4,348.3 546.7,354.5" fill="#00c5f7"/><polygon points="536.9,367.8 532.6,362.9 536.5,358.6 540.8,363.5" fill="#00baf7"/><polygon points="531.7,375.0 527.4,370.2 532.6,362.9 536.9,367.8" fill="#00b7f7"/><polygon points="527.8,380.7 523.5,375.8 527.4,370.2 531.7,375.0" fill="#00b0f7"/><polygon points="522.6,388.4 518.3,383.6 523.5,375.8 527.8,380.7" fill="#00abf7"/><polygon points="518.0,395.6 513.7,390.9 518.3,383.6 522.6,388.4" fill="#00a3f7"/><polygon points="512.8,402.6 508.5,398.1 513.7,390.9 518.0,395.6" fill="#009bf7"/><polygon points="508.3,409.6 504.0,405.2 508.5,398.1 512.8,402.6" fill="#0095f7"/><polygon points="503.1,416.0 498.8,412.0 504.0,405.2 508.3,409.6" fill="#008cf7"/><polygon points="498.5,422.9 494.2,419.1 498.8,412.0 503.1,416.0" fill="#0086f7"/><polygon points="492.7,430.7 488.4,427.2 494.2,419.1 498.5,422.9" fill="#007ef7"/><polygon points="488.8,435.5 484.5,432.4 488.4,427.2 492.7,430.7" fill="#0076f7"/><polygon points="479.0,451.8 474.7,448.7 484.5,432.4 488.8,435.5" fill="#0071f7"/><polygon points="469.2,464.9 465.0,461.7 474.7,448.7 479.0,451.8" fill="#005bf7"/><polygon points="459.5,478.4 455.2,475.3 465.0,461.7 469.2,464.9" fill="#004cf7"/><polygon points="449.7,488.9 445.4,486.1 455.2,475.3 459.5,478.4" fill="#003bf7"/><polygon points="440.0,498.2 435.7,496.3 445.4,486.1 449.7,488.9" fill="#0033f7"/><polygon points="430.2,508.9 425.9,507.1 435.7,496.3 440.0,498.2" fill="#002bf7"/><polygon points="420.5,519.9 416.2,518.2 425.9,507.1 430.2,508.9" fill="#0021f7"/><polygon points="413.3,528.1 409.0,526.4 416.2,518.2 420.5,519.9" fill="#0013f7"/><polygon points="570.5,288.3 566.2,285.0 575.3,253.5 579.6,259.5" fill="#00f294"/><polygon points="560.7,334.0 556.4,329.0 566.2,285.0 570.5,288.3" fill="#00f2c1"/><polygon points="554.2,349.4 549.9,347.7 556.4,329.0 560.7,334.0" fill="#00e1f7"/><polygon points="551.0,355.1 546.7,354.5 549.9,347.7 554.2,349.4" fill="#00c5f7"/><polygon points="545.1,362.1 540.8,363.5 546.7,354.5 551.0,355.1" fill="#00bef7"/><polygon points="541.2,366.5 536.9,367.8 540.8,363.5 545.1,362.1" fill="#00baf7"/><polygon points="536.0,373.7 531.7,375.0 536.9,367.8 541.2,366.5" fill="#00b7f7"/><polygon points="532.1,379.3 527.8,380.7 531.7,375.0 536.0,373.7" fill="#00b0f7"/><polygon points="526.9,387.1 522.6,388.4 527.8,380.7 532.1,379.3" fill="#00abf7"/><polygon points="522.3,394.4 518.0,395.6 522.6,388.4 526.9,387.1" fill="#00a3f7"/><polygon points="517.1,401.6 512.8,402.6 518.0,395.6 522.3,394.4" fill="#009bf7"/><polygon points="512.6,408.7 508.3,409.6 512.8,402.6 517.1,401.6" fill="#0095f7"/><polygon points="507.4,415.5 503.1,416.0 508.3,409.6 512.6,408.7" fill="#008cf7"/><polygon points="502.8,422.6 498.5,422.9 503.1,416.0 507.4,415.5" fill="#0086f7"/><polygon points="497.0,430.8 492.7,430.7 498.5,422.9 502.8,422.6" fill="#007ef7"/><polygon points="493.1,435.9 488.8,435.5 492.7,430.7 497.0,430.8" fill="#0075f7"/><polygon points="483.3,452.1 479.0,451.8 488.8,435.5 493.1,435.9" fill="#0071f7"/><polygon points="473.5,465.2 469.2,464.9 479.0,451.8 483.3,452.1" fill="#005bf7"/><polygon points="463.8,478.8 459.5,478.4 469.2,464.9 473.5,465.2" fill="#004cf7"/><polygon points="454.0,489.6 449.7,488.9 459.5,478.4 463.8,478.8" fill="#003bf7"/><polygon points="444.3,499.8 440.0,498.2 449.7,488.9 454.0,489.6" fill="#0033f7"/><polygon points="434.5,510.6 430.2,508.9 440.0,498.2 444.3,499.8" fill="#002bf7"/><polygon points="424.7,521.7 420.5,519.9 430.2,508.9 434.5,510.6" fill="#0021f7"/><polygon points="417.6,529.7 413.3,528.1 420.5,519.9 424.7,521.7" fill="#0013f7"/><polygon points="574.8,289.0 570.5,288.3 579.6,259.5 583.9,259.5" fill="#00f299"/><polygon points="565.0,333.2 560.7,334.0 570.5,288.3 574.8,289.0" fill="#00f2c2"/><polygon points="558.5,347.6 554.2,349.4 560.7,334.0 565.0,333.2" fill="#00dff7"/><polygon points="555.3,353.0 551.0,355.1 554.2,349.4 558.5,347.6" fill="#00cdf7"/><polygon points="549.4,360.9 545.1,362.1 551.0,355.1 555.3,353.0" fill="#00c6f7"/><polygon points="545.5,365.3 541.2,366.5 545.1,362.1 549.4,360.9" fill="#00bff7"/><polygon points="540.3,372.6 536.0,373.7 541.2,366.5 545.5,365.3" fill="#00bef7"/><polygon points="536.4,378.2 532.1,379.3 536.0,373.7 540.3,372.6" fill="#00b7f7"/><polygon points="531.2,386.1 526.9,387.1 532.1,379.3 536.4,378.2" fill="#00b1f7"/><polygon points="526.6,393.4 522.3,394.4 526.9,387.1 531.2,386.1" fill="#00aaf7"/><polygon points="521.4,400.8 517.1,401.6 522.3,394.4 526.6,393.4" fill="#00a1f7"/><polygon points="516.9,408.1 512.6,408.7 517.1,401.6 521.4,400.8" fill="#009af7"/><polygon points="511.7,415.2 507.4,415.5 512.6,408.7 516.9,408.1" fill="#0092f7"/><polygon points="507.1,422.5 502.8,422.6 507.4,415.5 511.7,415.2" fill="#008bf7"/><polygon points="501.3,430.9 497.0,430.8 502.8,422.6 507.1,422.5" fill="#0083f7"/><polygon points="497.4,436.3 493.1,435.9 497.0,430.8 501.3,430.9" fill="#007af7"/><polygon points="487.6,452.6 483.3,452.1 493.1,435.9 497.4,436.3" fill="#0074f7"/><polygon points="477.8,465.6 473.5,465.2 483.3,452.1 487.6,452.6" fill="#005ff7"/><polygon points="468.1,479.3 463.8,478.8 473.5,465.2 477.8,465.6" fill="#0050f7"/><polygon points="458.3,490.3 454.0,489.6 463.8,478.8 468.1,479.3" fill="#003ff7"/><polygon points="448.6,501.3 444.3,499.8 454.0,489.6 458.3,490.3" fill="#0036f7"/><polygon points="438.8,512.3 434.5,510.6 444.3,499.8 448.6,501.3" fill="#002cf7"/><polygon points="429.0,523.4 424.7,521.7 434.5,510.6 438.8,512.3" fill="#0021f7"/><polygon points="421.9,531.4 417.6,529.7 424.7,521.7 429.0,523.4" fill="#0014f7"/><polygon points="579.1,291.8 574.8,289.0 583.9,259.5 588.2,263.0" fill="#00f299"/><polygon points="569.3,333.4 565.0,333.2 574.8,289.0 579.1,291.8" fill="#00f2c2"/><polygon points="562.8,344.1 558.5,347.6 565.0,333.2 569.3,333.4" fill="#00e3f7"/><polygon points="559.6,349.0 555.3,353.0 558.5,347.6 562.8,344.1" fill="#00d7f7"/><polygon points="553.7,354.8 549.4,360.9 555.3,353.0 559.6,349.0" fill="#00d2f7"/><polygon points="549.8,360.2 545.5,365.3 549.4,360.9 553.7,354.8" fill="#00d1f7"/><polygon points="544.6,366.8 540.3,372.6 545.5,365.3 549.8,360.2" fill="#00ccf7"/><polygon points="540.7,372.4 536.4,378.2 540.3,372.6 544.6,366.8" fill="#00c7f7"/><polygon points="535.5,380.6 531.2,386.1 536.4,378.2 540.7,372.4" fill="#00c1f7"/><polygon points="530.9,388.9 526.6,393.4 531.2,386.1 535.5,380.6" fill="#00b9f7"/><polygon points="525.7,398.8 521.4,400.8 526.6,393.4 530.9,388.9" fill="#00aff7"/><polygon points="521.2,409.1 516.9,408.1 521.4,400.8 525.7,398.8" fill="#00a3f7"/><polygon points="516.0,419.4 511.7,415.2 516.9,408.1 521.2,409.1" fill="#0094f7"/><polygon points="511.4,426.1 507.1,422.5 511.7,415.2 516.0,419.4" fill="#008bf7"/><polygon points="505.6,434.3 501.3,430.9 507.1,422.5 511.4,426.1" fill="#0083f7"/><polygon points="501.7,439.5 497.4,436.3 501.3,430.9 505.6,434.3" fill="#007af7"/><polygon points="491.9,452.8 487.6,452.6 497.4,436.3 501.7,439.5" fill="#0074f7"/><polygon points="482.1,466.6 477.8,465.6 487.6,452.6 491.9,452.8" fill="#0062f7"/><polygon points="472.4,480.9 468.1,479.3 477.8,465.6 482.1,466.6" fill="#0052f7"/><polygon points="462.6,491.9 458.3,490.3 468.1,479.3 472.4,480.9" fill="#0040f7"/><polygon points="452.9,503.0 448.6,501.3 458.3,490.3 462.6,491.9" fill="#0037f7"/><polygon points="443.1,514.0 438.8,512.3 448.6,501.3 452.9,503.0" fill="#002cf7"/><polygon points="433.3,525.0 429.0,523.4 438.8,512.3 443.1,514.0" fill="#0021f7"/><polygon points="426.2,533.1 421.9,531.4 429.0,523.4 433.3,525.0" fill="#0014f7"/><polygon points="583.4,288.0 579.1,291.8 588.2,263.0 592.5,254.1" fill="#00f288"/><polygon points="573.6,331.6 569.3,333.4 579.1,291.8 583.4,288.0" fill="#00f2b9"/><polygon points="567.1,344.7 562.8,344.1 569.3,333.4 573.6,331.6" fill="#00e9f7"/><polygon points="563.9,351.2 559.6,349.0 562.8,344.1 567.1,344.7" fill="#00d9f7"/><polygon points="558.0,358.1 553.7,354.8 559.6,349.0 563.9,351.2" fill="#00d2f7"/><polygon points="554.1,362.5 549.8,360.2 553.7,354.8 558.0,358.1" fill="#00d1f7"/><polygon points="548.9,368.5 544.6,366.8 549.8,360.2 554.1,362.5" fill="#00ccf7"/><polygon points="545.0,373.9 540.7,372.4 544.6,366.8 548.9,368.5" fill="#00c7f7"/><polygon points="539.8,381.8 535.5,380.6 540.7,372.4 545.0,373.9" fill="#00c2f7"/><polygon points="535.2,389.2 530.9,388.9 535.5,380.6 539.8,381.8" fill="#00bbf7"/><polygon points="530.0,398.9 525.7,398.8 530.9,388.9 535.2,389.2" fill="#00b2f7"/><polygon points="525.5,409.1 521.2,409.1 525.7,398.8 530.0,398.9" fill="#00a7f7"/><polygon points="520.3,421.3 516.0,419.4 521.2,409.1 525.5,409.1" fill="#0098f7"/><polygon points="515.7,431.0 511.4,426.1 516.0,419.4 520.3,421.3" fill="#0085f7"/><polygon points="509.9,439.3 505.6,434.3 511.4,426.1 515.7,431.0" fill="#007ef7"/><polygon points="506.0,445.4 501.7,439.5 505.6,434.3 509.9,439.3" fill="#0075f7"/><polygon points="496.2,456.7 491.9,452.8 501.7,439.5 506.0,445.4" fill="#0071f7"/><polygon points="486.4,470.3 482.1,466.6 491.9,452.8 496.2,456.7" fill="#0062f7"/><polygon points="476.7,481.5 472.4,480.9 482.1,466.6 486.4,470.3" fill="#0052f7"/><polygon points="466.9,492.7 462.6,491.9 472.4,480.9 476.7,481.5" fill="#0044f7"/><polygon points="457.2,503.9 452.9,503.0 462.6,491.9 466.9,492.7" fill="#0039f7"/><polygon points="447.4,515.1 443.1,514.0 452.9,503.0 457.2,503.9" fill="#002ff7"/><polygon points="437.6,526.3 433.3,525.0 443.1,514.0 447.4,515.1" fill="#0024f7"/><polygon points="430.5,534.5 426.2,533.1 433.3,525.0 437.6,526.3" fill="#0016f7"/><polygon points="587.7,281.6 583.4,288.0 592.5,254.1 596.8,219.0" fill="#00f249"/><polygon points="577.9,332.1 573.6,331.6 583.4,288.0 587.7,281.6" fill="#00f2aa"/><polygon points="571.4,346.0 567.1,344.7 573.6,331.6 577.9,332.1" fill="#00ecf7"/><polygon points="568.2,351.8 563.9,351.2 567.1,344.7 571.4,346.0" fill="#00daf7"/><polygon points="562.3,357.9 558.0,358.1 563.9,351.2 568.2,351.8" fill="#00d4f7"/><polygon points="558.4,362.8 554.1,362.5 558.0,358.1 562.3,357.9" fill="#00d1f7"/><polygon points="553.2,369.5 548.9,368.5 554.1,362.5 558.4,362.8" fill="#00cef7"/><polygon points="549.3,375.0 545.0,373.9 548.9,368.5 553.2,369.5" fill="#00c8f7"/><polygon points="544.1,384.2 539.8,381.8 545.0,373.9 549.3,375.0" fill="#00c3f7"/><polygon points="539.5,392.2 535.2,389.2 539.8,381.8 544.1,384.2" fill="#00bbf7"/><polygon points="534.3,401.3 530.0,398.9 535.2,389.2 539.5,392.2" fill="#00b2f7"/><polygon points="529.8,411.6 525.5,409.1 530.0,398.9 534.3,401.3" fill="#00a7f7"/><polygon points="524.6,426.3 520.3,421.3 525.5,409.1 529.8,411.6" fill="#0098f7"/><polygon points="520.0,433.5 515.7,431.0 520.3,421.3 524.6,426.3" fill="#0085f7"/><polygon points="514.2,442.2 509.9,439.3 515.7,431.0 520.0,433.5" fill="#0076f7"/><polygon points="510.2,448.5 506.0,445.4 509.9,439.3 514.2,442.2" fill="#006df7"/><polygon points="500.5,460.8 496.2,456.7 506.0,445.4 510.2,448.5" fill="#0066f7"/><polygon points="490.7,473.4 486.4,470.3 496.2,456.7 500.5,460.8" fill="#005df7"/><polygon points="481.0,484.4 476.7,481.5 486.4,470.3 490.7,473.4" fill="#004df7"/><polygon points="471.2,495.4 466.9,492.7 476.7,481.5 481.0,484.4" fill="#0044f7"/><polygon points="461.5,506.4 457.2,503.9 466.9,492.7 471.2,495.4" fill="#0039f7"/><polygon points="451.7,517.5 447.4,515.1 457.2,503.9 461.5,506.4" fill="#002ff7"/><polygon points="441.9,528.5 437.6,526.3 447.4,515.1 451.7,517.5" fill="#0024f7"/><polygon points="434.8,536.6 430.5,534.5 437.6,526.3 441.9,528.5" fill="#0016f7"/><polygon points="592.0,282.1 587.7,281.6 596.8,219.0 601.1,219.2" fill="#00f246"/><polygon points="582.2,335.1 577.9,332.1 587.7,281.6 592.0,282.1" fill="#00f2a7"/><polygon points="575.7,346.9 571.4,346.0 577.9,332.1 582.2,335.1" fill="#00ecf7"/><polygon points="572.4,352.7 568.2,351.8 571.4,346.0 575.7,346.9" fill="#00dcf7"/><polygon points="566.6,360.7 562.3,357.9 568.2,351.8 572.4,352.7" fill="#00d5f7"/><polygon points="562.7,367.0 558.4,362.8 562.3,357.9 566.6,360.7" fill="#00d1f7"/><polygon points="557.5,374.5 553.2,369.5 558.4,362.8 562.7,367.0" fill="#00cef7"/><polygon points="553.6,380.1 549.3,375.0 553.2,369.5 557.5,374.5" fill="#00c8f7"/><polygon points="548.4,390.6 544.1,384.2 549.3,375.0 553.6,380.1" fill="#00c3f7"/><polygon points="543.8,400.4 539.5,392.2 544.1,384.2 548.4,390.6" fill="#00b9f7"/><polygon points="538.6,412.0 534.3,401.3 539.5,392.2 543.8,400.4" fill="#00aff7"/><polygon points="534.1,422.8 529.8,411.6 534.3,401.3 538.6,412.0" fill="#00a5f7"/><polygon points="528.9,431.4 524.6,426.3 529.8,411.6 534.1,422.8" fill="#0096f7"/><polygon points="524.3,438.1 520.0,433.5 524.6,426.3 528.9,431.4" fill="#007df7"/><polygon points="518.4,446.2 514.2,442.2 520.0,433.5 524.3,438.1" fill="#0074f7"/><polygon points="514.5,450.5 510.2,448.5 514.2,442.2 518.4,446.2" fill="#006bf7"/><polygon points="504.8,463.0 500.5,460.8 510.2,448.5 514.5,450.5" fill="#0062f7"/><polygon points="495.0,475.0 490.7,473.4 500.5,460.8 504.8,463.0" fill="#0056f7"/><polygon points="485.3,486.5 481.0,484.4 490.7,473.4 495.0,475.0" fill="#004af7"/><polygon points="475.5,497.5 471.2,495.4 481.0,484.4 485.3,486.5" fill="#0040f7"/><polygon points="465.7,508.5 461.5,506.4 471.2,495.4 475.5,497.5" fill="#0037f7"/><polygon points="456.0,519.5 451.7,517.5 461.5,506.4 465.7,508.5" fill="#002cf7"/><polygon points="446.2,530.4 441.9,528.5 451.7,517.5 456.0,519.5" fill="#0021f7"/><polygon points="439.1,538.5 434.8,536.6 441.9,528.5 446.2,530.4" fill="#0014f7"/><polygon points="596.3,284.5 592.0,282.1 601.1,219.2 605.4,219.1" fill="#00f243"/><polygon points="586.5,339.7 582.2,335.1 592.0,282.1 596.3,284.5" fill="#00f2a7"/><polygon points="580.0,353.2 575.7,346.9 582.2,335.1 586.5,339.7" fill="#00e9f7"/><polygon points="576.7,359.7 572.4,352.7 575.7,346.9 580.0,353.2" fill="#00dcf7"/><polygon points="570.9,369.6 566.6,360.7 572.4,352.7 576.7,359.7" fill="#00d5f7"/><polygon points="567.0,374.5 562.7,367.0 566.6,360.7 570.9,369.6" fill="#00cff7"/><polygon points="561.8,383.4 557.5,374.5 562.7,367.0 567.0,374.5" fill="#00c9f7"/><polygon points="557.9,389.6 553.6,380.1 557.5,374.5 561.8,383.4" fill="#00c1f7"/><polygon points="552.7,398.6 548.4,390.6 553.6,380.1 557.9,389.6" fill="#00bdf7"/><polygon points="548.1,407.3 543.8,400.4 548.4,390.6 552.7,398.6" fill="#00aff7"/><polygon points="542.9,416.6 538.6,412.0 543.8,400.4 548.1,407.3" fill="#00a1f7"/><polygon points="538.4,425.4 534.1,422.8 538.6,412.0 542.9,416.6" fill="#0090f7"/><polygon points="533.2,434.2 528.9,431.4 534.1,422.8 538.4,425.4" fill="#0080f7"/><polygon points="528.6,441.8 524.3,438.1 528.9,431.4 533.2,434.2" fill="#0074f7"/><polygon points="522.7,449.8 518.4,446.2 524.3,438.1 528.6,441.8" fill="#006df7"/><polygon points="518.8,454.5 514.5,450.5 518.4,446.2 522.7,449.8" fill="#0064f7"/><polygon points="509.1,466.3 504.8,463.0 514.5,450.5 518.8,454.5" fill="#0061f7"/><polygon points="499.3,477.8 495.0,475.0 504.8,463.0 509.1,466.3" fill="#0055f7"/><polygon points="489.6,489.1 485.3,486.5 495.0,475.0 499.3,477.8" fill="#004af7"/><polygon points="479.8,500.4 475.5,497.5 485.3,486.5 489.6,489.1" fill="#003ff7"/><polygon points="470.0,511.2 465.7,508.5 475.5,497.5 479.8,500.4" fill="#0035f7"/><polygon points="460.3,522.0 456.0,519.5 465.7,508.5 470.0,511.2" fill="#002bf7"/><polygon points="450.5,532.8 446.2,530.4 456.0,519.5 460.3,522.0" fill="#0020f7"/><polygon points="443.4,540.6 439.1,538.5 446.2,530.4 450.5,532.8" fill="#0013f7"/><polygon points="600.6,285.9 596.3,284.5 605.4,219.1 609.7,220.9" fill="#00f243"/><polygon points="590.8,343.5 586.5,339.7 596.3,284.5 600.6,285.9" fill="#00f2a8"/><polygon points="584.3,356.8 580.0,353.2 586.5,339.7 590.8,343.5" fill="#00e4f7"/><polygon points="581.0,362.2 576.7,359.7 580.0,353.2 584.3,356.8" fill="#00d2f7"/><polygon points="575.2,370.6 570.9,369.6 576.7,359.7 581.0,362.2" fill="#00cbf7"/><polygon points="571.3,376.4 567.0,374.5 570.9,369.6 575.2,370.6" fill="#00c1f7"/><polygon points="566.1,384.0 561.8,383.4 567.0,374.5 571.3,376.4" fill="#00bdf7"/><polygon points="562.2,390.1 557.9,389.6 561.8,383.4 566.1,384.0" fill="#00b5f7"/><polygon points="557.0,398.3 552.7,398.6 557.9,389.6 562.2,390.1" fill="#00aef7"/><polygon points="552.4,407.6 548.1,407.3 552.7,398.6 557.0,398.3" fill="#00a6f7"/><polygon points="547.2,417.6 542.9,416.6 548.1,407.3 552.4,407.6" fill="#0098f7"/><polygon points="542.7,425.9 538.4,425.4 542.9,416.6 547.2,417.6" fill="#008bf7"/><polygon points="537.4,434.8 533.2,434.2 538.4,425.4 542.7,425.9" fill="#0081f7"/><polygon points="532.9,442.6 528.6,441.8 533.2,434.2 537.4,434.8" fill="#0075f7"/><polygon points="527.0,450.3 522.7,449.8 528.6,441.8 532.9,442.6" fill="#006bf7"/><polygon points="523.1,455.1 518.8,454.5 522.7,449.8 527.0,450.3" fill="#0063f7"/><polygon points="513.4,466.5 509.1,466.3 518.8,454.5 523.1,455.1" fill="#005ff7"/><polygon points="503.6,478.6 499.3,477.8 509.1,466.3 513.4,466.5" fill="#0055f7"/><polygon points="493.9,489.6 489.6,489.1 499.3,477.8 503.6,478.6" fill="#004af7"/><polygon points="484.1,500.6 479.8,500.4 489.6,489.1 493.9,489.6" fill="#0040f7"/><polygon points="474.3,511.7 470.0,511.2 479.8,500.4 484.1,500.6" fill="#0037f7"/><polygon points="464.6,522.7 460.3,522.0 470.0,511.2 474.3,511.7" fill="#002cf7"/><polygon points="454.8,533.7 450.5,532.8 460.3,522.0 464.6,522.7" fill="#0021f7"/><polygon points="447.7,541.8 443.4,540.6 450.5,532.8 454.8,533.7" fill="#0014f7"/><polygon points="604.9,287.4 600.6,285.9 609.7,220.9 614.0,222.6" fill="#00f243"/><polygon points="595.1,347.2 590.8,343.5 600.6,285.9 604.9,287.4" fill="#00f2a8"/><polygon points="588.6,361.9 584.3,356.8 590.8,343.5 595.1,347.2" fill="#00e0f7"/><polygon points="585.3,367.3 581.0,362.2 584.3,356.8 588.6,361.9" fill="#00cff7"/><polygon points="579.5,376.7 575.2,370.6 581.0,362.2 585.3,367.3" fill="#00c9f7"/><polygon points="575.6,382.3 571.3,376.4 575.2,370.6 579.5,376.7" fill="#00c1f7"/><polygon points="570.4,389.7 566.1,384.0 571.3,376.4 575.6,382.3" fill="#00bcf7"/><polygon points="566.5,395.4 562.2,390.1 566.1,384.0 570.4,389.7" fill="#00b5f7"/><polygon points="561.3,403.0 557.0,398.3 562.2,390.1 566.5,395.4" fill="#00aef7"/><polygon points="556.7,410.6 552.4,407.6 557.0,398.3 561.3,403.0" fill="#00a6f7"/><polygon points="551.5,418.8 547.2,417.6 552.4,407.6 556.7,410.6" fill="#0098f7"/><polygon points="547.0,426.8 542.7,425.9 547.2,417.6 551.5,418.8" fill="#008df7"/><polygon points="541.7,435.1 537.4,434.8 542.7,425.9 547.0,426.8" fill="#0083f7"/><polygon points="537.2,440.5 532.9,442.6 537.4,434.8 541.7,435.1" fill="#0078f7"/><polygon points="531.3,448.6 527.0,450.3 532.9,442.6 537.2,440.5" fill="#0074f7"/><polygon points="527.4,453.2 523.1,455.1 527.0,450.3 531.3,448.6" fill="#006cf7"/><polygon points="517.7,464.8 513.4,466.5 523.1,455.1 527.4,453.2" fill="#0068f7"/><polygon points="507.9,475.4 503.6,478.6 513.4,466.5 517.7,464.8" fill="#005ff7"/><polygon points="498.2,487.1 493.9,489.6 503.6,478.6 507.9,475.4" fill="#0057f7"/><polygon points="488.4,498.7 484.1,500.6 493.9,489.6 498.2,487.1" fill="#004cf7"/><polygon points="478.6,510.3 474.3,511.7 484.1,500.6 488.4,498.7" fill="#0042f7"/><polygon points="468.9,522.0 464.6,522.7 474.3,511.7 478.6,510.3" fill="#0037f7"/><polygon points="459.1,533.6 454.8,533.7 464.6,522.7 468.9,522.0" fill="#002af7"/><polygon points="452.0,542.2 447.7,541.8 454.8,533.7 459.1,533.6" fill="#001cf7"/><polygon points="607.0,288.2 604.9,287.4 614.0,222.6 616.1,223.5" fill="#00f243"/><polygon points="597.2,347.4 595.1,347.2 604.9,287.4 607.0,288.2" fill="#00f2a7"/><polygon points="590.7,362.4 588.6,361.9 595.1,347.2 597.2,347.4" fill="#00ddf7"/><polygon points="587.5,367.9 585.3,367.3 588.6,361.9 590.7,362.4" fill="#00c9f7"/><polygon points="581.6,377.1 579.5,376.7 585.3,367.3 587.5,367.9" fill="#00c2f7"/><polygon points="577.7,382.9 575.6,382.3 579.5,376.7 581.6,377.1" fill="#00b9f7"/><polygon points="572.5,390.6 570.4,389.7 575.6,382.3 577.7,382.9" fill="#00b3f7"/><polygon points="568.6,396.5 566.5,395.4 570.4,389.7 572.5,390.6" fill="#00acf7"/><polygon points="563.4,404.3 561.3,403.0 566.5,395.4 568.6,396.5" fill="#00a7f7"/><polygon points="558.9,411.9 556.7,410.6 561.3,403.0 563.4,404.3" fill="#009ff7"/><polygon points="553.7,420.2 551.5,418.8 556.7,410.6 558.9,411.9" fill="#0096f7"/><polygon points="549.1,427.9 547.0,426.8 551.5,418.8 553.7,420.2" fill="#008df7"/><polygon points="543.9,436.4 541.7,435.1 547.0,426.8 549.1,427.9" fill="#0083f7"/><polygon points="539.3,441.9 537.2,440.5 541.7,435.1 543.9,436.4" fill="#0078f7"/><polygon points="533.5,448.9 531.3,448.6 537.2,440.5 539.3,441.9" fill="#0074f7"/><polygon points="529.6,454.0 527.4,453.2 531.3,448.6 533.5,448.9" fill="#006ef7"/><polygon points="519.8,465.6 517.7,464.8 527.4,453.2 529.6,454.0" fill="#0068f7"/><polygon points="510.1,476.6 507.9,475.4 517.7,464.8 519.8,465.6" fill="#005ff7"/><polygon points="500.3,488.3 498.2,487.1 507.9,475.4 510.1,476.6" fill="#0057f7"/><polygon points="490.5,499.9 488.4,498.7 498.2,487.1 500.3,488.3" fill="#004cf7"/><polygon points="480.8,511.4 478.6,510.3 488.4,498.7 490.5,499.9" fill="#0042f7"/><polygon points="471.0,523.0 468.9,522.0 478.6,510.3 480.8,511.4" fill="#0037f7"/><polygon points="461.3,534.7 459.1,533.6 468.9,522.0 471.0,523.0" fill="#002af7"/><polygon points="454.1,543.2 452.0,542.2 459.1,533.6 461.3,534.7" fill="#001cf7"/><polygon points="609.2,288.4 607.0,288.2 616.1,223.5 618.3,224.3" fill="#00f243"/><polygon points="599.4,347.6 597.2,347.4 607.0,288.2 609.2,288.4" fill="#00f2a6"/><polygon points="592.9,362.9 590.7,362.4 597.2,347.4 599.4,347.6" fill="#00def7"/><polygon points="589.6,368.4 587.5,367.9 590.7,362.4 592.9,362.9" fill="#00caf7"/><polygon points="583.8,377.6 581.6,377.1 587.5,367.9 589.6,368.4" fill="#00c3f7"/><polygon points="579.9,383.5 577.7,382.9 581.6,377.1 583.8,377.6" fill="#00baf7"/><polygon points="574.7,391.6 572.5,390.6 577.7,382.9 579.9,383.5" fill="#00b4f7"/><polygon points="570.8,397.6 568.6,396.5 572.5,390.6 574.7,391.6" fill="#00abf7"/><polygon points="565.6,405.6 563.4,404.3 568.6,396.5 570.8,397.6" fill="#00a6f7"/><polygon points="561.0,413.4 558.9,411.9 563.4,404.3 565.6,405.6" fill="#009ef7"/><polygon points="555.8,421.6 553.7,420.2 558.9,411.9 561.0,413.4" fill="#0095f7"/><polygon points="551.2,428.9 549.1,427.9 553.7,420.2 555.8,421.6" fill="#008bf7"/><polygon points="546.0,437.8 543.9,436.4 549.1,427.9 551.2,428.9" fill="#0082f7"/><polygon points="541.5,443.2 539.3,441.9 543.9,436.4 546.0,437.8" fill="#0077f7"/><polygon points="535.6,450.2 533.5,448.9 539.3,441.9 541.5,443.2" fill="#0073f7"/><polygon points="531.7,454.8 529.6,454.0 533.5,448.9 535.6,450.2" fill="#006ef7"/><polygon points="522.0,466.3 519.8,465.6 529.6,454.0 531.7,454.8" fill="#0068f7"/><polygon points="512.2,477.9 510.1,476.6 519.8,465.6 522.0,466.3" fill="#005ff7"/><polygon points="502.5,489.5 500.3,488.3 510.1,476.6 512.2,477.9" fill="#0056f7"/><polygon points="492.7,501.0 490.5,499.9 500.3,488.3 502.5,489.5" fill="#004cf7"/><polygon points="482.9,512.5 480.8,511.4 490.5,499.9 492.7,501.0" fill="#0041f7"/><polygon points="473.2,524.1 471.0,523.0 480.8,511.4 482.9,512.5" fill="#0036f7"/><polygon points="463.4,535.7 461.3,534.7 471.0,523.0 473.2,524.1" fill="#0029f7"/><polygon points="456.3,544.1 454.1,543.2 461.3,534.7 463.4,535.7" fill="#001bf7"/><polygon points="611.3,288.3 609.2,288.4 618.3,224.3 620.4,225.2" fill="#00f243"/><polygon points="601.5,348.5 599.4,347.6 609.2,288.4 611.3,288.3" fill="#00f2a4"/><polygon points="595.0,363.7 592.9,362.9 599.4,347.6 601.5,348.5" fill="#00def7"/><polygon points="591.8,369.3 589.6,368.4 592.9,362.9 595.0,363.7" fill="#00caf7"/><polygon points="585.9,378.5 583.8,377.6 589.6,368.4 591.8,369.3" fill="#00c3f7"/><polygon points="582.0,384.3 579.9,383.5 583.8,377.6 585.9,378.5" fill="#00baf7"/><polygon points="576.8,392.5 574.7,391.6 579.9,383.5 582.0,384.3" fill="#00b4f7"/><polygon points="572.9,398.5 570.8,397.6 574.7,391.6 576.8,392.5" fill="#00abf7"/><polygon points="567.7,406.5 565.6,405.6 570.8,397.6 572.9,398.5" fill="#00a6f7"/><polygon points="563.2,414.2 561.0,413.4 565.6,405.6 567.7,406.5" fill="#009cf7"/><polygon points="557.9,422.5 555.8,421.6 561.0,413.4 563.2,414.2" fill="#0094f7"/><polygon points="553.4,429.8 551.2,428.9 555.8,421.6 557.9,422.5" fill="#008af7"/><polygon points="548.2,436.1 546.0,437.8 551.2,428.9 553.4,429.8" fill="#0082f7"/><polygon points="543.6,441.6 541.5,443.2 546.0,437.8 548.2,436.1" fill="#007df7"/><polygon points="537.8,448.7 535.6,450.2 541.5,443.2 543.6,441.6" fill="#0078f7"/><polygon points="533.9,453.4 531.7,454.8 535.6,450.2 537.8,448.7" fill="#0072f7"/><polygon points="524.1,465.1 522.0,466.3 531.7,454.8 533.9,453.4" fill="#006ff7"/><polygon points="514.4,476.9 512.2,477.9 522.0,466.3 524.1,465.1" fill="#0064f7"/><polygon points="504.6,488.7 502.5,489.5 512.2,477.9 514.4,476.9" fill="#005af7"/><polygon points="494.8,500.5 492.7,501.0 502.5,489.5 504.6,488.7" fill="#004ff7"/><polygon points="485.1,512.3 482.9,512.5 492.7,501.0 494.8,500.5" fill="#0044f7"/><polygon points="475.3,524.0 473.2,524.1 482.9,512.5 485.1,512.3" fill="#0039f7"/><polygon points="465.6,535.8 463.4,535.7 473.2,524.1 475.3,524.0" fill="#002cf7"/><polygon points="458.4,544.5 456.3,544.1 463.4,535.7 465.6,535.8" fill="#001ef7"/><polygon points="613.4,284.1 611.3,288.3 620.4,225.2 622.6,226.1" fill="#00f243"/><polygon points="603.7,342.3 601.5,348.5 611.3,288.3 613.4,284.1" fill="#00f29c"/><polygon points="597.2,357.4 595.0,363.7 601.5,348.5 603.7,342.3" fill="#00ecf7"/><polygon points="593.9,363.8 591.8,369.3 595.0,363.7 597.2,357.4" fill="#00d8f7"/><polygon points="588.1,373.6 585.9,378.5 591.8,369.3 593.9,363.8" fill="#00d1f7"/><polygon points="584.2,380.8 582.0,384.3 585.9,378.5 588.1,373.6" fill="#00c6f7"/><polygon points="579.0,389.3 576.8,392.5 582.0,384.3 584.2,380.8" fill="#00bef7"/><polygon points="575.1,397.0 572.9,398.5 576.8,392.5 579.0,389.3" fill="#00b4f7"/><polygon points="569.9,405.7 567.7,406.5 572.9,398.5 575.1,397.0" fill="#00abf7"/><polygon points="565.3,413.5 563.2,414.2 567.7,406.5 569.9,405.7" fill="#00a1f7"/><polygon points="560.1,421.8 557.9,422.5 563.2,414.2 565.3,413.5" fill="#0098f7"/><polygon points="555.5,429.3 553.4,429.8 557.9,422.5 560.1,421.8" fill="#008ef7"/><polygon points="550.3,435.6 548.2,436.1 553.4,429.8 555.5,429.3" fill="#0085f7"/><polygon points="545.8,441.2 543.6,441.6 548.2,436.1 550.3,435.6" fill="#0080f7"/><polygon points="539.9,448.3 537.8,448.7 543.6,441.6 545.8,441.2" fill="#007bf7"/><polygon points="536.0,453.1 533.9,453.4 537.8,448.7 539.9,448.3" fill="#0075f7"/><polygon points="526.3,465.0 524.1,465.1 533.9,453.4 536.0,453.1" fill="#0072f7"/><polygon points="516.5,476.9 514.4,476.9 524.1,465.1 526.3,465.0" fill="#0067f7"/><polygon points="506.7,488.7 504.6,488.7 514.4,476.9 516.5,476.9" fill="#005df7"/><polygon points="497.0,500.7 494.8,500.5 504.6,488.7 506.7,488.7" fill="#0052f7"/><polygon points="487.2,512.5 485.1,512.3 494.8,500.5 497.0,500.7" fill="#0047f7"/><polygon points="477.5,524.5 475.3,524.0 485.1,512.3 487.2,512.5" fill="#003af7"/><polygon points="467.7,536.4 465.6,535.8 475.3,524.0 477.5,524.5" fill="#002df7"/><polygon points="460.6,545.1 458.4,544.5 465.6,535.8 467.7,536.4" fill="#001ff7"/><polygon points="615.6,279.0 613.4,284.1 622.6,226.1 624.7,227.0" fill="#00f243"/><polygon points="605.8,336.1 603.7,342.3 613.4,284.1 615.6,279.0" fill="#00f291"/><polygon points="599.3,352.3 597.2,357.4 603.7,342.3 605.8,336.1" fill="#00f2ed"/><polygon points="596.1,358.9 593.9,363.8 597.2,357.4 599.3,352.3" fill="#00e4f7"/><polygon points="590.2,369.8 588.1,373.6 593.9,363.8 596.1,358.9" fill="#00ddf7"/><polygon points="586.3,377.6 584.2,380.8 588.1,373.6 590.2,369.8" fill="#00d0f7"/><polygon points="581.1,387.9 579.0,389.3 584.2,380.8 586.3,377.6" fill="#00c6f7"/><polygon points="577.2,396.1 575.1,397.0 579.0,389.3 581.1,387.9" fill="#00baf7"/><polygon points="572.0,405.4 569.9,405.7 575.1,397.0 577.2,396.1" fill="#00aef7"/><polygon points="567.5,413.3 565.3,413.5 569.9,405.7 572.0,405.4" fill="#00a3f7"/><polygon points="562.2,421.7 560.1,421.8 565.3,413.5 567.5,413.3" fill="#0099f7"/><polygon points="557.7,429.3 555.5,429.3 560.1,421.8 562.2,421.7" fill="#0090f7"/><polygon points="552.5,435.6 550.3,435.6 555.5,429.3 557.7,429.3" fill="#0087f7"/><polygon points="547.9,441.2 545.8,441.2 550.3,435.6 552.5,435.6" fill="#0082f7"/><polygon points="542.1,448.4 539.9,448.3 545.8,441.2 547.9,441.2" fill="#007df7"/><polygon points="538.2,453.2 536.0,453.1 539.9,448.3 542.1,448.4" fill="#0077f7"/><polygon points="528.4,465.2 526.3,465.0 536.0,453.1 538.2,453.2" fill="#0073f7"/><polygon points="518.7,477.1 516.5,476.9 526.3,465.0 528.4,465.2" fill="#0069f7"/><polygon points="508.9,489.1 506.7,488.7 516.5,476.9 518.7,477.1" fill="#005ff7"/><polygon points="499.1,501.1 497.0,500.7 506.7,488.7 508.9,489.1" fill="#0053f7"/><polygon points="489.4,513.1 487.2,512.5 497.0,500.7 499.1,501.1" fill="#0048f7"/><polygon points="479.6,525.0 477.5,524.5 487.2,512.5 489.4,513.1" fill="#003bf7"/><polygon points="469.9,537.0 467.7,536.4 477.5,524.5 479.6,525.0" fill="#002ef7"/><polygon points="462.7,545.8 460.6,545.1 467.7,536.4 469.9,537.0" fill="#0020f7"/><polygon points="619.9,280.7 615.6,279.0 624.7,227.0 629.0,228.7" fill="#00f243"/><polygon points="610.1,337.8 605.8,336.1 615.6,279.0 619.9,280.7" fill="#00f291"/><polygon points="603.6,354.1 599.3,352.3 605.8,336.1 610.1,337.8" fill="#00f2ed"/><polygon points="600.4,360.6 596.1,358.9 599.3,352.3 603.6,354.1" fill="#00e4f7"/><polygon points="594.5,371.6 590.2,369.8 596.1,358.9 600.4,360.6" fill="#00ddf7"/><polygon points="590.6,379.4 586.3,377.6 590.2,369.8 594.5,371.6" fill="#00d0f7"/><polygon points="585.4,389.6 581.1,387.9 586.3,377.6 590.6,379.4" fill="#00c6f7"/><polygon points="581.5,397.8 577.2,396.1 581.1,387.9 585.4,389.6" fill="#00baf7"/><polygon points="576.3,407.1 572.0,405.4 577.2,396.1 581.5,397.8" fill="#00aef7"/><polygon points="571.7,415.0 567.5,413.3 572.0,405.4 576.3,407.1" fill="#00a3f7"/><polygon points="566.5,423.5 562.2,421.7 567.5,413.3 571.7,415.0" fill="#0099f7"/><polygon points="562.0,431.0 557.7,429.3 562.2,421.7 566.5,423.5" fill="#0090f7"/><polygon points="556.8,437.4 552.5,435.6 557.7,429.3 562.0,431.0" fill="#0087f7"/><polygon points="552.2,442.9 547.9,441.2 552.5,435.6 556.8,437.4" fill="#0082f7"/><polygon points="546.4,450.2 542.1,448.4 547.9,441.2 552.2,442.9" fill="#007df7"/><polygon points="542.5,454.9 538.2,453.2 542.1,448.4 546.4,450.2" fill="#0077f7"/><polygon points="532.7,466.9 528.4,465.2 538.2,453.2 542.5,454.9" fill="#0073f7"/><polygon points="523.0,478.9 518.7,477.1 528.4,465.2 532.7,466.9" fill="#0069f7"/><polygon points="513.2,490.8 508.9,489.1 518.7,477.1 523.0,478.9" fill="#005ff7"/><polygon points="503.4,502.8 499.1,501.1 508.9,489.1 513.2,490.8" fill="#0053f7"/><polygon points="493.7,514.8 489.4,513.1 499.1,501.1 503.4,502.8" fill="#0048f7"/><polygon points="483.9,526.8 479.6,525.0 489.4,513.1 493.7,514.8" fill="#003bf7"/><polygon points="474.2,538.7 469.9,537.0 479.6,525.0 483.9,526.8" fill="#002ef7"/><polygon points="467.0,547.5 462.7,545.8 469.9,537.0 474.2,538.7" fill="#0020f7"/></g><g font-size="9" fill="#0000ff" text-anchor="end"><text x="231.0" y="414.2">1594.20</text><text x="231.0" y="367.8">3015.40</text><text x="231.0" y="321.4">4436.60</text><text x="231.0" y="275.0">5857.80</text><text x="231.0" y="228.6">7279.00</text></g><g font-size="9" fill="#0000ff" text-anchor="start"><text x="633.0" y="376.8">1594.20</text><text x="633.0" y="330.4">3015.40</text><text x="633.0" y="284.0">4436.60</text><text x="633.0" y="237.6">5857.80</text><text x="633.0" y="191.2">7279.00</text></g><g font-size="9" fill="#ff0000" text-anchor="end"><text x="462.0" y="554.8">700</text><text x="442.7" y="547.0">1600</text><text x="421.2" y="538.3">2600</text><text x="395.4" y="527.8">3800</text><text x="369.6" y="517.4">5000</text><text x="337.4" y="504.3">6500</text><text x="305.2" y="491.3">8000</text><text x="273.0" y="478.2">9500</text><text x="240.7" y="465.2">11000</text></g><g font-size="9" fill="#000" text-anchor="start"><text x="469.5" y="555.0">0</text><text x="486.4" y="541.2">26</text><text x="505.9" y="525.3">56</text><text x="525.5" y="509.4">86</text><text x="545.0" y="493.5">116</text><text x="559.3" y="481.8">138</text><text x="574.2" y="469.7">161</text><text x="593.1" y="454.3">190</text><text x="612.6" y="438.4">220</text><text x="631.5" y="423.0">249</text></g><text x="432" y="86" font-size="9.2" fill="#c0c0c0" text-anchor="middle">TunerPro - Version 5.00</text><text x="432.5" y="105" font-size="14.3" font-weight="bold" fill="#000" text-anchor="middle">Fuel :: MAP : Cyl 3</text></svg><div id="gtitle"><svg class="abs" style="left:8px;top:8px" width="16" height="13"><rect x="0" y="2" width="16" height="9" fill="#000"/><g fill="#000"><rect x="1" y="0" width="2" height="13"/><rect x="4" y="0" width="2" height="13"/><rect x="7" y="0" width="2" height="13"/><rect x="10" y="0" width="2" height="13"/><rect x="13" y="0" width="2" height="13"/></g></svg><div class="abs" style="left:29px;top:8px;font-size:12px;line-height:15px;white-space:nowrap;letter-spacing:-0.36px">Fuel :: MAP : Cyl 3</div><svg class="abs" style="left:735px;top:0" width="129" height="30" fill="none" stroke="#000" stroke-width="1"><path d="M10 14.5H20"/><rect x="55.5" y="9.5" width="9" height="9" rx="1.2"/><path d="M101 9L111 19M111 9L101 19"/></svg></div><div id="gmenu"><span class="abs" style="left:7px;top:3px;line-height:15px;letter-spacing:-0.3px">Graph</span><span class="abs" style="left:53px;top:3px;line-height:15px;letter-spacing:-0.2px">View</span></div><div id="gtool"></div><div class="abs" style="left:3px;top:52px;width:2px;height:20px;border-left:1px solid #a0a0a0;border-right:1px solid #fff"></div><svg class="abs" style="left:13px;top:56px" width="14" height="14" stroke="#f00000" stroke-width="2.2" fill="none"><path d="M1.5 1L12 13M12 1L1.5 13"/></svg><div class="abs" style="left:40px;top:52px;width:2px;height:20px;border-left:1px solid #a0a0a0;border-right:1px solid #fff"></div><div class="tb tbs" style="left:46px"></div><div class="tb tbs" style="left:92px"></div><div class="tb tbs" style="left:138px"></div><svg class="abs" style="left:49px;top:55px" width="17" height="17"><path d="M8.6 0.6L16.4 8.5L8.6 16.4L0.8 8.5Z" fill="#000"/><rect x="5" y="4.8" width="7.4" height="7.4" fill="#e8f4fc"/><path d="M8.7 4.8V12.2M5 8.5H12.4" stroke="#f00000" stroke-width="1.3"/></svg><svg class="abs" style="left:69px;top:53px" width="23" height="20" fill="none"><path d="M3 16.6L5.5 8.9L8.8 14.8L13.5 9L16.5 6.5" stroke="#f00000" stroke-width="1.1"/><path d="M16.5 4.5L17.6 12.5" stroke="#0000f0" stroke-width="1"/><g fill="#fff" stroke="#0000f0" stroke-width="1"><circle cx="5.8" cy="8.6" r="1.6"/><circle cx="8.8" cy="14.6" r="1.6"/><circle cx="13.8" cy="8.8" r="1.6"/><circle cx="16.5" cy="4.6" r="1.5"/><circle cx="17.6" cy="12.5" r="1.4"/></g></svg><svg class="abs" style="left:92px;top:53px" width="23" height="20" fill="none"><path d="M5.6 5V16.6H19" stroke="#000" stroke-width="1" stroke-dasharray="2 1"/><path d="M6.3 10.7L8.5 10L10.7 10.4L12.9 6L15.1 6L17.3 8.9L19.5 10.7" stroke="#0000f0" stroke-width="1.2"/><path d="M6 13.7L8.5 13.3L10.7 10.7L12.9 13.7L15.8 10.7L19.5 8.5" stroke="#f00000" stroke-width="1.7"/></svg><svg class="abs" style="left:115px;top:53px" width="23" height="20" fill="none" stroke="#000" stroke-width="1.2"><path d="M4.2 14.6H18.5M4.2 14.6L8.2 10.7H18.8M11.1 7.1H18.8M8.2 10.7L14 3.8H18.8V7.1M18.6 10.7V14.6M11.1 7.1L14 3.8M13.3 10.7L11.1 14.6M14.9 7.1L13.3 10.7"/></svg><svg class="abs" style="left:138px;top:53px" width="23" height="20" fill="none" stroke-width="1.2"><path d="M5 6.3H14.5" stroke="#f00000"/><path d="M5 8.5H16" stroke="#808060"/><path d="M5 10.4H16" stroke="#e8e000"/><path d="M5 12.4H16" stroke="#00c000"/><path d="M5 14.4H14.5" stroke="#0000f0"/><path d="M18.5 3V17M18.3 3.5L14.5 6.3M18.3 16.5L14.5 14.4" stroke="#000" stroke-width="1.1"/></svg><div id="gstat"><div class="abs" style="left:129px;top:1px;width:1px;height:21px;background:#d4d4d4"></div><div class="abs" style="left:259px;top:1px;width:1px;height:21px;background:#d4d4d4"></div><svg class="abs" style="right:2px;bottom:2px" width="12" height="12"><g fill="#b4b4b4"><rect x="9" y="1" width="2" height="2"/><rect x="5" y="5" width="2" height="2"/><rect x="9" y="5" width="2" height="2"/><rect x="1" y="9" width="2" height="2"/><rect x="5" y="9" width="2" height="2"/><rect x="9" y="9" width="2" height="2"/></g></svg></div></div><svg class="abs" style="left:0;top:0;pointer-events:none" width="1695" height="862"><g opacity="0.3" fill="#000"><polyline points="297.8,259.5 295.8,238.7 295.8,216.0 298.4,197.5" fill="none" stroke="#000" stroke-width="7.2" stroke-linejoin="round"/><polyline points="306.5,174.0 316.5,158.7 328.8,149.0 346.6,139.6 366.0,132.7 386.4,129.0 408.4,127.9 438.7,133.0 463.1,141.1 481.0,150.9 495.6,162.2 503.7,175.2 509.4,193.1 511.8,211.0 511.8,233.7 510.2,259.7" fill="none" stroke="#000" stroke-width="7.2" stroke-linejoin="round"/><polygon points="304.4,170.5 313.3,168.9 327.1,168.0 349.0,200.5 369.3,186.7 392.9,250.9 368.5,206.2 366.0,197.3 347.4,207.8 323.9,176.2 299.8,180.2"/><polygon points="295.0,194.4 322.2,185.9 345.8,218.4 364.5,203.0 392.9,250.9 362.8,213.5 344.2,228.1 319.8,192.4 301.9,199.9 294.8,201.0"/><path d="M316.3,270.1 C330,266.5 352,267.5 366.2,273.8 C376,278 385,283.5 390.6,288.4 C382,296 370,302.5 361.4,304.3 C350,307 338,305 332.1,301.8 C324,297 318.5,285 316.3,270.1Z"/><path d="M316.3,270.1 C330,266.5 352,267.5 366.2,273.8 C376,278 385,283.5 390.6,288.4 C382,296 370,302.5 361.4,304.3 C350,307 338,305 332.1,301.8 C324,297 318.5,285 316.3,270.1Z" transform="translate(809.4,0) scale(-1,1)"/><polygon points="404.0,303.6 383.3,340.2 394.3,362.1 404.0,336.5 412.5,362.1 424.2,340.2"/><polygon points="360.0,372.0 370.0,381.0 376.0,376.0 383.0,386.0 389.0,380.0 396.0,390.0 404.0,386.0 410.0,390.0 417.0,381.0 424.0,387.0 431.0,377.0 437.0,382.0 448.0,372.0 440.0,392.0 435.0,388.0 428.0,401.0 422.0,393.0 415.0,407.0 409.0,398.0 404.0,402.0 398.0,398.0 393.0,407.0 387.0,394.0 381.0,400.0 376.0,387.0 371.0,392.0"/><path d="M276,321.7 L286.6,329.2 Q262,361 242.7,397.7 L231,390.4 Q243.3,351.8 276,321.7Z"/><path fill-rule="evenodd" d="M291.5,333.2 L338.6,366.8 L333.7,374.2 L320.7,374.2 L296.3,409.1 L302,422.1 L296.3,431 L247.6,400.1Z M298.4,378.5 A11,11 0 1 0 276.4,378.5 A11,11 0 1 0 298.4,378.5Z"/><path d="M306.1,403.5 L428.1,487.6 L442.5,465.9 L317.5,386.3 Z"/><path fill-rule="evenodd" d="M452.0,487.8 m-29,0 a29,29 0 1 0 58,0 a29,29 0 1 0 -58,0Z M452.0,487.8 m-11,0 a11,11 0 1 1 22,0 a11,11 0 1 1 -22,0Z"/><g transform="translate(809.4,0) scale(-1,1)"><path d="M276,321.7 L286.6,329.2 Q262,361 242.7,397.7 L231,390.4 Q243.3,351.8 276,321.7Z"/><path fill-rule="evenodd" d="M291.5,333.2 L338.6,366.8 L333.7,374.2 L320.7,374.2 L296.3,409.1 L302,422.1 L296.3,431 L247.6,400.1Z M298.4,378.5 A11,11 0 1 0 276.4,378.5 A11,11 0 1 0 298.4,378.5Z"/><path d="M306.1,403.5 L428.1,487.6 L442.5,465.9 L317.5,386.3 Z"/><path fill-rule="evenodd" d="M452.0,487.8 m-29,0 a29,29 0 1 0 58,0 a29,29 0 1 0 -58,0Z M452.0,487.8 m-11,0 a11,11 0 1 1 22,0 a11,11 0 1 1 -22,0Z"/></g><polygon points="255.9,438.5 261.1,454.4 277.8,454.4 264.3,464.2 269.4,480.1 255.9,470.3 242.4,480.1 247.5,464.2 234.0,454.4 250.7,454.4"/><polygon points="553.4,438.5 558.6,454.4 575.3,454.4 561.8,464.2 566.9,480.1 553.4,470.3 539.9,480.1 545.0,464.2 531.5,454.4 548.2,454.4"/><path fill-rule="evenodd" d="M98.5,531 Q98.5,521.5 108,522.3 L142,525.6 Q151.4,526.5 151.4,536 V636 Q151.4,645 142,645 H108 Q98.5,645 98.5,636Z M116.4,543 V626 Q116.4,630.5 121,630.5 H130 Q134.4,630.5 134.4,626 V543 Q134.4,538.5 130,538.3 L121,538 Q116.4,538 116.4,543Z"/><polygon points="178.7,533.3 201.4,538.0 199.6,560.0 199.6,629.6 222.0,630.5 228.7,628.2 225.0,645.8 178.7,646.0 182.5,620.0 182.5,560.0"/><path fill-rule="evenodd" d="M253.3,545.2 L297.6,549.4 L307,556 V639 L297.6,646 H254.2 L257,620 V575Z M273,560.7 V633.3 H290 V562Z"/><polygon points="343.8,554.0 386.2,554.4 390.0,558.8 391.3,580.5 369.2,577.6 373.0,566.3 357.0,566.3 357.0,580.0 391.0,612.0 391.3,640.8 385.0,646.0 343.8,646.0 339.0,640.0 336.0,620.0 358.0,621.0 356.0,633.3 372.5,633.3 372.5,620.0 339.0,589.0 339.0,557.0"/><polygon points="420.3,555.2 442.6,555.2 441.8,574.0 451.0,555.2 467.7,555.2 458.5,579.0 469.0,587.0 474.6,596.0 476.0,640.0 476.5,646.4 454.0,646.4 455.5,640.0 455.0,602.0 450.5,592.0 442.3,603.0 442.6,646.4 420.3,646.4 422.5,625.0 422.5,575.0"/><path d="M504.7,549.3 L522.6,549.5 L521.5,570 V626 Q521.5,630.5 526,630.5 H535 Q539.6,630.5 539.6,626 V570 L537.7,549 L560.4,545.6 L556.5,570 V637 L548,646 H513 L505.5,637 V570Z"/><polygon points="586.8,541.8 610.4,537.5 605.7,565.0 605.7,630.0 629.0,630.5 635.8,628.2 632.0,646.0 585.9,646.0 589.6,620.0 589.6,565.0"/><polygon points="661.3,527.6 684.0,523.0 681.0,555.0 681.0,630.0 703.5,630.5 710.4,626.7 706.6,646.0 660.4,646.0 664.0,620.0 664.0,555.0"/><path d="M186.7,683 H217.4 V692.3 H208 V718.7 H196.2 V692.3 H186.7Z"/><path d="M267.7,683 H279 V703 Q279,709.3 284.7,709.3 Q290.4,709.3 290.4,703 V683 H301.7 V703.5 Q301.7,719.4 284.7,719.4 Q267.7,719.4 267.7,703.5Z"/><polygon points="353.5,683.0 363.9,683.0 376.6,702.5 376.6,683.0 387.9,683.0 387.9,718.7 377.5,718.7 364.8,699.2 364.8,718.7 353.5,718.7"/><polygon points="503.5,683.0 513.9,683.0 526.6,702.5 526.6,683.0 537.9,683.0 537.9,718.7 527.5,718.7 514.8,699.2 514.8,718.7 503.5,718.7"/><rect x="440.9" y="683" width="9.9" height="35.7"/><path d="M616.5,692.0 A13.3,13.6 0 1 0 617.1,709.1" fill="none" stroke="#000" stroke-width="10.8"/><path d="M605.8,697 H623.2 V713 L613,716 V705 H605.8Z"/></g></svg></body></html>
